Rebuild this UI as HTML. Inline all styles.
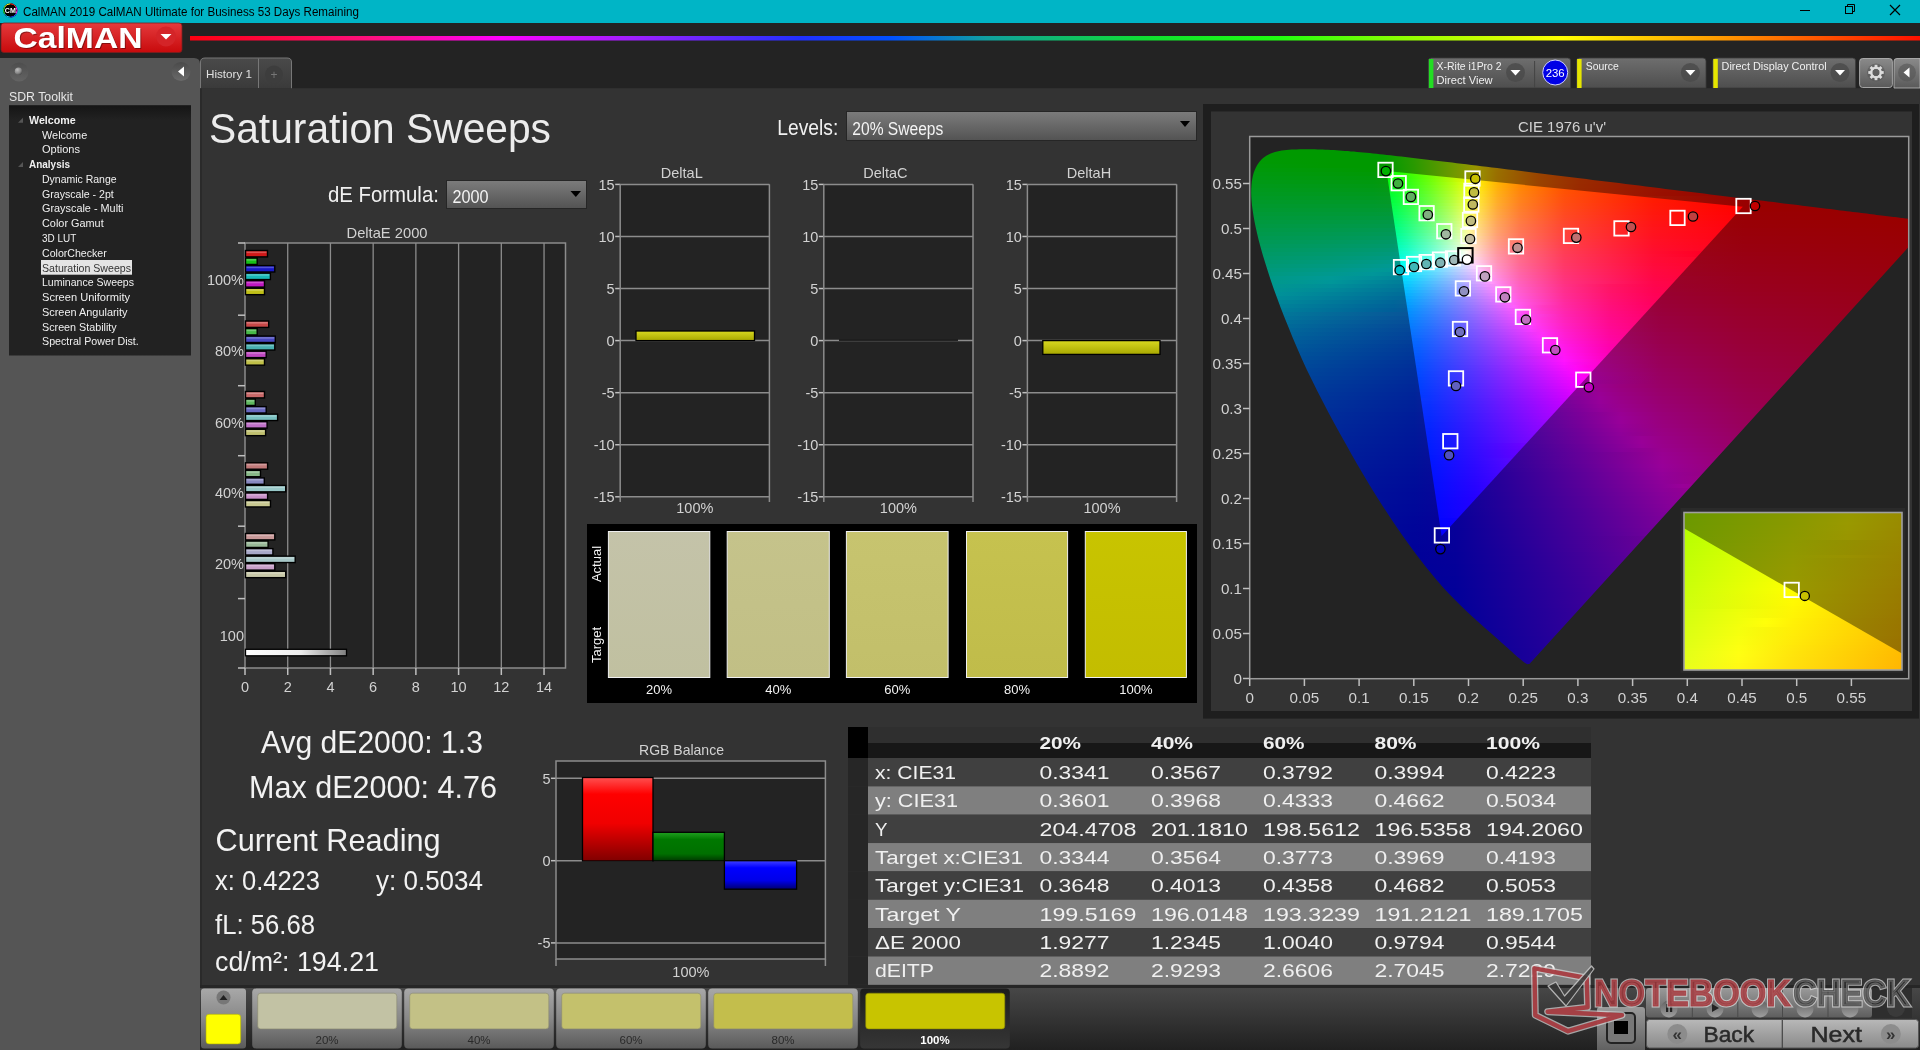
<!DOCTYPE html>
<html><head><meta charset="utf-8"><title>CalMAN</title>
<style>html,body{margin:0;padding:0;background:#333;overflow:hidden}svg{display:block;will-change:transform}text{font-family:"Liberation Sans", sans-serif}</style>
</head><body>
<svg width="1920" height="1050" viewBox="0 0 1920 1050">
<defs><linearGradient id="gRed" x1="0" y1="0" x2="0" y2="1"><stop offset="0" stop-color="#e43a3c"/><stop offset="1" stop-color="#c80a0c"/></linearGradient><linearGradient id="gRain" x1="0" y1="0" x2="1" y2="0"><stop offset="0" stop-color="#ff0010"/><stop offset="0.106" stop-color="#ff1080"/><stop offset="0.18" stop-color="#ff00ff"/><stop offset="0.255" stop-color="#a020ff"/><stop offset="0.353" stop-color="#2030ff"/><stop offset="0.405" stop-color="#0050ff"/><stop offset="0.46" stop-color="#10a0a0"/><stop offset="0.554" stop-color="#10e030"/><stop offset="0.629" stop-color="#20ff10"/><stop offset="0.703" stop-color="#90ff00"/><stop offset="0.793" stop-color="#ffff00"/><stop offset="0.879" stop-color="#ffa000"/><stop offset="1" stop-color="#ff1000"/></linearGradient><linearGradient id="gBtn" x1="0" y1="0" x2="0" y2="1"><stop offset="0" stop-color="#4a4a4a"/><stop offset="1" stop-color="#6a6a6a"/></linearGradient><radialGradient id="gSph" cx="0.35" cy="0.3" r="0.75"><stop offset="0" stop-color="#bdbdbd"/><stop offset="0.6" stop-color="#8a8a8a"/><stop offset="1" stop-color="#4a4a4a"/></radialGradient><linearGradient id="gTree" x1="0" y1="0" x2="0" y2="1"><stop offset="0" stop-color="#151515"/><stop offset="0.06" stop-color="#222222"/><stop offset="1" stop-color="#222222"/></linearGradient><linearGradient id="gTab" x1="0" y1="0" x2="0" y2="1"><stop offset="0" stop-color="#4a4a4a"/><stop offset="1" stop-color="#3a3a3a"/></linearGradient><linearGradient id="gDrop" x1="0" y1="0" x2="0" y2="1"><stop offset="0" stop-color="#7c7c7c"/><stop offset="1" stop-color="#535353"/></linearGradient><linearGradient id="gb0" x1="0" y1="0" x2="0" y2="1"><stop offset="0" stop-color="#ffffff"/><stop offset="0.35" stop-color="#d01818"/><stop offset="1" stop-color="#d01818"/></linearGradient><linearGradient id="gb1" x1="0" y1="0" x2="0" y2="1"><stop offset="0" stop-color="#ffffff"/><stop offset="0.35" stop-color="#18c018"/><stop offset="1" stop-color="#18c018"/></linearGradient><linearGradient id="gb2" x1="0" y1="0" x2="0" y2="1"><stop offset="0" stop-color="#ffffff"/><stop offset="0.35" stop-color="#1818c8"/><stop offset="1" stop-color="#1818c8"/></linearGradient><linearGradient id="gb3" x1="0" y1="0" x2="0" y2="1"><stop offset="0" stop-color="#ffffff"/><stop offset="0.35" stop-color="#18b8b8"/><stop offset="1" stop-color="#18b8b8"/></linearGradient><linearGradient id="gb4" x1="0" y1="0" x2="0" y2="1"><stop offset="0" stop-color="#ffffff"/><stop offset="0.35" stop-color="#c018c0"/><stop offset="1" stop-color="#c018c0"/></linearGradient><linearGradient id="gb5" x1="0" y1="0" x2="0" y2="1"><stop offset="0" stop-color="#ffffff"/><stop offset="0.35" stop-color="#c0c018"/><stop offset="1" stop-color="#c0c018"/></linearGradient><linearGradient id="gb6" x1="0" y1="0" x2="0" y2="1"><stop offset="0" stop-color="#ffffff"/><stop offset="0.35" stop-color="#c84848"/><stop offset="1" stop-color="#c84848"/></linearGradient><linearGradient id="gb7" x1="0" y1="0" x2="0" y2="1"><stop offset="0" stop-color="#ffffff"/><stop offset="0.35" stop-color="#48b848"/><stop offset="1" stop-color="#48b848"/></linearGradient><linearGradient id="gb8" x1="0" y1="0" x2="0" y2="1"><stop offset="0" stop-color="#ffffff"/><stop offset="0.35" stop-color="#4848c0"/><stop offset="1" stop-color="#4848c0"/></linearGradient><linearGradient id="gb9" x1="0" y1="0" x2="0" y2="1"><stop offset="0" stop-color="#ffffff"/><stop offset="0.35" stop-color="#48b0b0"/><stop offset="1" stop-color="#48b0b0"/></linearGradient><linearGradient id="gb10" x1="0" y1="0" x2="0" y2="1"><stop offset="0" stop-color="#ffffff"/><stop offset="0.35" stop-color="#c048c0"/><stop offset="1" stop-color="#c048c0"/></linearGradient><linearGradient id="gb11" x1="0" y1="0" x2="0" y2="1"><stop offset="0" stop-color="#ffffff"/><stop offset="0.35" stop-color="#c0c048"/><stop offset="1" stop-color="#c0c048"/></linearGradient><linearGradient id="gb12" x1="0" y1="0" x2="0" y2="1"><stop offset="0" stop-color="#ffffff"/><stop offset="0.35" stop-color="#c86868"/><stop offset="1" stop-color="#c86868"/></linearGradient><linearGradient id="gb13" x1="0" y1="0" x2="0" y2="1"><stop offset="0" stop-color="#ffffff"/><stop offset="0.35" stop-color="#60b860"/><stop offset="1" stop-color="#60b860"/></linearGradient><linearGradient id="gb14" x1="0" y1="0" x2="0" y2="1"><stop offset="0" stop-color="#ffffff"/><stop offset="0.35" stop-color="#6868c0"/><stop offset="1" stop-color="#6868c0"/></linearGradient><linearGradient id="gb15" x1="0" y1="0" x2="0" y2="1"><stop offset="0" stop-color="#ffffff"/><stop offset="0.35" stop-color="#78c0c0"/><stop offset="1" stop-color="#78c0c0"/></linearGradient><linearGradient id="gb16" x1="0" y1="0" x2="0" y2="1"><stop offset="0" stop-color="#ffffff"/><stop offset="0.35" stop-color="#c070c8"/><stop offset="1" stop-color="#c070c8"/></linearGradient><linearGradient id="gb17" x1="0" y1="0" x2="0" y2="1"><stop offset="0" stop-color="#ffffff"/><stop offset="0.35" stop-color="#c0c070"/><stop offset="1" stop-color="#c0c070"/></linearGradient><linearGradient id="gb18" x1="0" y1="0" x2="0" y2="1"><stop offset="0" stop-color="#ffffff"/><stop offset="0.35" stop-color="#c07878"/><stop offset="1" stop-color="#c07878"/></linearGradient><linearGradient id="gb19" x1="0" y1="0" x2="0" y2="1"><stop offset="0" stop-color="#ffffff"/><stop offset="0.35" stop-color="#88b888"/><stop offset="1" stop-color="#88b888"/></linearGradient><linearGradient id="gb20" x1="0" y1="0" x2="0" y2="1"><stop offset="0" stop-color="#ffffff"/><stop offset="0.35" stop-color="#8888c0"/><stop offset="1" stop-color="#8888c0"/></linearGradient><linearGradient id="gb21" x1="0" y1="0" x2="0" y2="1"><stop offset="0" stop-color="#ffffff"/><stop offset="0.35" stop-color="#98c8c8"/><stop offset="1" stop-color="#98c8c8"/></linearGradient><linearGradient id="gb22" x1="0" y1="0" x2="0" y2="1"><stop offset="0" stop-color="#ffffff"/><stop offset="0.35" stop-color="#c890c8"/><stop offset="1" stop-color="#c890c8"/></linearGradient><linearGradient id="gb23" x1="0" y1="0" x2="0" y2="1"><stop offset="0" stop-color="#ffffff"/><stop offset="0.35" stop-color="#c8c890"/><stop offset="1" stop-color="#c8c890"/></linearGradient><linearGradient id="gb24" x1="0" y1="0" x2="0" y2="1"><stop offset="0" stop-color="#ffffff"/><stop offset="0.35" stop-color="#c89898"/><stop offset="1" stop-color="#c89898"/></linearGradient><linearGradient id="gb25" x1="0" y1="0" x2="0" y2="1"><stop offset="0" stop-color="#ffffff"/><stop offset="0.35" stop-color="#98b898"/><stop offset="1" stop-color="#98b898"/></linearGradient><linearGradient id="gb26" x1="0" y1="0" x2="0" y2="1"><stop offset="0" stop-color="#ffffff"/><stop offset="0.35" stop-color="#a8a8c8"/><stop offset="1" stop-color="#a8a8c8"/></linearGradient><linearGradient id="gb27" x1="0" y1="0" x2="0" y2="1"><stop offset="0" stop-color="#ffffff"/><stop offset="0.35" stop-color="#a8c8c8"/><stop offset="1" stop-color="#a8c8c8"/></linearGradient><linearGradient id="gb28" x1="0" y1="0" x2="0" y2="1"><stop offset="0" stop-color="#ffffff"/><stop offset="0.35" stop-color="#c8a0c8"/><stop offset="1" stop-color="#c8a0c8"/></linearGradient><linearGradient id="gb29" x1="0" y1="0" x2="0" y2="1"><stop offset="0" stop-color="#ffffff"/><stop offset="0.35" stop-color="#c8c8a8"/><stop offset="1" stop-color="#c8c8a8"/></linearGradient><linearGradient id="gWhiteBar" x1="0" y1="0" x2="1" y2="0"><stop offset="0" stop-color="#ffffff"/><stop offset="0.55" stop-color="#ececec"/><stop offset="1" stop-color="#808080"/></linearGradient><linearGradient id="gy0" x1="0" y1="0" x2="0" y2="1"><stop offset="0" stop-color="#d8d820"/><stop offset="1" stop-color="#a8a800"/></linearGradient><linearGradient id="gy2" x1="0" y1="0" x2="0" y2="1"><stop offset="0" stop-color="#d8d820"/><stop offset="1" stop-color="#a8a800"/></linearGradient><linearGradient id="gsw0" x1="0" y1="0" x2="0" y2="1"><stop offset="0" stop-color="#c4c3a9"/><stop offset="1" stop-color="#c0c0a0"/></linearGradient><linearGradient id="gsw1" x1="0" y1="0" x2="0" y2="1"><stop offset="0" stop-color="#c5c38b"/><stop offset="1" stop-color="#c1bf85"/></linearGradient><linearGradient id="gsw2" x1="0" y1="0" x2="0" y2="1"><stop offset="0" stop-color="#c7c46f"/><stop offset="1" stop-color="#c2bf6a"/></linearGradient><linearGradient id="gsw3" x1="0" y1="0" x2="0" y2="1"><stop offset="0" stop-color="#c6c24f"/><stop offset="1" stop-color="#c0bc4a"/></linearGradient><linearGradient id="gsw4" x1="0" y1="0" x2="0" y2="1"><stop offset="0" stop-color="#c8c400"/><stop offset="1" stop-color="#c3bd00"/></linearGradient><linearGradient id="gR" x1="0" y1="0" x2="0" y2="1"><stop offset="0" stop-color="#ff5050"/><stop offset="0.2" stop-color="#ff0000"/><stop offset="0.55" stop-color="#f00000"/><stop offset="1" stop-color="#800000"/></linearGradient><linearGradient id="gG" x1="0" y1="0" x2="0" y2="1"><stop offset="0" stop-color="#20a020"/><stop offset="0.25" stop-color="#007800"/><stop offset="0.75" stop-color="#007000"/><stop offset="1" stop-color="#003800"/></linearGradient><linearGradient id="gB" x1="0" y1="0" x2="0" y2="1"><stop offset="0" stop-color="#4040ff"/><stop offset="0.25" stop-color="#0000ff"/><stop offset="0.7" stop-color="#0000e8"/><stop offset="1" stop-color="#000070"/></linearGradient><linearGradient id="gHdr" x1="0" y1="0" x2="0" y2="1"><stop offset="0" stop-color="#2f2f2f"/><stop offset="0.52" stop-color="#2f2f2f"/><stop offset="0.53" stop-color="#171717"/><stop offset="1" stop-color="#171717"/></linearGradient><linearGradient id="gTool" x1="0" y1="0" x2="0" y2="1"><stop offset="0" stop-color="#6e6e6e"/><stop offset="1" stop-color="#4e4e4e"/></linearGradient><linearGradient id="gGear" x1="0" y1="0" x2="0" y2="1"><stop offset="0" stop-color="#8a8a8a"/><stop offset="1" stop-color="#5a5a5a"/></linearGradient><linearGradient id="gStrip" x1="0" y1="0" x2="0" y2="1"><stop offset="0" stop-color="#474747"/><stop offset="1" stop-color="#202020"/></linearGradient><linearGradient id="gThumb" x1="0" y1="0" x2="0" y2="1"><stop offset="0" stop-color="#a8a8a8"/><stop offset="0.5" stop-color="#888888"/><stop offset="1" stop-color="#5a5a5a"/></linearGradient><linearGradient id="gThumbSel" x1="0" y1="0" x2="0" y2="1"><stop offset="0" stop-color="#1c1c1c"/><stop offset="1" stop-color="#363636"/></linearGradient><linearGradient id="gCtl" x1="0" y1="0" x2="0" y2="1"><stop offset="0" stop-color="#9a9a9a"/><stop offset="1" stop-color="#5e5e5e"/></linearGradient><linearGradient id="gCirc" x1="0" y1="0" x2="0" y2="1"><stop offset="0" stop-color="#5a5a5a"/><stop offset="1" stop-color="#b0b0b0"/></linearGradient><linearGradient id="gNav" x1="0" y1="0" x2="0" y2="1"><stop offset="0" stop-color="#b8b8b8"/><stop offset="1" stop-color="#8a8a8a"/></linearGradient><clipPath id="cpLocus"><path d="M1529.4 664.1 L1529.4 664.1 L1529.3 664.1 L1529.2 664.1 L1529.1 664.1 L1529.0 664.1 L1528.9 664.1 L1528.8 664.1 L1528.7 664.1 L1528.5 664.1 L1528.4 664.1 L1528.3 664.1 L1528.2 664.1 L1528.0 664.1 L1527.9 664.2 L1527.8 664.2 L1527.6 664.2 L1527.4 664.2 L1527.3 664.1 L1527.0 664.1 L1526.8 664.0 L1526.6 663.8 L1526.3 663.7 L1526.0 663.5 L1525.6 663.3 L1525.2 663.0 L1524.8 662.7 L1524.3 662.4 L1523.8 662.0 L1523.3 661.7 L1522.8 661.2 L1522.2 660.8 L1521.6 660.3 L1521.0 659.8 L1520.4 659.3 L1519.7 658.7 L1519.0 658.1 L1518.1 657.4 L1517.3 656.7 L1516.4 655.9 L1515.4 655.1 L1514.4 654.2 L1513.4 653.3 L1512.4 652.3 L1511.3 651.3 L1510.1 650.3 L1509.0 649.2 L1507.7 648.1 L1506.5 646.9 L1505.1 645.7 L1503.7 644.5 L1502.3 643.2 L1500.8 641.9 L1499.3 640.6 L1497.6 639.1 L1495.9 637.6 L1494.1 636.0 L1492.2 634.3 L1490.2 632.6 L1488.2 630.8 L1486.1 628.9 L1483.9 627.0 L1481.7 625.1 L1479.5 623.1 L1477.1 621.0 L1474.7 618.8 L1472.2 616.5 L1469.5 614.0 L1466.8 611.5 L1464.0 608.8 L1461.1 606.0 L1458.1 603.1 L1455.1 599.9 L1451.9 596.7 L1448.7 593.4 L1445.4 589.9 L1442.0 586.2 L1438.4 582.1 L1434.5 577.5 L1430.5 572.5 L1426.1 567.2 L1421.7 561.5 L1417.0 555.5 L1412.2 549.1 L1407.3 542.3 L1402.3 535.2 L1397.1 527.7 L1391.7 519.8 L1386.3 511.6 L1380.7 503.0 L1375.2 494.2 L1369.5 484.9 L1363.7 475.2 L1357.8 465.2 L1351.9 455.0 L1346.1 444.6 L1340.3 434.2 L1334.5 423.7 L1328.7 412.9 L1323.0 401.9 L1317.3 391.0 L1311.9 380.1 L1306.7 369.4 L1301.8 358.8 L1297.1 348.1 L1292.6 337.5 L1288.4 327.1 L1284.3 316.9 L1280.5 307.2 L1277.0 297.7 L1273.6 288.5 L1270.5 279.5 L1267.7 270.8 L1265.1 262.6 L1262.7 254.7 L1260.6 247.3 L1258.7 240.3 L1257.1 233.6 L1255.7 227.3 L1254.5 221.4 L1253.5 215.7 L1252.7 210.4 L1252.0 205.5 L1251.6 200.9 L1251.3 196.5 L1251.2 192.5 L1251.3 188.6 L1251.5 184.9 L1251.8 181.5 L1252.4 178.3 L1253.0 175.3 L1253.8 172.5 L1254.8 169.9 L1255.9 167.5 L1257.1 165.2 L1258.4 163.2 L1259.9 161.3 L1261.5 159.6 L1263.1 158.1 L1264.9 156.7 L1266.7 155.5 L1268.7 154.5 L1270.7 153.5 L1272.8 152.8 L1275.0 152.0 L1277.2 151.4 L1279.5 150.9 L1281.8 150.6 L1284.2 150.3 L1286.6 150.0 L1289.1 149.8 L1291.6 149.6 L1294.1 149.5 L1296.7 149.4 L1299.3 149.3 L1301.9 149.3 L1304.5 149.2 L1307.0 149.2 L1309.6 149.2 L1312.2 149.3 L1314.8 149.3 L1317.4 149.4 L1320.1 149.5 L1322.7 149.6 L1325.4 149.7 L1328.1 149.8 L1330.8 149.9 L1333.6 150.1 L1336.4 150.3 L1339.2 150.5 L1342.1 150.7 L1345.0 150.9 L1347.9 151.1 L1350.9 151.4 L1353.9 151.6 L1357.0 151.9 L1360.1 152.2 L1363.2 152.5 L1366.4 152.8 L1369.7 153.1 L1373.0 153.5 L1376.4 153.8 L1379.8 154.2 L1383.2 154.6 L1386.7 154.9 L1390.3 155.3 L1394.0 155.7 L1397.7 156.2 L1401.4 156.6 L1405.3 157.0 L1409.2 157.5 L1413.2 157.9 L1417.2 158.4 L1421.3 158.9 L1425.5 159.4 L1429.7 159.9 L1434.0 160.4 L1438.4 161.0 L1442.9 161.5 L1447.4 162.0 L1452.1 162.6 L1456.8 163.2 L1461.5 163.7 L1466.4 164.3 L1471.3 164.9 L1476.4 165.5 L1481.4 166.2 L1486.6 166.8 L1491.9 167.5 L1497.2 168.1 L1502.6 168.8 L1508.1 169.4 L1513.7 170.1 L1519.3 170.8 L1525.0 171.5 L1530.8 172.3 L1536.7 173.0 L1542.7 173.7 L1548.7 174.5 L1554.8 175.2 L1561.0 176.0 L1567.2 176.7 L1573.5 177.5 L1579.8 178.3 L1586.3 179.1 L1592.7 179.9 L1599.3 180.7 L1605.8 181.5 L1612.4 182.3 L1619.0 183.1 L1625.7 183.9 L1632.4 184.8 L1639.1 185.6 L1645.8 186.4 L1652.4 187.2 L1658.9 188.1 L1665.4 188.9 L1671.9 189.7 L1678.3 190.4 L1684.7 191.2 L1691.1 192.0 L1697.5 192.8 L1703.9 193.6 L1710.2 194.4 L1716.5 195.2 L1722.7 195.9 L1728.8 196.7 L1734.8 197.4 L1740.6 198.1 L1746.4 198.8 L1752.0 199.5 L1757.5 200.2 L1763.0 200.8 L1768.3 201.5 L1773.5 202.1 L1778.6 202.8 L1783.6 203.4 L1788.4 204.0 L1793.2 204.6 L1797.8 205.1 L1802.2 205.7 L1806.6 206.2 L1810.8 206.8 L1814.9 207.3 L1818.9 207.8 L1822.7 208.2 L1826.5 208.7 L1830.1 209.1 L1833.6 209.6 L1837.0 210.0 L1840.4 210.4 L1843.6 210.8 L1846.8 211.2 L1849.8 211.5 L1852.8 211.9 L1855.7 212.3 L1858.5 212.6 L1861.3 213.0 L1864.0 213.3 L1866.7 213.6 L1869.3 214.0 L1871.8 214.3 L1874.2 214.6 L1876.6 214.9 L1879.0 215.2 L1881.2 215.4 L1883.4 215.7 L1885.5 216.0 L1887.5 216.2 L1889.5 216.5 L1891.4 216.7 L1893.2 216.9 L1895.0 217.1 L1896.7 217.3 L1898.3 217.5 L1899.8 217.7 L1901.3 217.9 L1902.7 218.1 L1904.1 218.2 L1905.4 218.4 L1906.6 218.5 L1907.9 218.7 L1909.0 218.8 L1910.1 219.0 L1911.2 219.1 L1912.2 219.2 L1913.1 219.4 L1914.0 219.5 L1914.8 219.6 L1915.6 219.7 L1916.4 219.8 L1917.2 219.8 L1918.0 220.0 L1918.9 220.1 L1919.9 220.2 L1920.9 220.3 L1921.9 220.4 L1922.9 220.6 L1923.8 220.7 L1924.6 220.8 L1925.3 220.9 L1925.9 220.9 L1926.6 221.0 L1927.2 221.1 L1927.9 221.2 L1928.6 221.3 L1929.3 221.3 L1930.0 221.4 L1930.7 221.5 L1931.3 221.6 L1931.7 221.6 Z"/></clipPath><clipPath id="cpPlot"><rect x="1249.7" y="136.5" width="659" height="542.2"/></clipPath><clipPath id="cpTri"><path d="M1742.8 206.8 L1386.5 171.1 L1441.6 536.1 Z"/></clipPath><linearGradient id="r0" gradientUnits="userSpaceOnUse" x1="1249" y1="0" x2="1910" y2="0"><stop offset="0.0000" stop-color="#009900"/><stop offset="0.1250" stop-color="#009900"/><stop offset="0.1875" stop-color="#009900"/><stop offset="0.2031" stop-color="#009900"/><stop offset="0.2188" stop-color="#0e9900"/><stop offset="0.2500" stop-color="#2b9900"/><stop offset="0.3125" stop-color="#719900"/><stop offset="0.3438" stop-color="#999700"/><stop offset="0.3750" stop-color="#997400"/><stop offset="0.4375" stop-color="#994900"/><stop offset="0.5000" stop-color="#993000"/><stop offset="0.6250" stop-color="#991500"/><stop offset="0.7500" stop-color="#990600"/><stop offset="1.0000" stop-color="#990000"/></linearGradient><linearGradient id="r1" gradientUnits="userSpaceOnUse" x1="1249" y1="0" x2="1910" y2="0"><stop offset="0.0000" stop-color="#009900"/><stop offset="0.1250" stop-color="#009900"/><stop offset="0.1875" stop-color="#009900"/><stop offset="0.2031" stop-color="#009900"/><stop offset="0.2188" stop-color="#0d9900"/><stop offset="0.2500" stop-color="#2b9900"/><stop offset="0.3125" stop-color="#719900"/><stop offset="0.3438" stop-color="#999700"/><stop offset="0.3750" stop-color="#997300"/><stop offset="0.4375" stop-color="#994800"/><stop offset="0.5000" stop-color="#993000"/><stop offset="0.6250" stop-color="#991400"/><stop offset="0.7500" stop-color="#990600"/><stop offset="1.0000" stop-color="#990000"/></linearGradient><linearGradient id="r2" gradientUnits="userSpaceOnUse" x1="1249" y1="0" x2="1910" y2="0"><stop offset="0.0000" stop-color="#009901"/><stop offset="0.1250" stop-color="#009900"/><stop offset="0.1875" stop-color="#009900"/><stop offset="0.2031" stop-color="#009900"/><stop offset="0.2188" stop-color="#0c9900"/><stop offset="0.2500" stop-color="#2a9900"/><stop offset="0.3125" stop-color="#729900"/><stop offset="0.3438" stop-color="#999600"/><stop offset="0.3750" stop-color="#997200"/><stop offset="0.4375" stop-color="#994800"/><stop offset="0.5000" stop-color="#992f00"/><stop offset="0.6250" stop-color="#991400"/><stop offset="0.7500" stop-color="#990500"/><stop offset="1.0000" stop-color="#990000"/></linearGradient><linearGradient id="r3" gradientUnits="userSpaceOnUse" x1="1249" y1="0" x2="1910" y2="0"><stop offset="0.0000" stop-color="#009904"/><stop offset="0.1250" stop-color="#009900"/><stop offset="0.1875" stop-color="#009900"/><stop offset="0.2188" stop-color="#0c9900"/><stop offset="0.2500" stop-color="#2a9900"/><stop offset="0.3125" stop-color="#729900"/><stop offset="0.3438" stop-color="#999500"/><stop offset="0.3750" stop-color="#997100"/><stop offset="0.4375" stop-color="#994700"/><stop offset="0.5000" stop-color="#992e00"/><stop offset="0.6250" stop-color="#991300"/><stop offset="0.7500" stop-color="#990500"/><stop offset="1.0000" stop-color="#990000"/></linearGradient><linearGradient id="r4" gradientUnits="userSpaceOnUse" x1="1249" y1="0" x2="1910" y2="0"><stop offset="0.0000" stop-color="#009908"/><stop offset="0.1250" stop-color="#009900"/><stop offset="0.1875" stop-color="#009900"/><stop offset="0.2188" stop-color="#0b9900"/><stop offset="0.2500" stop-color="#299900"/><stop offset="0.3125" stop-color="#729900"/><stop offset="0.3438" stop-color="#999400"/><stop offset="0.3750" stop-color="#997000"/><stop offset="0.4375" stop-color="#994600"/><stop offset="0.5000" stop-color="#992e00"/><stop offset="0.6250" stop-color="#991300"/><stop offset="0.7500" stop-color="#990400"/><stop offset="1.0000" stop-color="#990000"/></linearGradient><linearGradient id="r5" gradientUnits="userSpaceOnUse" x1="1249" y1="0" x2="1910" y2="0"><stop offset="0.0000" stop-color="#00990b"/><stop offset="0.1250" stop-color="#009905"/><stop offset="0.1875" stop-color="#009900"/><stop offset="0.2188" stop-color="#0a9900"/><stop offset="0.2500" stop-color="#299900"/><stop offset="0.3125" stop-color="#729900"/><stop offset="0.3438" stop-color="#999300"/><stop offset="0.3750" stop-color="#997000"/><stop offset="0.4375" stop-color="#994500"/><stop offset="0.5000" stop-color="#992d00"/><stop offset="0.6250" stop-color="#991200"/><stop offset="0.7500" stop-color="#990400"/><stop offset="1.0000" stop-color="#990000"/></linearGradient><linearGradient id="r6" gradientUnits="userSpaceOnUse" x1="1249" y1="0" x2="1910" y2="0"><stop offset="0.0000" stop-color="#00990f"/><stop offset="0.1250" stop-color="#009909"/><stop offset="0.1875" stop-color="#009905"/><stop offset="0.2188" stop-color="#099903"/><stop offset="0.2500" stop-color="#289900"/><stop offset="0.3125" stop-color="#739900"/><stop offset="0.3438" stop-color="#999300"/><stop offset="0.3750" stop-color="#996f00"/><stop offset="0.4375" stop-color="#994400"/><stop offset="0.5000" stop-color="#992c00"/><stop offset="0.6250" stop-color="#991200"/><stop offset="0.7500" stop-color="#990300"/><stop offset="1.0000" stop-color="#990000"/></linearGradient><linearGradient id="r7" gradientUnits="userSpaceOnUse" x1="1249" y1="0" x2="1910" y2="0"><stop offset="0.0000" stop-color="#009912"/><stop offset="0.1250" stop-color="#00990d"/><stop offset="0.1875" stop-color="#00990a"/><stop offset="0.2188" stop-color="#099908"/><stop offset="0.2500" stop-color="#289905"/><stop offset="0.3125" stop-color="#739900"/><stop offset="0.3438" stop-color="#999200"/><stop offset="0.3750" stop-color="#996e00"/><stop offset="0.4375" stop-color="#994400"/><stop offset="0.5000" stop-color="#992c00"/><stop offset="0.6250" stop-color="#991100"/><stop offset="0.7500" stop-color="#990300"/><stop offset="1.0000" stop-color="#990000"/></linearGradient><linearGradient id="r8" gradientUnits="userSpaceOnUse" x1="1249" y1="0" x2="1910" y2="0"><stop offset="0.0000" stop-color="#009916"/><stop offset="0.1250" stop-color="#009911"/><stop offset="0.1875" stop-color="#00990e"/><stop offset="0.2188" stop-color="#08990d"/><stop offset="0.2500" stop-color="#27990b"/><stop offset="0.3125" stop-color="#739906"/><stop offset="0.3281" stop-color="#8a9904"/><stop offset="0.3438" stop-color="#999103"/><stop offset="0.3750" stop-color="#996d00"/><stop offset="0.4375" stop-color="#994300"/><stop offset="0.5000" stop-color="#992b00"/><stop offset="0.6250" stop-color="#991100"/><stop offset="0.7500" stop-color="#990300"/><stop offset="1.0000" stop-color="#990000"/></linearGradient><linearGradient id="r9" gradientUnits="userSpaceOnUse" x1="1249" y1="0" x2="1910" y2="0"><stop offset="0.0000" stop-color="#00991a"/><stop offset="0.1250" stop-color="#009916"/><stop offset="0.1875" stop-color="#009913"/><stop offset="0.2188" stop-color="#079912"/><stop offset="0.2500" stop-color="#279910"/><stop offset="0.3125" stop-color="#74990c"/><stop offset="0.3281" stop-color="#8a990b"/><stop offset="0.3438" stop-color="#999009"/><stop offset="0.3750" stop-color="#996c05"/><stop offset="0.4375" stop-color="#994200"/><stop offset="0.5000" stop-color="#992a00"/><stop offset="0.6250" stop-color="#991000"/><stop offset="0.7500" stop-color="#990200"/><stop offset="1.0000" stop-color="#990000"/></linearGradient><linearGradient id="r10" gradientUnits="userSpaceOnUse" x1="1249" y1="0" x2="1910" y2="0"><stop offset="0.0000" stop-color="#00991e"/><stop offset="0.1250" stop-color="#00991a"/><stop offset="0.1875" stop-color="#009918"/><stop offset="0.2188" stop-color="#069917"/><stop offset="0.2500" stop-color="#269916"/><stop offset="0.3125" stop-color="#749912"/><stop offset="0.3281" stop-color="#8b9911"/><stop offset="0.3438" stop-color="#998f0f"/><stop offset="0.3750" stop-color="#996b0a"/><stop offset="0.4375" stop-color="#994103"/><stop offset="0.5000" stop-color="#992900"/><stop offset="0.6250" stop-color="#991000"/><stop offset="0.7500" stop-color="#990200"/><stop offset="1.0000" stop-color="#990000"/></linearGradient><linearGradient id="r11" gradientUnits="userSpaceOnUse" x1="1249" y1="0" x2="1910" y2="0"><stop offset="0.0000" stop-color="#009921"/><stop offset="0.1250" stop-color="#00991f"/><stop offset="0.1875" stop-color="#00991d"/><stop offset="0.2188" stop-color="#05991c"/><stop offset="0.2500" stop-color="#26991b"/><stop offset="0.3125" stop-color="#749919"/><stop offset="0.3281" stop-color="#8c9918"/><stop offset="0.3438" stop-color="#998e15"/><stop offset="0.3750" stop-color="#996a0f"/><stop offset="0.4375" stop-color="#994007"/><stop offset="0.5000" stop-color="#992902"/><stop offset="0.6250" stop-color="#990f00"/><stop offset="0.7500" stop-color="#990100"/><stop offset="1.0000" stop-color="#990000"/></linearGradient><linearGradient id="r12" gradientUnits="userSpaceOnUse" x1="1249" y1="0" x2="1910" y2="0"><stop offset="0.0000" stop-color="#009925"/><stop offset="0.1250" stop-color="#009924"/><stop offset="0.1875" stop-color="#009922"/><stop offset="0.2188" stop-color="#059922"/><stop offset="0.2500" stop-color="#259921"/><stop offset="0.3125" stop-color="#75991f"/><stop offset="0.3281" stop-color="#8c991f"/><stop offset="0.3438" stop-color="#998e1c"/><stop offset="0.3750" stop-color="#996914"/><stop offset="0.4375" stop-color="#99400a"/><stop offset="0.5000" stop-color="#992805"/><stop offset="0.7500" stop-color="#990100"/><stop offset="1.0000" stop-color="#990000"/></linearGradient><linearGradient id="r13" gradientUnits="userSpaceOnUse" x1="1249" y1="0" x2="1910" y2="0"><stop offset="0.0000" stop-color="#009929"/><stop offset="0.1250" stop-color="#009928"/><stop offset="0.1875" stop-color="#009928"/><stop offset="0.2188" stop-color="#049927"/><stop offset="0.2500" stop-color="#259927"/><stop offset="0.3125" stop-color="#759926"/><stop offset="0.3281" stop-color="#8d9926"/><stop offset="0.3359" stop-color="#999925"/><stop offset="0.3438" stop-color="#998d22"/><stop offset="0.3750" stop-color="#996919"/><stop offset="0.4375" stop-color="#993f0e"/><stop offset="0.5000" stop-color="#992708"/><stop offset="0.7500" stop-color="#990000"/><stop offset="1.0000" stop-color="#990000"/></linearGradient><linearGradient id="r14" gradientUnits="userSpaceOnUse" x1="1249" y1="0" x2="1910" y2="0"><stop offset="0.0000" stop-color="#00992d"/><stop offset="0.1250" stop-color="#00992d"/><stop offset="0.1875" stop-color="#00992d"/><stop offset="0.2188" stop-color="#03992d"/><stop offset="0.2500" stop-color="#24992d"/><stop offset="0.3125" stop-color="#76992d"/><stop offset="0.3281" stop-color="#8e992d"/><stop offset="0.3438" stop-color="#998c29"/><stop offset="0.3750" stop-color="#99681e"/><stop offset="0.4375" stop-color="#993e12"/><stop offset="0.5000" stop-color="#99270b"/><stop offset="0.7500" stop-color="#990000"/><stop offset="1.0000" stop-color="#990000"/></linearGradient><linearGradient id="r15" gradientUnits="userSpaceOnUse" x1="1249" y1="0" x2="1910" y2="0"><stop offset="0.0000" stop-color="#009931"/><stop offset="0.1250" stop-color="#009932"/><stop offset="0.1875" stop-color="#009932"/><stop offset="0.2188" stop-color="#029933"/><stop offset="0.2500" stop-color="#249933"/><stop offset="0.3125" stop-color="#769934"/><stop offset="0.3281" stop-color="#8e9934"/><stop offset="0.3438" stop-color="#998b2f"/><stop offset="0.3750" stop-color="#996723"/><stop offset="0.4375" stop-color="#993d16"/><stop offset="0.5000" stop-color="#99260e"/><stop offset="0.6250" stop-color="#990d06"/><stop offset="0.7500" stop-color="#990001"/><stop offset="1.0000" stop-color="#990000"/></linearGradient><linearGradient id="r16" gradientUnits="userSpaceOnUse" x1="1249" y1="0" x2="1910" y2="0"><stop offset="0.0000" stop-color="#009936"/><stop offset="0.1250" stop-color="#009937"/><stop offset="0.1875" stop-color="#009938"/><stop offset="0.2188" stop-color="#019939"/><stop offset="0.2500" stop-color="#239939"/><stop offset="0.3125" stop-color="#76993b"/><stop offset="0.3281" stop-color="#8f993b"/><stop offset="0.3438" stop-color="#998a36"/><stop offset="0.3750" stop-color="#996629"/><stop offset="0.4375" stop-color="#993c19"/><stop offset="0.5000" stop-color="#992511"/><stop offset="0.6250" stop-color="#990c08"/><stop offset="0.7500" stop-color="#990003"/><stop offset="1.0000" stop-color="#990000"/></linearGradient><linearGradient id="r17" gradientUnits="userSpaceOnUse" x1="1249" y1="0" x2="1910" y2="0"><stop offset="0.0000" stop-color="#00993a"/><stop offset="0.1250" stop-color="#00993c"/><stop offset="0.1875" stop-color="#00993e"/><stop offset="0.2188" stop-color="#00993f"/><stop offset="0.2500" stop-color="#229940"/><stop offset="0.3125" stop-color="#779942"/><stop offset="0.3281" stop-color="#909943"/><stop offset="0.3438" stop-color="#99893d"/><stop offset="0.3750" stop-color="#99652e"/><stop offset="0.4375" stop-color="#993b1d"/><stop offset="0.5000" stop-color="#992414"/><stop offset="0.6250" stop-color="#990c0a"/><stop offset="0.7500" stop-color="#990004"/><stop offset="1.0000" stop-color="#990000"/></linearGradient><linearGradient id="r18" gradientUnits="userSpaceOnUse" x1="1249" y1="0" x2="1910" y2="0"><stop offset="0.0000" stop-color="#00993e"/><stop offset="0.1250" stop-color="#009941"/><stop offset="0.1875" stop-color="#009944"/><stop offset="0.2188" stop-color="#009945"/><stop offset="0.2500" stop-color="#229946"/><stop offset="0.3125" stop-color="#77994a"/><stop offset="0.3281" stop-color="#91994b"/><stop offset="0.3438" stop-color="#998844"/><stop offset="0.3750" stop-color="#996433"/><stop offset="0.4375" stop-color="#993a21"/><stop offset="0.5000" stop-color="#992417"/><stop offset="0.6250" stop-color="#990b0c"/><stop offset="0.7500" stop-color="#990006"/><stop offset="1.0000" stop-color="#990000"/></linearGradient><linearGradient id="r19" gradientUnits="userSpaceOnUse" x1="1249" y1="0" x2="1910" y2="0"><stop offset="0.0000" stop-color="#009942"/><stop offset="0.1250" stop-color="#009947"/><stop offset="0.1875" stop-color="#009949"/><stop offset="0.2188" stop-color="#00994b"/><stop offset="0.2500" stop-color="#21994d"/><stop offset="0.3125" stop-color="#789952"/><stop offset="0.3281" stop-color="#919953"/><stop offset="0.3438" stop-color="#99874b"/><stop offset="0.3750" stop-color="#996339"/><stop offset="0.4375" stop-color="#993a25"/><stop offset="0.5000" stop-color="#99231a"/><stop offset="0.6250" stop-color="#990a0e"/><stop offset="0.7500" stop-color="#990007"/><stop offset="1.0000" stop-color="#990001"/></linearGradient><linearGradient id="r20" gradientUnits="userSpaceOnUse" x1="1249" y1="0" x2="1910" y2="0"><stop offset="0.0000" stop-color="#009947"/><stop offset="0.1250" stop-color="#00994c"/><stop offset="0.1875" stop-color="#009950"/><stop offset="0.2188" stop-color="#009952"/><stop offset="0.2500" stop-color="#219954"/><stop offset="0.3125" stop-color="#78995a"/><stop offset="0.3281" stop-color="#92995c"/><stop offset="0.3438" stop-color="#998652"/><stop offset="0.3750" stop-color="#99623f"/><stop offset="0.4375" stop-color="#993929"/><stop offset="0.5000" stop-color="#99221d"/><stop offset="0.6250" stop-color="#990a10"/><stop offset="0.7500" stop-color="#990009"/><stop offset="1.0000" stop-color="#990002"/></linearGradient><linearGradient id="r21" gradientUnits="userSpaceOnUse" x1="1249" y1="0" x2="1910" y2="0"><stop offset="0.0000" stop-color="#00994b"/><stop offset="0.1250" stop-color="#009952"/><stop offset="0.1875" stop-color="#009956"/><stop offset="0.2188" stop-color="#009958"/><stop offset="0.2500" stop-color="#20995b"/><stop offset="0.3125" stop-color="#789962"/><stop offset="0.3281" stop-color="#939964"/><stop offset="0.3438" stop-color="#998559"/><stop offset="0.3750" stop-color="#996144"/><stop offset="0.4375" stop-color="#99382d"/><stop offset="0.5000" stop-color="#992120"/><stop offset="0.6250" stop-color="#990912"/><stop offset="0.7500" stop-color="#99000a"/><stop offset="1.0000" stop-color="#990003"/></linearGradient><linearGradient id="r22" gradientUnits="userSpaceOnUse" x1="1249" y1="0" x2="1910" y2="0"><stop offset="0.0000" stop-color="#009950"/><stop offset="0.1250" stop-color="#009957"/><stop offset="0.1875" stop-color="#00995c"/><stop offset="0.2188" stop-color="#00995f"/><stop offset="0.2500" stop-color="#1f9962"/><stop offset="0.3125" stop-color="#79996b"/><stop offset="0.3281" stop-color="#94996d"/><stop offset="0.3438" stop-color="#998461"/><stop offset="0.3750" stop-color="#99604a"/><stop offset="0.4375" stop-color="#993730"/><stop offset="0.5000" stop-color="#992123"/><stop offset="0.6250" stop-color="#990914"/><stop offset="0.7500" stop-color="#99000c"/><stop offset="1.0000" stop-color="#990004"/></linearGradient><linearGradient id="r23" gradientUnits="userSpaceOnUse" x1="1249" y1="0" x2="1910" y2="0"><stop offset="0.0000" stop-color="#009954"/><stop offset="0.1250" stop-color="#00995d"/><stop offset="0.1875" stop-color="#009963"/><stop offset="0.2188" stop-color="#009966"/><stop offset="0.2500" stop-color="#1f996a"/><stop offset="0.3125" stop-color="#799973"/><stop offset="0.3281" stop-color="#959976"/><stop offset="0.3438" stop-color="#998368"/><stop offset="0.3750" stop-color="#995f50"/><stop offset="0.4375" stop-color="#993634"/><stop offset="0.5000" stop-color="#992026"/><stop offset="0.6250" stop-color="#990816"/><stop offset="0.7500" stop-color="#99000d"/><stop offset="1.0000" stop-color="#990005"/></linearGradient><linearGradient id="r24" gradientUnits="userSpaceOnUse" x1="1249" y1="0" x2="1910" y2="0"><stop offset="0.0000" stop-color="#009959"/><stop offset="0.1250" stop-color="#009963"/><stop offset="0.1875" stop-color="#009969"/><stop offset="0.2188" stop-color="#00996d"/><stop offset="0.2500" stop-color="#1e9971"/><stop offset="0.3125" stop-color="#7a997c"/><stop offset="0.3281" stop-color="#969980"/><stop offset="0.3438" stop-color="#998270"/><stop offset="0.3750" stop-color="#995e56"/><stop offset="0.4375" stop-color="#993538"/><stop offset="0.5000" stop-color="#991f29"/><stop offset="0.6250" stop-color="#990818"/><stop offset="0.7500" stop-color="#99000f"/><stop offset="1.0000" stop-color="#990006"/></linearGradient><linearGradient id="r25" gradientUnits="userSpaceOnUse" x1="1249" y1="0" x2="1910" y2="0"><stop offset="0.0000" stop-color="#00995e"/><stop offset="0.1250" stop-color="#009969"/><stop offset="0.1875" stop-color="#009970"/><stop offset="0.2188" stop-color="#009974"/><stop offset="0.2344" stop-color="#0a9977"/><stop offset="0.2500" stop-color="#1d9979"/><stop offset="0.3125" stop-color="#7a9986"/><stop offset="0.3281" stop-color="#97998a"/><stop offset="0.3438" stop-color="#998177"/><stop offset="0.3750" stop-color="#995d5b"/><stop offset="0.4375" stop-color="#99343d"/><stop offset="0.5000" stop-color="#991e2c"/><stop offset="0.6250" stop-color="#99071a"/><stop offset="0.7500" stop-color="#990010"/><stop offset="1.0000" stop-color="#990007"/></linearGradient><linearGradient id="r26" gradientUnits="userSpaceOnUse" x1="1249" y1="0" x2="1910" y2="0"><stop offset="0.0000" stop-color="#009963"/><stop offset="0.1250" stop-color="#00996f"/><stop offset="0.1875" stop-color="#009977"/><stop offset="0.2188" stop-color="#00997c"/><stop offset="0.2344" stop-color="#09997e"/><stop offset="0.2500" stop-color="#1c9981"/><stop offset="0.3125" stop-color="#7b998f"/><stop offset="0.3281" stop-color="#989994"/><stop offset="0.3438" stop-color="#99807f"/><stop offset="0.3750" stop-color="#995b61"/><stop offset="0.4375" stop-color="#993341"/><stop offset="0.5000" stop-color="#991d2f"/><stop offset="0.6250" stop-color="#99061c"/><stop offset="0.7500" stop-color="#990012"/><stop offset="1.0000" stop-color="#990008"/></linearGradient><linearGradient id="r27" gradientUnits="userSpaceOnUse" x1="1249" y1="0" x2="1910" y2="0"><stop offset="0.0000" stop-color="#009968"/><stop offset="0.1250" stop-color="#009975"/><stop offset="0.1875" stop-color="#00997e"/><stop offset="0.2188" stop-color="#009983"/><stop offset="0.2344" stop-color="#089986"/><stop offset="0.2500" stop-color="#1c9989"/><stop offset="0.3125" stop-color="#7b9999"/><stop offset="0.3281" stop-color="#949499"/><stop offset="0.3438" stop-color="#997f87"/><stop offset="0.3750" stop-color="#995a68"/><stop offset="0.4375" stop-color="#993245"/><stop offset="0.5000" stop-color="#991d32"/><stop offset="0.6250" stop-color="#99061e"/><stop offset="0.7500" stop-color="#990014"/><stop offset="1.0000" stop-color="#990009"/></linearGradient><linearGradient id="r28" gradientUnits="userSpaceOnUse" x1="1249" y1="0" x2="1910" y2="0"><stop offset="0.0000" stop-color="#00996d"/><stop offset="0.1250" stop-color="#00997b"/><stop offset="0.1875" stop-color="#009985"/><stop offset="0.2188" stop-color="#00998b"/><stop offset="0.2344" stop-color="#07998e"/><stop offset="0.2500" stop-color="#1b9992"/><stop offset="0.3125" stop-color="#748f99"/><stop offset="0.3281" stop-color="#8c8b99"/><stop offset="0.3438" stop-color="#997e8f"/><stop offset="0.3750" stop-color="#99596e"/><stop offset="0.4375" stop-color="#993149"/><stop offset="0.5000" stop-color="#991c35"/><stop offset="0.6250" stop-color="#990520"/><stop offset="0.7500" stop-color="#990015"/><stop offset="1.0000" stop-color="#99000a"/></linearGradient><linearGradient id="r29" gradientUnits="userSpaceOnUse" x1="1249" y1="0" x2="1910" y2="0"><stop offset="0.0000" stop-color="#009972"/><stop offset="0.1250" stop-color="#009981"/><stop offset="0.1875" stop-color="#00998c"/><stop offset="0.2188" stop-color="#009993"/><stop offset="0.2344" stop-color="#069997"/><stop offset="0.2500" stop-color="#1a9799"/><stop offset="0.3125" stop-color="#6e8799"/><stop offset="0.3438" stop-color="#997c97"/><stop offset="0.3750" stop-color="#995874"/><stop offset="0.4375" stop-color="#99304d"/><stop offset="0.5000" stop-color="#991b38"/><stop offset="0.6250" stop-color="#990522"/><stop offset="0.7500" stop-color="#990017"/><stop offset="1.0000" stop-color="#99000b"/></linearGradient><linearGradient id="r30" gradientUnits="userSpaceOnUse" x1="1249" y1="0" x2="1910" y2="0"><stop offset="0.0000" stop-color="#009977"/><stop offset="0.1250" stop-color="#009988"/><stop offset="0.1875" stop-color="#009994"/><stop offset="0.2188" stop-color="#009799"/><stop offset="0.2344" stop-color="#059399"/><stop offset="0.2500" stop-color="#188f99"/><stop offset="0.3125" stop-color="#687f99"/><stop offset="0.3438" stop-color="#937699"/><stop offset="0.3750" stop-color="#99577a"/><stop offset="0.4375" stop-color="#992f51"/><stop offset="0.5000" stop-color="#991a3b"/><stop offset="0.6250" stop-color="#990424"/><stop offset="0.7500" stop-color="#990018"/><stop offset="1.0000" stop-color="#99000c"/></linearGradient><linearGradient id="r31" gradientUnits="userSpaceOnUse" x1="1249" y1="0" x2="1910" y2="0"><stop offset="0.0000" stop-color="#00997c"/><stop offset="0.1250" stop-color="#00998f"/><stop offset="0.1875" stop-color="#009699"/><stop offset="0.2188" stop-color="#008f99"/><stop offset="0.2344" stop-color="#038b99"/><stop offset="0.2500" stop-color="#168899"/><stop offset="0.3125" stop-color="#627899"/><stop offset="0.3438" stop-color="#8b6f99"/><stop offset="0.3594" stop-color="#996692"/><stop offset="0.3750" stop-color="#995681"/><stop offset="0.4375" stop-color="#992e56"/><stop offset="0.5000" stop-color="#99193f"/><stop offset="0.6250" stop-color="#990326"/><stop offset="0.7500" stop-color="#99001a"/><stop offset="1.0000" stop-color="#99000d"/></linearGradient><linearGradient id="r32" gradientUnits="userSpaceOnUse" x1="1249" y1="0" x2="1910" y2="0"><stop offset="0.0000" stop-color="#009982"/><stop offset="0.1250" stop-color="#009996"/><stop offset="0.1875" stop-color="#008f99"/><stop offset="0.2188" stop-color="#008899"/><stop offset="0.2344" stop-color="#028499"/><stop offset="0.2500" stop-color="#148199"/><stop offset="0.3125" stop-color="#5d7199"/><stop offset="0.3438" stop-color="#846999"/><stop offset="0.3594" stop-color="#996499"/><stop offset="0.3750" stop-color="#995587"/><stop offset="0.4375" stop-color="#992d5a"/><stop offset="0.5000" stop-color="#991942"/><stop offset="0.6250" stop-color="#990329"/><stop offset="0.7500" stop-color="#99001c"/><stop offset="1.0000" stop-color="#99000e"/></linearGradient><linearGradient id="r33" gradientUnits="userSpaceOnUse" x1="1249" y1="0" x2="1910" y2="0"><stop offset="0.0000" stop-color="#009987"/><stop offset="0.1250" stop-color="#009699"/><stop offset="0.1875" stop-color="#008899"/><stop offset="0.2188" stop-color="#008199"/><stop offset="0.2344" stop-color="#017e99"/><stop offset="0.2500" stop-color="#127a99"/><stop offset="0.3125" stop-color="#596b99"/><stop offset="0.3438" stop-color="#7e6399"/><stop offset="0.3594" stop-color="#925f99"/><stop offset="0.3750" stop-color="#99548e"/><stop offset="0.4375" stop-color="#992c5e"/><stop offset="0.5000" stop-color="#991845"/><stop offset="0.6250" stop-color="#99022b"/><stop offset="0.7500" stop-color="#99001d"/><stop offset="1.0000" stop-color="#99000f"/></linearGradient><linearGradient id="r34" gradientUnits="userSpaceOnUse" x1="1249" y1="0" x2="1910" y2="0"><stop offset="0.0000" stop-color="#00998d"/><stop offset="0.1250" stop-color="#008f99"/><stop offset="0.1875" stop-color="#008299"/><stop offset="0.2188" stop-color="#007b99"/><stop offset="0.2344" stop-color="#007899"/><stop offset="0.2500" stop-color="#107499"/><stop offset="0.3750" stop-color="#995294"/><stop offset="0.4375" stop-color="#992b63"/><stop offset="0.5000" stop-color="#991748"/><stop offset="0.6250" stop-color="#99012d"/><stop offset="0.7500" stop-color="#99001f"/><stop offset="1.0000" stop-color="#990010"/></linearGradient><linearGradient id="r35" gradientUnits="userSpaceOnUse" x1="1249" y1="0" x2="1910" y2="0"><stop offset="0.0000" stop-color="#009992"/><stop offset="0.1250" stop-color="#008999"/><stop offset="0.1875" stop-color="#007c99"/><stop offset="0.2188" stop-color="#007699"/><stop offset="0.2344" stop-color="#007299"/><stop offset="0.2500" stop-color="#0f6f99"/><stop offset="0.3750" stop-color="#975099"/><stop offset="0.4375" stop-color="#992a67"/><stop offset="0.5000" stop-color="#99164c"/><stop offset="0.6250" stop-color="#99012f"/><stop offset="0.7500" stop-color="#990020"/><stop offset="1.0000" stop-color="#990011"/></linearGradient><linearGradient id="r36" gradientUnits="userSpaceOnUse" x1="1249" y1="0" x2="1910" y2="0"><stop offset="0.0000" stop-color="#009998"/><stop offset="0.1250" stop-color="#008399"/><stop offset="0.1875" stop-color="#007799"/><stop offset="0.2188" stop-color="#007099"/><stop offset="0.2344" stop-color="#006d99"/><stop offset="0.2500" stop-color="#0e6999"/><stop offset="0.3750" stop-color="#914c99"/><stop offset="0.3906" stop-color="#994390"/><stop offset="0.4062" stop-color="#993982"/><stop offset="0.4375" stop-color="#99296b"/><stop offset="0.5000" stop-color="#99154f"/><stop offset="0.6250" stop-color="#990031"/><stop offset="0.7500" stop-color="#990022"/><stop offset="1.0000" stop-color="#990013"/></linearGradient><linearGradient id="r37" gradientUnits="userSpaceOnUse" x1="1249" y1="0" x2="1910" y2="0"><stop offset="0.0000" stop-color="#009499"/><stop offset="0.1250" stop-color="#007e99"/><stop offset="0.1875" stop-color="#007299"/><stop offset="0.2188" stop-color="#006b99"/><stop offset="0.2344" stop-color="#006899"/><stop offset="0.2500" stop-color="#0c6499"/><stop offset="0.3750" stop-color="#8b4799"/><stop offset="0.3906" stop-color="#994296"/><stop offset="0.4062" stop-color="#993887"/><stop offset="0.4375" stop-color="#992870"/><stop offset="0.5000" stop-color="#991452"/><stop offset="0.6250" stop-color="#990033"/><stop offset="0.7500" stop-color="#990024"/><stop offset="1.0000" stop-color="#990014"/></linearGradient><linearGradient id="r38" gradientUnits="userSpaceOnUse" x1="1249" y1="0" x2="1910" y2="0"><stop offset="0.0000" stop-color="#008f99"/><stop offset="0.1250" stop-color="#007999"/><stop offset="0.1875" stop-color="#006d99"/><stop offset="0.2188" stop-color="#006699"/><stop offset="0.2500" stop-color="#0b6099"/><stop offset="0.3750" stop-color="#854399"/><stop offset="0.3906" stop-color="#964099"/><stop offset="0.4062" stop-color="#99378d"/><stop offset="0.4375" stop-color="#992774"/><stop offset="0.5000" stop-color="#991356"/><stop offset="0.6250" stop-color="#990036"/><stop offset="0.7500" stop-color="#990025"/><stop offset="1.0000" stop-color="#990015"/></linearGradient><linearGradient id="r39" gradientUnits="userSpaceOnUse" x1="1249" y1="0" x2="1910" y2="0"><stop offset="0.0000" stop-color="#008a99"/><stop offset="0.1250" stop-color="#007499"/><stop offset="0.1875" stop-color="#006899"/><stop offset="0.2188" stop-color="#006299"/><stop offset="0.2500" stop-color="#0a5c99"/><stop offset="0.3750" stop-color="#804099"/><stop offset="0.4062" stop-color="#993692"/><stop offset="0.4375" stop-color="#992679"/><stop offset="0.5000" stop-color="#991359"/><stop offset="0.6250" stop-color="#990038"/><stop offset="0.7500" stop-color="#990027"/><stop offset="1.0000" stop-color="#990016"/></linearGradient><linearGradient id="r40" gradientUnits="userSpaceOnUse" x1="1249" y1="0" x2="1910" y2="0"><stop offset="0.0000" stop-color="#008599"/><stop offset="0.1250" stop-color="#007099"/><stop offset="0.1875" stop-color="#006499"/><stop offset="0.2188" stop-color="#005e99"/><stop offset="0.2500" stop-color="#095799"/><stop offset="0.3750" stop-color="#7b3c99"/><stop offset="0.4062" stop-color="#993598"/><stop offset="0.4375" stop-color="#99257e"/><stop offset="0.5000" stop-color="#99125c"/><stop offset="0.6250" stop-color="#99003a"/><stop offset="0.7500" stop-color="#990029"/><stop offset="1.0000" stop-color="#990017"/></linearGradient><linearGradient id="r41" gradientUnits="userSpaceOnUse" x1="1249" y1="0" x2="1910" y2="0"><stop offset="0.0000" stop-color="#008099"/><stop offset="0.2500" stop-color="#085499"/><stop offset="0.3750" stop-color="#773999"/><stop offset="0.4062" stop-color="#953299"/><stop offset="0.4375" stop-color="#992482"/><stop offset="0.5000" stop-color="#991160"/><stop offset="0.6250" stop-color="#99003c"/><stop offset="0.7500" stop-color="#99002a"/><stop offset="1.0000" stop-color="#990018"/></linearGradient><linearGradient id="r42" gradientUnits="userSpaceOnUse" x1="1249" y1="0" x2="1910" y2="0"><stop offset="0.0000" stop-color="#007c99"/><stop offset="0.2500" stop-color="#075099"/><stop offset="0.3750" stop-color="#723699"/><stop offset="0.4062" stop-color="#8f2f99"/><stop offset="0.4375" stop-color="#992387"/><stop offset="0.5000" stop-color="#991063"/><stop offset="0.6250" stop-color="#99003f"/><stop offset="0.7500" stop-color="#99002c"/><stop offset="1.0000" stop-color="#990019"/></linearGradient><linearGradient id="r43" gradientUnits="userSpaceOnUse" x1="1249" y1="0" x2="1910" y2="0"><stop offset="0.0000" stop-color="#007899"/><stop offset="0.2500" stop-color="#064d99"/><stop offset="0.3750" stop-color="#6e3399"/><stop offset="0.4062" stop-color="#8a2c99"/><stop offset="0.4219" stop-color="#992999"/><stop offset="0.4375" stop-color="#99228c"/><stop offset="0.5000" stop-color="#990f67"/><stop offset="0.6250" stop-color="#990041"/><stop offset="0.7500" stop-color="#99002e"/><stop offset="1.0000" stop-color="#99001a"/></linearGradient><linearGradient id="r44" gradientUnits="userSpaceOnUse" x1="1249" y1="0" x2="1910" y2="0"><stop offset="0.0000" stop-color="#007499"/><stop offset="0.2500" stop-color="#054999"/><stop offset="0.3750" stop-color="#6b3099"/><stop offset="0.4062" stop-color="#862a99"/><stop offset="0.4375" stop-color="#992191"/><stop offset="0.5000" stop-color="#990e6a"/><stop offset="0.6250" stop-color="#990043"/><stop offset="0.7500" stop-color="#99002f"/><stop offset="1.0000" stop-color="#99001b"/></linearGradient><linearGradient id="r45" gradientUnits="userSpaceOnUse" x1="1249" y1="0" x2="1910" y2="0"><stop offset="0.0000" stop-color="#007099"/><stop offset="0.2500" stop-color="#044699"/><stop offset="0.3750" stop-color="#672e99"/><stop offset="0.4375" stop-color="#992095"/><stop offset="0.5000" stop-color="#990d6e"/><stop offset="0.6250" stop-color="#990045"/><stop offset="0.7500" stop-color="#990031"/><stop offset="1.0000" stop-color="#99001c"/></linearGradient><linearGradient id="r46" gradientUnits="userSpaceOnUse" x1="1249" y1="0" x2="1910" y2="0"><stop offset="0.0000" stop-color="#006d99"/><stop offset="0.2500" stop-color="#034399"/><stop offset="0.3750" stop-color="#642b99"/><stop offset="0.4375" stop-color="#981e99"/><stop offset="0.5000" stop-color="#990c71"/><stop offset="0.6250" stop-color="#990048"/><stop offset="0.7500" stop-color="#990033"/><stop offset="1.0000" stop-color="#99001d"/></linearGradient><linearGradient id="r47" gradientUnits="userSpaceOnUse" x1="1249" y1="0" x2="1910" y2="0"><stop offset="0.0000" stop-color="#006999"/><stop offset="0.2500" stop-color="#034199"/><stop offset="0.3750" stop-color="#602999"/><stop offset="0.4375" stop-color="#931c99"/><stop offset="0.5000" stop-color="#990b75"/><stop offset="0.6250" stop-color="#99004a"/><stop offset="0.7500" stop-color="#990034"/><stop offset="1.0000" stop-color="#99001f"/></linearGradient><linearGradient id="r48" gradientUnits="userSpaceOnUse" x1="1249" y1="0" x2="1910" y2="0"><stop offset="0.0000" stop-color="#006699"/><stop offset="0.2500" stop-color="#023e99"/><stop offset="0.3750" stop-color="#5d2799"/><stop offset="0.4375" stop-color="#8e1a99"/><stop offset="0.4688" stop-color="#99128b"/><stop offset="0.5000" stop-color="#990a78"/><stop offset="0.6250" stop-color="#99004c"/><stop offset="0.7500" stop-color="#990036"/><stop offset="1.0000" stop-color="#990020"/></linearGradient><linearGradient id="r49" gradientUnits="userSpaceOnUse" x1="1249" y1="0" x2="1910" y2="0"><stop offset="0.0000" stop-color="#006399"/><stop offset="0.2500" stop-color="#013b99"/><stop offset="0.3750" stop-color="#5a2599"/><stop offset="0.4375" stop-color="#8a1999"/><stop offset="0.4688" stop-color="#99118f"/><stop offset="0.5000" stop-color="#990a7c"/><stop offset="0.6250" stop-color="#99004f"/><stop offset="0.7500" stop-color="#990038"/><stop offset="1.0000" stop-color="#990021"/></linearGradient><linearGradient id="r50" gradientUnits="userSpaceOnUse" x1="1249" y1="0" x2="1910" y2="0"><stop offset="0.0000" stop-color="#006099"/><stop offset="0.2500" stop-color="#013999"/><stop offset="0.3750" stop-color="#582399"/><stop offset="0.4375" stop-color="#861799"/><stop offset="0.4688" stop-color="#991094"/><stop offset="0.5000" stop-color="#990980"/><stop offset="0.6250" stop-color="#990051"/><stop offset="0.7500" stop-color="#990039"/><stop offset="1.0000" stop-color="#990022"/></linearGradient><linearGradient id="r51" gradientUnits="userSpaceOnUse" x1="1249" y1="0" x2="1910" y2="0"><stop offset="0.0000" stop-color="#005d99"/><stop offset="0.2500" stop-color="#003799"/><stop offset="0.3750" stop-color="#552199"/><stop offset="0.4375" stop-color="#821599"/><stop offset="0.4688" stop-color="#990f98"/><stop offset="0.5000" stop-color="#990883"/><stop offset="0.6250" stop-color="#990053"/><stop offset="0.7500" stop-color="#99003b"/><stop offset="1.0000" stop-color="#990023"/></linearGradient><linearGradient id="r52" gradientUnits="userSpaceOnUse" x1="1249" y1="0" x2="1910" y2="0"><stop offset="0.0000" stop-color="#005a99"/><stop offset="0.2500" stop-color="#003599"/><stop offset="0.3750" stop-color="#521f99"/><stop offset="0.4375" stop-color="#7f1499"/><stop offset="0.4688" stop-color="#960e99"/><stop offset="0.5000" stop-color="#990787"/><stop offset="0.6250" stop-color="#990056"/><stop offset="0.7500" stop-color="#99003d"/><stop offset="1.0000" stop-color="#990024"/></linearGradient><linearGradient id="r53" gradientUnits="userSpaceOnUse" x1="1249" y1="0" x2="1910" y2="0"><stop offset="0.0000" stop-color="#005799"/><stop offset="0.2500" stop-color="#003299"/><stop offset="0.3750" stop-color="#501d99"/><stop offset="0.4375" stop-color="#7b1299"/><stop offset="0.4688" stop-color="#920c99"/><stop offset="0.5000" stop-color="#99068b"/><stop offset="0.6250" stop-color="#990058"/><stop offset="0.7500" stop-color="#99003f"/><stop offset="1.0000" stop-color="#990025"/></linearGradient><linearGradient id="r54" gradientUnits="userSpaceOnUse" x1="1249" y1="0" x2="1910" y2="0"><stop offset="0.0000" stop-color="#005599"/><stop offset="0.2500" stop-color="#003099"/><stop offset="0.3750" stop-color="#4e1c99"/><stop offset="0.4375" stop-color="#781199"/><stop offset="0.4688" stop-color="#8e0b99"/><stop offset="0.5000" stop-color="#99058f"/><stop offset="0.6250" stop-color="#99005a"/><stop offset="0.7500" stop-color="#990040"/><stop offset="1.0000" stop-color="#990026"/></linearGradient><linearGradient id="r55" gradientUnits="userSpaceOnUse" x1="1249" y1="0" x2="1910" y2="0"><stop offset="0.0000" stop-color="#005299"/><stop offset="0.2500" stop-color="#002e99"/><stop offset="0.5000" stop-color="#990492"/><stop offset="0.6250" stop-color="#99005d"/><stop offset="0.7500" stop-color="#990042"/><stop offset="1.0000" stop-color="#990027"/></linearGradient><linearGradient id="r56" gradientUnits="userSpaceOnUse" x1="1249" y1="0" x2="1910" y2="0"><stop offset="0.0000" stop-color="#005099"/><stop offset="0.2500" stop-color="#002d99"/><stop offset="0.5000" stop-color="#990396"/><stop offset="0.6250" stop-color="#99005f"/><stop offset="0.7500" stop-color="#990044"/><stop offset="1.0000" stop-color="#990029"/></linearGradient><linearGradient id="r57" gradientUnits="userSpaceOnUse" x1="1249" y1="0" x2="1910" y2="0"><stop offset="0.0000" stop-color="#004e99"/><stop offset="0.2500" stop-color="#002b99"/><stop offset="0.5000" stop-color="#980299"/><stop offset="0.6250" stop-color="#990061"/><stop offset="0.7500" stop-color="#990045"/><stop offset="1.0000" stop-color="#99002a"/></linearGradient><linearGradient id="r58" gradientUnits="userSpaceOnUse" x1="1249" y1="0" x2="1910" y2="0"><stop offset="0.0000" stop-color="#004b99"/><stop offset="0.2500" stop-color="#002999"/><stop offset="0.5000" stop-color="#940199"/><stop offset="0.6250" stop-color="#990064"/><stop offset="0.7500" stop-color="#990047"/><stop offset="1.0000" stop-color="#99002b"/></linearGradient><linearGradient id="r59" gradientUnits="userSpaceOnUse" x1="1249" y1="0" x2="1910" y2="0"><stop offset="0.0000" stop-color="#004999"/><stop offset="0.2500" stop-color="#002799"/><stop offset="0.5000" stop-color="#910099"/><stop offset="0.5312" stop-color="#99008e"/><stop offset="0.5625" stop-color="#99007e"/><stop offset="0.6250" stop-color="#990066"/><stop offset="0.7500" stop-color="#990049"/><stop offset="1.0000" stop-color="#99002c"/></linearGradient><linearGradient id="r60" gradientUnits="userSpaceOnUse" x1="1249" y1="0" x2="1910" y2="0"><stop offset="0.0000" stop-color="#004799"/><stop offset="0.2500" stop-color="#002699"/><stop offset="0.5000" stop-color="#8d0099"/><stop offset="0.5312" stop-color="#990091"/><stop offset="0.5625" stop-color="#990081"/><stop offset="0.6250" stop-color="#990069"/><stop offset="0.7500" stop-color="#99004b"/><stop offset="1.0000" stop-color="#99002d"/></linearGradient><linearGradient id="r61" gradientUnits="userSpaceOnUse" x1="1249" y1="0" x2="1910" y2="0"><stop offset="0.0000" stop-color="#004599"/><stop offset="0.2500" stop-color="#002499"/><stop offset="0.5000" stop-color="#8a0099"/><stop offset="0.5312" stop-color="#990095"/><stop offset="0.5625" stop-color="#990084"/><stop offset="0.6250" stop-color="#99006b"/><stop offset="0.7500" stop-color="#99004d"/><stop offset="1.0000" stop-color="#99002e"/></linearGradient><linearGradient id="r62" gradientUnits="userSpaceOnUse" x1="1249" y1="0" x2="1910" y2="0"><stop offset="0.0000" stop-color="#004399"/><stop offset="0.2500" stop-color="#002399"/><stop offset="0.5000" stop-color="#870099"/><stop offset="0.5312" stop-color="#990098"/><stop offset="0.5625" stop-color="#990087"/><stop offset="0.6250" stop-color="#99006e"/><stop offset="0.7500" stop-color="#99004e"/><stop offset="1.0000" stop-color="#99002f"/></linearGradient><linearGradient id="r63" gradientUnits="userSpaceOnUse" x1="1249" y1="0" x2="1910" y2="0"><stop offset="0.0000" stop-color="#004199"/><stop offset="0.2500" stop-color="#002199"/><stop offset="0.3750" stop-color="#3d1099"/><stop offset="0.5000" stop-color="#840099"/><stop offset="0.5312" stop-color="#960099"/><stop offset="0.5625" stop-color="#99008a"/><stop offset="0.6250" stop-color="#990070"/><stop offset="0.7500" stop-color="#990050"/><stop offset="1.0000" stop-color="#990031"/></linearGradient><linearGradient id="r64" gradientUnits="userSpaceOnUse" x1="1249" y1="0" x2="1910" y2="0"><stop offset="0.0000" stop-color="#004099"/><stop offset="0.2500" stop-color="#002099"/><stop offset="0.3750" stop-color="#3b0e99"/><stop offset="0.5000" stop-color="#810099"/><stop offset="0.5312" stop-color="#930099"/><stop offset="0.5625" stop-color="#99008d"/><stop offset="0.6250" stop-color="#990073"/><stop offset="0.7500" stop-color="#990052"/><stop offset="1.0000" stop-color="#990032"/></linearGradient><linearGradient id="r65" gradientUnits="userSpaceOnUse" x1="1249" y1="0" x2="1910" y2="0"><stop offset="0.0000" stop-color="#003e99"/><stop offset="0.2500" stop-color="#001f99"/><stop offset="0.3750" stop-color="#390d99"/><stop offset="0.5000" stop-color="#7e0099"/><stop offset="0.5312" stop-color="#900099"/><stop offset="0.5625" stop-color="#990090"/><stop offset="0.6250" stop-color="#990075"/><stop offset="0.7500" stop-color="#990054"/><stop offset="1.0000" stop-color="#990033"/></linearGradient><linearGradient id="r66" gradientUnits="userSpaceOnUse" x1="1249" y1="0" x2="1910" y2="0"><stop offset="0.0000" stop-color="#003c99"/><stop offset="0.2500" stop-color="#001d99"/><stop offset="0.3750" stop-color="#380c99"/><stop offset="0.5000" stop-color="#7b0099"/><stop offset="0.5625" stop-color="#990094"/><stop offset="0.6250" stop-color="#990078"/><stop offset="0.7500" stop-color="#990056"/><stop offset="1.0000" stop-color="#990034"/></linearGradient><linearGradient id="r67" gradientUnits="userSpaceOnUse" x1="1249" y1="0" x2="1910" y2="0"><stop offset="0.0000" stop-color="#003b99"/><stop offset="0.2500" stop-color="#001c99"/><stop offset="0.3750" stop-color="#370b99"/><stop offset="0.5000" stop-color="#790099"/><stop offset="0.5625" stop-color="#990097"/><stop offset="0.6250" stop-color="#99007a"/><stop offset="0.7500" stop-color="#990057"/><stop offset="1.0000" stop-color="#990035"/></linearGradient><linearGradient id="r68" gradientUnits="userSpaceOnUse" x1="1249" y1="0" x2="1910" y2="0"><stop offset="0.0000" stop-color="#003999"/><stop offset="0.2500" stop-color="#001b99"/><stop offset="0.3750" stop-color="#350a99"/><stop offset="0.5000" stop-color="#760099"/><stop offset="0.5625" stop-color="#980099"/><stop offset="0.6250" stop-color="#99007d"/><stop offset="0.7500" stop-color="#990059"/><stop offset="1.0000" stop-color="#990036"/></linearGradient><linearGradient id="r69" gradientUnits="userSpaceOnUse" x1="1249" y1="0" x2="1910" y2="0"><stop offset="0.0000" stop-color="#003799"/><stop offset="0.2500" stop-color="#001a99"/><stop offset="0.3125" stop-color="#161299"/><stop offset="0.3750" stop-color="#340999"/><stop offset="0.5000" stop-color="#740099"/><stop offset="0.5625" stop-color="#950099"/><stop offset="0.6250" stop-color="#99007f"/><stop offset="0.7500" stop-color="#99005b"/><stop offset="1.0000" stop-color="#990037"/></linearGradient><linearGradient id="r70" gradientUnits="userSpaceOnUse" x1="1249" y1="0" x2="1910" y2="0"><stop offset="0.0000" stop-color="#003699"/><stop offset="0.2500" stop-color="#001999"/><stop offset="0.3125" stop-color="#151199"/><stop offset="0.3750" stop-color="#330999"/><stop offset="0.5000" stop-color="#710099"/><stop offset="0.5625" stop-color="#920099"/><stop offset="0.6250" stop-color="#990082"/><stop offset="0.7500" stop-color="#99005d"/><stop offset="1.0000" stop-color="#990039"/></linearGradient><linearGradient id="r71" gradientUnits="userSpaceOnUse" x1="1249" y1="0" x2="1910" y2="0"><stop offset="0.0000" stop-color="#003599"/><stop offset="0.2500" stop-color="#001899"/><stop offset="0.3125" stop-color="#141099"/><stop offset="0.3750" stop-color="#310899"/><stop offset="0.5000" stop-color="#6f0099"/><stop offset="0.5625" stop-color="#8f0099"/><stop offset="0.6250" stop-color="#990084"/><stop offset="0.7500" stop-color="#99005f"/><stop offset="1.0000" stop-color="#99003a"/></linearGradient><linearGradient id="r72" gradientUnits="userSpaceOnUse" x1="1249" y1="0" x2="1910" y2="0"><stop offset="0.0000" stop-color="#003399"/><stop offset="0.2500" stop-color="#001799"/><stop offset="0.3125" stop-color="#130f99"/><stop offset="0.3750" stop-color="#300799"/><stop offset="0.5000" stop-color="#6d0099"/><stop offset="0.5625" stop-color="#8c0099"/><stop offset="0.5938" stop-color="#990095"/><stop offset="0.6250" stop-color="#990087"/><stop offset="0.7500" stop-color="#990061"/><stop offset="1.0000" stop-color="#99003b"/></linearGradient><linearGradient id="r73" gradientUnits="userSpaceOnUse" x1="1249" y1="0" x2="1910" y2="0"><stop offset="0.0000" stop-color="#003299"/><stop offset="0.2500" stop-color="#001699"/><stop offset="0.3125" stop-color="#130e99"/><stop offset="0.3750" stop-color="#2f0699"/><stop offset="0.5000" stop-color="#6b0099"/><stop offset="0.5625" stop-color="#8a0099"/><stop offset="0.5938" stop-color="#990098"/><stop offset="0.6250" stop-color="#99008a"/><stop offset="0.7500" stop-color="#990062"/><stop offset="1.0000" stop-color="#99003c"/></linearGradient><linearGradient id="r74" gradientUnits="userSpaceOnUse" x1="1249" y1="0" x2="1910" y2="0"><stop offset="0.0000" stop-color="#003099"/><stop offset="0.2500" stop-color="#001599"/><stop offset="0.3125" stop-color="#120d99"/><stop offset="0.3750" stop-color="#2e0599"/><stop offset="0.5000" stop-color="#680099"/><stop offset="0.5625" stop-color="#870099"/><stop offset="0.5938" stop-color="#970099"/><stop offset="0.6250" stop-color="#99008c"/><stop offset="0.7500" stop-color="#990064"/><stop offset="1.0000" stop-color="#99003d"/></linearGradient><linearGradient id="r75" gradientUnits="userSpaceOnUse" x1="1249" y1="0" x2="1910" y2="0"><stop offset="0.0000" stop-color="#002f99"/><stop offset="0.2500" stop-color="#001499"/><stop offset="0.3125" stop-color="#110c99"/><stop offset="0.3750" stop-color="#2d0499"/><stop offset="0.5000" stop-color="#660099"/><stop offset="0.5625" stop-color="#850099"/><stop offset="0.6250" stop-color="#99008f"/><stop offset="0.7500" stop-color="#990066"/><stop offset="1.0000" stop-color="#99003e"/></linearGradient><linearGradient id="r76" gradientUnits="userSpaceOnUse" x1="1249" y1="0" x2="1910" y2="0"><stop offset="0.0000" stop-color="#002e99"/><stop offset="0.2500" stop-color="#001399"/><stop offset="0.3125" stop-color="#110b99"/><stop offset="0.3750" stop-color="#2c0499"/><stop offset="0.5000" stop-color="#640099"/><stop offset="0.6250" stop-color="#990092"/><stop offset="0.7500" stop-color="#990068"/><stop offset="1.0000" stop-color="#990040"/></linearGradient><linearGradient id="r77" gradientUnits="userSpaceOnUse" x1="1249" y1="0" x2="1910" y2="0"><stop offset="0.0000" stop-color="#002d99"/><stop offset="0.2500" stop-color="#001299"/><stop offset="0.3125" stop-color="#100a99"/><stop offset="0.3750" stop-color="#2b0399"/><stop offset="0.5000" stop-color="#630099"/><stop offset="0.6250" stop-color="#990094"/><stop offset="0.7500" stop-color="#99006a"/><stop offset="1.0000" stop-color="#990041"/></linearGradient><linearGradient id="r78" gradientUnits="userSpaceOnUse" x1="1249" y1="0" x2="1910" y2="0"><stop offset="0.0000" stop-color="#002b99"/><stop offset="0.2500" stop-color="#001199"/><stop offset="0.3125" stop-color="#100a99"/><stop offset="0.3750" stop-color="#2a0299"/><stop offset="0.5000" stop-color="#610099"/><stop offset="0.6250" stop-color="#990097"/><stop offset="0.7500" stop-color="#99006c"/><stop offset="1.0000" stop-color="#990042"/></linearGradient><linearGradient id="r79" gradientUnits="userSpaceOnUse" x1="1249" y1="0" x2="1910" y2="0"><stop offset="0.0000" stop-color="#002a99"/><stop offset="0.2500" stop-color="#001099"/><stop offset="0.3125" stop-color="#0f0999"/><stop offset="0.3750" stop-color="#290299"/><stop offset="0.5000" stop-color="#5f0099"/><stop offset="0.6250" stop-color="#980099"/><stop offset="0.7500" stop-color="#99006e"/><stop offset="1.0000" stop-color="#990043"/></linearGradient><linearGradient id="r80" gradientUnits="userSpaceOnUse" x1="1249" y1="0" x2="1910" y2="0"><stop offset="0.0000" stop-color="#002999"/><stop offset="0.2500" stop-color="#000f99"/><stop offset="0.3125" stop-color="#0e0899"/><stop offset="0.3750" stop-color="#280199"/><stop offset="0.5000" stop-color="#5d0099"/><stop offset="0.6250" stop-color="#960099"/><stop offset="0.7500" stop-color="#990070"/><stop offset="1.0000" stop-color="#990044"/></linearGradient><linearGradient id="r81" gradientUnits="userSpaceOnUse" x1="1249" y1="0" x2="1910" y2="0"><stop offset="0.0000" stop-color="#002899"/><stop offset="0.2500" stop-color="#000e99"/><stop offset="0.3125" stop-color="#0e0799"/><stop offset="0.3750" stop-color="#270099"/><stop offset="0.5000" stop-color="#5b0099"/><stop offset="0.6250" stop-color="#930099"/><stop offset="0.7500" stop-color="#990072"/><stop offset="1.0000" stop-color="#990046"/></linearGradient><linearGradient id="r82" gradientUnits="userSpaceOnUse" x1="1249" y1="0" x2="1910" y2="0"><stop offset="0.0000" stop-color="#002799"/><stop offset="0.2500" stop-color="#000d99"/><stop offset="0.3125" stop-color="#0d0799"/><stop offset="0.3750" stop-color="#260099"/><stop offset="0.5000" stop-color="#5a0099"/><stop offset="0.6250" stop-color="#910099"/><stop offset="0.6875" stop-color="#990087"/><stop offset="0.7500" stop-color="#990073"/><stop offset="1.0000" stop-color="#990047"/></linearGradient><linearGradient id="r83" gradientUnits="userSpaceOnUse" x1="1249" y1="0" x2="1910" y2="0"><stop offset="0.0000" stop-color="#002699"/><stop offset="0.2500" stop-color="#000d99"/><stop offset="0.3125" stop-color="#0d0699"/><stop offset="0.3750" stop-color="#250099"/><stop offset="0.5000" stop-color="#580099"/><stop offset="0.6250" stop-color="#8e0099"/><stop offset="0.6875" stop-color="#990089"/><stop offset="0.7500" stop-color="#990075"/><stop offset="1.0000" stop-color="#990048"/></linearGradient><linearGradient id="r84" gradientUnits="userSpaceOnUse" x1="1249" y1="0" x2="1910" y2="0"><stop offset="0.0000" stop-color="#002599"/><stop offset="0.2500" stop-color="#000c99"/><stop offset="0.3125" stop-color="#0c0599"/><stop offset="0.3750" stop-color="#240099"/><stop offset="0.5000" stop-color="#570099"/><stop offset="0.6250" stop-color="#8c0099"/><stop offset="0.6562" stop-color="#990098"/><stop offset="0.6875" stop-color="#99008c"/><stop offset="0.7500" stop-color="#990077"/><stop offset="1.0000" stop-color="#990049"/></linearGradient><linearGradient id="r85" gradientUnits="userSpaceOnUse" x1="1249" y1="0" x2="1910" y2="0"><stop offset="0.0000" stop-color="#002499"/><stop offset="0.2500" stop-color="#000b99"/><stop offset="0.3125" stop-color="#0c0599"/><stop offset="0.3750" stop-color="#240099"/><stop offset="0.5000" stop-color="#550099"/><stop offset="0.6250" stop-color="#8a0099"/><stop offset="0.6875" stop-color="#99008e"/><stop offset="0.7500" stop-color="#990079"/><stop offset="1.0000" stop-color="#99004a"/></linearGradient><linearGradient id="r86" gradientUnits="userSpaceOnUse" x1="1249" y1="0" x2="1910" y2="0"><stop offset="0.0000" stop-color="#002399"/><stop offset="0.2500" stop-color="#000a99"/><stop offset="0.3125" stop-color="#0b0499"/><stop offset="0.3750" stop-color="#230099"/><stop offset="0.5000" stop-color="#540099"/><stop offset="0.6250" stop-color="#870099"/><stop offset="0.6875" stop-color="#990090"/><stop offset="0.7500" stop-color="#99007b"/><stop offset="1.0000" stop-color="#99004c"/></linearGradient><linearGradient id="r87" gradientUnits="userSpaceOnUse" x1="1249" y1="0" x2="1910" y2="0"><stop offset="0.0000" stop-color="#002299"/><stop offset="0.2500" stop-color="#000a99"/><stop offset="0.3125" stop-color="#0b0399"/><stop offset="0.3750" stop-color="#220099"/><stop offset="0.5000" stop-color="#520099"/><stop offset="0.6250" stop-color="#850099"/><stop offset="0.6875" stop-color="#990093"/><stop offset="0.7500" stop-color="#99007d"/><stop offset="1.0000" stop-color="#99004d"/></linearGradient><linearGradient id="r88" gradientUnits="userSpaceOnUse" x1="1249" y1="0" x2="1910" y2="0"><stop offset="0.0000" stop-color="#002199"/><stop offset="0.2500" stop-color="#000999"/><stop offset="0.3125" stop-color="#0a0399"/><stop offset="0.3750" stop-color="#210099"/><stop offset="0.5000" stop-color="#510099"/><stop offset="0.6250" stop-color="#830099"/><stop offset="0.6875" stop-color="#990095"/><stop offset="0.7500" stop-color="#99007f"/><stop offset="1.0000" stop-color="#99004e"/></linearGradient><linearGradient id="r89" gradientUnits="userSpaceOnUse" x1="1249" y1="0" x2="1910" y2="0"><stop offset="0.0000" stop-color="#002099"/><stop offset="0.2500" stop-color="#000899"/><stop offset="0.3125" stop-color="#0a0299"/><stop offset="0.3750" stop-color="#210099"/><stop offset="0.5000" stop-color="#500099"/><stop offset="0.6250" stop-color="#810099"/><stop offset="0.6875" stop-color="#990097"/><stop offset="0.7500" stop-color="#990081"/><stop offset="1.0000" stop-color="#99004f"/></linearGradient><linearGradient id="r90" gradientUnits="userSpaceOnUse" x1="1249" y1="0" x2="1910" y2="0"><stop offset="0.0000" stop-color="#001f99"/><stop offset="0.2500" stop-color="#000899"/><stop offset="0.3125" stop-color="#090299"/><stop offset="0.3750" stop-color="#200099"/><stop offset="0.5000" stop-color="#4e0099"/><stop offset="0.6250" stop-color="#7f0099"/><stop offset="0.6875" stop-color="#980099"/><stop offset="0.7500" stop-color="#990083"/><stop offset="1.0000" stop-color="#990051"/></linearGradient><linearGradient id="r91" gradientUnits="userSpaceOnUse" x1="1249" y1="0" x2="1910" y2="0"><stop offset="0.0000" stop-color="#001e99"/><stop offset="0.2500" stop-color="#000799"/><stop offset="0.3125" stop-color="#090199"/><stop offset="0.3750" stop-color="#1f0099"/><stop offset="0.5000" stop-color="#4d0099"/><stop offset="0.6250" stop-color="#7d0099"/><stop offset="0.6875" stop-color="#960099"/><stop offset="0.7500" stop-color="#990085"/><stop offset="1.0000" stop-color="#990052"/></linearGradient><linearGradient id="r92" gradientUnits="userSpaceOnUse" x1="1249" y1="0" x2="1910" y2="0"><stop offset="0.0000" stop-color="#001d99"/><stop offset="0.2500" stop-color="#000699"/><stop offset="0.3125" stop-color="#090099"/><stop offset="0.3750" stop-color="#1e0099"/><stop offset="0.5000" stop-color="#4c0099"/><stop offset="0.6250" stop-color="#7b0099"/><stop offset="0.6875" stop-color="#940099"/><stop offset="0.7500" stop-color="#990087"/><stop offset="1.0000" stop-color="#990053"/></linearGradient><linearGradient id="r93" gradientUnits="userSpaceOnUse" x1="1249" y1="0" x2="1910" y2="0"><stop offset="0.0000" stop-color="#001d99"/><stop offset="0.2500" stop-color="#000699"/><stop offset="0.3125" stop-color="#080099"/><stop offset="0.3750" stop-color="#1e0099"/><stop offset="0.5000" stop-color="#4a0099"/><stop offset="0.6250" stop-color="#790099"/><stop offset="0.6875" stop-color="#920099"/><stop offset="0.7500" stop-color="#990089"/><stop offset="1.0000" stop-color="#990054"/></linearGradient><linearGradient id="r94" gradientUnits="userSpaceOnUse" x1="1249" y1="0" x2="1910" y2="0"><stop offset="0.0000" stop-color="#001c99"/><stop offset="0.2500" stop-color="#000599"/><stop offset="0.3125" stop-color="#080099"/><stop offset="0.3750" stop-color="#1d0099"/><stop offset="0.5000" stop-color="#490099"/><stop offset="0.6250" stop-color="#780099"/><stop offset="0.6875" stop-color="#900099"/><stop offset="0.7500" stop-color="#99008b"/><stop offset="1.0000" stop-color="#990056"/></linearGradient><linearGradient id="r95" gradientUnits="userSpaceOnUse" x1="1249" y1="0" x2="1910" y2="0"><stop offset="0.0000" stop-color="#001b99"/><stop offset="0.2500" stop-color="#000599"/><stop offset="0.3125" stop-color="#070099"/><stop offset="0.3750" stop-color="#1c0099"/><stop offset="0.5000" stop-color="#480099"/><stop offset="0.6250" stop-color="#760099"/><stop offset="0.6875" stop-color="#8d0099"/><stop offset="0.7500" stop-color="#99008d"/><stop offset="1.0000" stop-color="#990057"/></linearGradient><linearGradient id="r96" gradientUnits="userSpaceOnUse" x1="1249" y1="0" x2="1910" y2="0"><stop offset="0.0000" stop-color="#001a99"/><stop offset="0.2500" stop-color="#000499"/><stop offset="0.3125" stop-color="#070099"/><stop offset="0.3750" stop-color="#1c0099"/><stop offset="0.5000" stop-color="#470099"/><stop offset="0.6250" stop-color="#740099"/><stop offset="0.6875" stop-color="#8b0099"/><stop offset="0.7500" stop-color="#99008f"/><stop offset="1.0000" stop-color="#990058"/></linearGradient><linearGradient id="r97" gradientUnits="userSpaceOnUse" x1="1249" y1="0" x2="1910" y2="0"><stop offset="0.0000" stop-color="#001999"/><stop offset="0.2500" stop-color="#000499"/><stop offset="0.3125" stop-color="#070099"/><stop offset="0.3750" stop-color="#1b0099"/><stop offset="0.5000" stop-color="#460099"/><stop offset="0.7500" stop-color="#990091"/><stop offset="1.0000" stop-color="#990059"/></linearGradient><linearGradient id="r98" gradientUnits="userSpaceOnUse" x1="1249" y1="0" x2="1910" y2="0"><stop offset="0.0000" stop-color="#001999"/><stop offset="0.2500" stop-color="#000399"/><stop offset="0.3125" stop-color="#060099"/><stop offset="0.3750" stop-color="#1b0099"/><stop offset="0.5000" stop-color="#450099"/><stop offset="0.7500" stop-color="#990093"/><stop offset="0.8750" stop-color="#990071"/><stop offset="1.0000" stop-color="#99005b"/></linearGradient><linearGradient id="r99" gradientUnits="userSpaceOnUse" x1="1249" y1="0" x2="1910" y2="0"><stop offset="0.0000" stop-color="#001899"/><stop offset="0.2500" stop-color="#000299"/><stop offset="0.3125" stop-color="#060099"/><stop offset="0.3750" stop-color="#1a0099"/><stop offset="0.5000" stop-color="#440099"/><stop offset="0.7500" stop-color="#990095"/><stop offset="0.8750" stop-color="#990072"/><stop offset="1.0000" stop-color="#99005c"/></linearGradient><linearGradient id="r100" gradientUnits="userSpaceOnUse" x1="1249" y1="0" x2="1910" y2="0"><stop offset="0.0000" stop-color="#001799"/><stop offset="0.2500" stop-color="#000299"/><stop offset="0.3125" stop-color="#060099"/><stop offset="0.3750" stop-color="#190099"/><stop offset="0.5000" stop-color="#430099"/><stop offset="0.7500" stop-color="#990097"/><stop offset="0.8750" stop-color="#990074"/><stop offset="1.0000" stop-color="#99005d"/></linearGradient><linearGradient id="r101" gradientUnits="userSpaceOnUse" x1="1249" y1="0" x2="1910" y2="0"><stop offset="0.0000" stop-color="#001799"/><stop offset="0.2500" stop-color="#000199"/><stop offset="0.3125" stop-color="#050099"/><stop offset="0.3750" stop-color="#190099"/><stop offset="0.5000" stop-color="#410099"/><stop offset="0.7500" stop-color="#990099"/><stop offset="0.8750" stop-color="#990075"/><stop offset="1.0000" stop-color="#99005e"/></linearGradient><linearGradient id="r102" gradientUnits="userSpaceOnUse" x1="1249" y1="0" x2="1910" y2="0"><stop offset="0.0000" stop-color="#001699"/><stop offset="0.2500" stop-color="#000199"/><stop offset="0.3125" stop-color="#050099"/><stop offset="0.3750" stop-color="#180099"/><stop offset="0.5000" stop-color="#400099"/><stop offset="0.7500" stop-color="#960099"/><stop offset="1.0000" stop-color="#990060"/></linearGradient><linearGradient id="r103" gradientUnits="userSpaceOnUse" x1="1249" y1="0" x2="1910" y2="0"><stop offset="0.0000" stop-color="#001599"/><stop offset="0.2500" stop-color="#000099"/><stop offset="0.3125" stop-color="#050099"/><stop offset="0.3750" stop-color="#180099"/><stop offset="0.5000" stop-color="#400099"/><stop offset="0.7500" stop-color="#940099"/><stop offset="1.0000" stop-color="#990061"/></linearGradient><linearGradient id="r104" gradientUnits="userSpaceOnUse" x1="1249" y1="0" x2="1910" y2="0"><stop offset="0.0000" stop-color="#001599"/><stop offset="0.2500" stop-color="#000099"/><stop offset="0.3125" stop-color="#040099"/><stop offset="0.3750" stop-color="#170099"/><stop offset="0.5000" stop-color="#3f0099"/><stop offset="0.7500" stop-color="#930099"/><stop offset="1.0000" stop-color="#990062"/></linearGradient><linearGradient id="r105" gradientUnits="userSpaceOnUse" x1="1249" y1="0" x2="1910" y2="0"><stop offset="0.0000" stop-color="#001499"/><stop offset="0.2500" stop-color="#000099"/><stop offset="0.3125" stop-color="#040099"/><stop offset="0.3750" stop-color="#170099"/><stop offset="0.5000" stop-color="#3e0099"/><stop offset="0.7500" stop-color="#910099"/><stop offset="0.8125" stop-color="#99008d"/><stop offset="0.8750" stop-color="#99007c"/><stop offset="1.0000" stop-color="#990063"/></linearGradient><linearGradient id="r106" gradientUnits="userSpaceOnUse" x1="1249" y1="0" x2="1910" y2="0"><stop offset="0.0000" stop-color="#001399"/><stop offset="0.2500" stop-color="#000099"/><stop offset="0.3125" stop-color="#040099"/><stop offset="0.3750" stop-color="#160099"/><stop offset="0.5000" stop-color="#3d0099"/><stop offset="0.7500" stop-color="#8f0099"/><stop offset="0.8125" stop-color="#99008e"/><stop offset="0.8750" stop-color="#99007d"/><stop offset="1.0000" stop-color="#990065"/></linearGradient><linearGradient id="r107" gradientUnits="userSpaceOnUse" x1="1249" y1="0" x2="1910" y2="0"><stop offset="0.0000" stop-color="#001399"/><stop offset="0.2500" stop-color="#000099"/><stop offset="0.3125" stop-color="#030099"/><stop offset="0.3750" stop-color="#160099"/><stop offset="0.5000" stop-color="#3c0099"/><stop offset="0.7500" stop-color="#8d0099"/><stop offset="0.8125" stop-color="#990090"/><stop offset="0.8750" stop-color="#99007f"/><stop offset="1.0000" stop-color="#990066"/></linearGradient><linearGradient id="r108" gradientUnits="userSpaceOnUse" x1="1249" y1="0" x2="1910" y2="0"><stop offset="0.0000" stop-color="#001299"/><stop offset="0.2500" stop-color="#000099"/><stop offset="0.3125" stop-color="#030099"/><stop offset="0.3750" stop-color="#150099"/><stop offset="0.5000" stop-color="#3b0099"/><stop offset="0.7500" stop-color="#8b0099"/><stop offset="0.8125" stop-color="#990092"/><stop offset="0.8750" stop-color="#990081"/><stop offset="1.0000" stop-color="#990067"/></linearGradient><linearGradient id="r109" gradientUnits="userSpaceOnUse" x1="1249" y1="0" x2="1910" y2="0"><stop offset="0.0000" stop-color="#001199"/><stop offset="0.2500" stop-color="#000099"/><stop offset="0.3125" stop-color="#030099"/><stop offset="0.3750" stop-color="#150099"/><stop offset="0.5000" stop-color="#3a0099"/><stop offset="0.7500" stop-color="#890099"/><stop offset="0.8125" stop-color="#990094"/><stop offset="0.8750" stop-color="#990082"/><stop offset="1.0000" stop-color="#990069"/></linearGradient><linearGradient id="r110" gradientUnits="userSpaceOnUse" x1="1249" y1="0" x2="1910" y2="0"><stop offset="0.0000" stop-color="#001199"/><stop offset="0.2500" stop-color="#000099"/><stop offset="0.3125" stop-color="#020099"/><stop offset="0.3750" stop-color="#140099"/><stop offset="0.5000" stop-color="#390099"/><stop offset="0.7500" stop-color="#880099"/><stop offset="0.8125" stop-color="#990096"/><stop offset="0.8750" stop-color="#990084"/><stop offset="1.0000" stop-color="#99006a"/></linearGradient><linearGradient id="r111" gradientUnits="userSpaceOnUse" x1="1249" y1="0" x2="1910" y2="0"><stop offset="0.0000" stop-color="#001099"/><stop offset="0.2500" stop-color="#000099"/><stop offset="0.3125" stop-color="#020099"/><stop offset="0.3750" stop-color="#140099"/><stop offset="0.5000" stop-color="#380099"/><stop offset="0.7500" stop-color="#860099"/><stop offset="0.8125" stop-color="#990098"/><stop offset="0.8750" stop-color="#990085"/><stop offset="1.0000" stop-color="#99006b"/></linearGradient><linearGradient id="r112" gradientUnits="userSpaceOnUse" x1="1249" y1="0" x2="1910" y2="0"><stop offset="0.0000" stop-color="#001099"/><stop offset="0.2500" stop-color="#000099"/><stop offset="0.3125" stop-color="#020099"/><stop offset="0.3750" stop-color="#130099"/><stop offset="0.5000" stop-color="#380099"/><stop offset="0.7500" stop-color="#840099"/><stop offset="0.8125" stop-color="#990099"/><stop offset="0.8750" stop-color="#990087"/><stop offset="1.0000" stop-color="#99006c"/></linearGradient><linearGradient id="r113" gradientUnits="userSpaceOnUse" x1="1249" y1="0" x2="1910" y2="0"><stop offset="0.0000" stop-color="#000f99"/><stop offset="0.2500" stop-color="#000099"/><stop offset="0.3125" stop-color="#020099"/><stop offset="0.3750" stop-color="#130099"/><stop offset="0.5000" stop-color="#370099"/><stop offset="0.7500" stop-color="#830099"/><stop offset="0.8125" stop-color="#970099"/><stop offset="0.8750" stop-color="#990089"/><stop offset="1.0000" stop-color="#99006e"/></linearGradient><linearGradient id="r114" gradientUnits="userSpaceOnUse" x1="1249" y1="0" x2="1910" y2="0"><stop offset="0.0000" stop-color="#000f99"/><stop offset="0.2500" stop-color="#000099"/><stop offset="0.3125" stop-color="#010099"/><stop offset="0.3750" stop-color="#130099"/><stop offset="0.5000" stop-color="#360099"/><stop offset="0.7500" stop-color="#810099"/><stop offset="0.8125" stop-color="#950099"/><stop offset="0.8750" stop-color="#99008a"/><stop offset="1.0000" stop-color="#99006f"/></linearGradient><linearGradient id="r115" gradientUnits="userSpaceOnUse" x1="1249" y1="0" x2="1910" y2="0"><stop offset="0.0000" stop-color="#000e99"/><stop offset="0.2500" stop-color="#000099"/><stop offset="0.3125" stop-color="#010099"/><stop offset="0.3750" stop-color="#120099"/><stop offset="0.5000" stop-color="#350099"/><stop offset="0.7500" stop-color="#800099"/><stop offset="0.8125" stop-color="#930099"/><stop offset="0.8750" stop-color="#99008c"/><stop offset="1.0000" stop-color="#990070"/></linearGradient><linearGradient id="r116" gradientUnits="userSpaceOnUse" x1="1249" y1="0" x2="1910" y2="0"><stop offset="0.0000" stop-color="#000e99"/><stop offset="0.2500" stop-color="#000099"/><stop offset="0.3125" stop-color="#010099"/><stop offset="0.3750" stop-color="#120099"/><stop offset="0.5000" stop-color="#340099"/><stop offset="0.7500" stop-color="#7e0099"/><stop offset="0.8125" stop-color="#910099"/><stop offset="0.8750" stop-color="#99008e"/><stop offset="1.0000" stop-color="#990072"/></linearGradient><linearGradient id="r117" gradientUnits="userSpaceOnUse" x1="1249" y1="0" x2="1910" y2="0"><stop offset="0.0000" stop-color="#000d99"/><stop offset="0.2500" stop-color="#000099"/><stop offset="0.3125" stop-color="#010099"/><stop offset="0.3750" stop-color="#110099"/><stop offset="0.5000" stop-color="#340099"/><stop offset="0.7500" stop-color="#7d0099"/><stop offset="0.8125" stop-color="#900099"/><stop offset="0.8750" stop-color="#99008f"/><stop offset="1.0000" stop-color="#990073"/></linearGradient><linearGradient id="r118" gradientUnits="userSpaceOnUse" x1="1249" y1="0" x2="1910" y2="0"><stop offset="0.0000" stop-color="#000c99"/><stop offset="0.2500" stop-color="#000099"/><stop offset="0.3125" stop-color="#000099"/><stop offset="0.3750" stop-color="#110099"/><stop offset="0.5000" stop-color="#330099"/><stop offset="0.7500" stop-color="#7b0099"/><stop offset="0.8125" stop-color="#8e0099"/><stop offset="0.8750" stop-color="#990091"/><stop offset="1.0000" stop-color="#990074"/></linearGradient><linearGradient id="r119" gradientUnits="userSpaceOnUse" x1="1249" y1="0" x2="1910" y2="0"><stop offset="0.0000" stop-color="#000c99"/><stop offset="0.2500" stop-color="#000099"/><stop offset="0.3125" stop-color="#000099"/><stop offset="0.3750" stop-color="#110099"/><stop offset="0.5000" stop-color="#320099"/><stop offset="0.7500" stop-color="#7a0099"/><stop offset="0.8750" stop-color="#990093"/><stop offset="1.0000" stop-color="#990076"/></linearGradient><linearGradient id="r120" gradientUnits="userSpaceOnUse" x1="1249" y1="0" x2="1910" y2="0"><stop offset="0.0000" stop-color="#000b99"/><stop offset="0.2500" stop-color="#000099"/><stop offset="0.3125" stop-color="#000099"/><stop offset="0.3750" stop-color="#100099"/><stop offset="0.5000" stop-color="#320099"/><stop offset="0.7500" stop-color="#780099"/><stop offset="0.8750" stop-color="#990094"/><stop offset="1.0000" stop-color="#990077"/></linearGradient><linearGradient id="r121" gradientUnits="userSpaceOnUse" x1="1249" y1="0" x2="1910" y2="0"><stop offset="0.0000" stop-color="#000b99"/><stop offset="0.2500" stop-color="#000099"/><stop offset="0.3125" stop-color="#000099"/><stop offset="0.3750" stop-color="#100099"/><stop offset="0.5000" stop-color="#310099"/><stop offset="0.7500" stop-color="#770099"/><stop offset="0.8750" stop-color="#990096"/><stop offset="1.0000" stop-color="#990078"/></linearGradient><linearGradient id="r122" gradientUnits="userSpaceOnUse" x1="1249" y1="0" x2="1910" y2="0"><stop offset="0.0000" stop-color="#000b99"/><stop offset="0.2500" stop-color="#000099"/><stop offset="0.3125" stop-color="#000099"/><stop offset="0.3750" stop-color="#0f0099"/><stop offset="0.5000" stop-color="#300099"/><stop offset="0.7500" stop-color="#760099"/><stop offset="0.8750" stop-color="#990098"/><stop offset="1.0000" stop-color="#99007a"/></linearGradient><linearGradient id="r123" gradientUnits="userSpaceOnUse" x1="1249" y1="0" x2="1910" y2="0"><stop offset="0.0000" stop-color="#000a99"/><stop offset="0.2500" stop-color="#000099"/><stop offset="0.3125" stop-color="#000099"/><stop offset="0.3750" stop-color="#0f0099"/><stop offset="0.5000" stop-color="#300099"/><stop offset="0.7500" stop-color="#740099"/><stop offset="0.8750" stop-color="#990099"/><stop offset="1.0000" stop-color="#99007b"/></linearGradient><linearGradient id="r124" gradientUnits="userSpaceOnUse" x1="1249" y1="0" x2="1910" y2="0"><stop offset="0.0000" stop-color="#000a99"/><stop offset="0.2500" stop-color="#000099"/><stop offset="0.3125" stop-color="#000099"/><stop offset="0.3750" stop-color="#0f0099"/><stop offset="0.5000" stop-color="#2f0099"/><stop offset="0.7500" stop-color="#730099"/><stop offset="0.8750" stop-color="#970099"/><stop offset="1.0000" stop-color="#99007c"/></linearGradient><linearGradient id="r125" gradientUnits="userSpaceOnUse" x1="1249" y1="0" x2="1910" y2="0"><stop offset="0.0000" stop-color="#000999"/><stop offset="0.2500" stop-color="#000099"/><stop offset="0.3125" stop-color="#000099"/><stop offset="0.3750" stop-color="#0e0099"/><stop offset="0.5000" stop-color="#2e0099"/><stop offset="0.7500" stop-color="#720099"/><stop offset="0.8750" stop-color="#950099"/><stop offset="1.0000" stop-color="#99007e"/></linearGradient><linearGradient id="r126" gradientUnits="userSpaceOnUse" x1="1249" y1="0" x2="1910" y2="0"><stop offset="0.0000" stop-color="#000999"/><stop offset="0.2500" stop-color="#000099"/><stop offset="0.3125" stop-color="#000099"/><stop offset="0.3750" stop-color="#0e0099"/><stop offset="0.5000" stop-color="#2e0099"/><stop offset="0.7500" stop-color="#700099"/><stop offset="0.8750" stop-color="#940099"/><stop offset="1.0000" stop-color="#99007f"/></linearGradient><linearGradient id="r127" gradientUnits="userSpaceOnUse" x1="1249" y1="0" x2="1910" y2="0"><stop offset="0.0000" stop-color="#000899"/><stop offset="0.2500" stop-color="#000099"/><stop offset="0.3125" stop-color="#000099"/><stop offset="0.3750" stop-color="#0e0099"/><stop offset="0.5000" stop-color="#2d0099"/><stop offset="0.7500" stop-color="#6f0099"/><stop offset="0.8750" stop-color="#920099"/><stop offset="1.0000" stop-color="#990080"/></linearGradient><linearGradient id="r128" gradientUnits="userSpaceOnUse" x1="1249" y1="0" x2="1910" y2="0"><stop offset="0.0000" stop-color="#000899"/><stop offset="0.2500" stop-color="#000099"/><stop offset="0.3125" stop-color="#000099"/><stop offset="0.3750" stop-color="#0d0099"/><stop offset="0.5000" stop-color="#2c0099"/><stop offset="0.7500" stop-color="#6e0099"/><stop offset="0.8750" stop-color="#910099"/><stop offset="0.9375" stop-color="#990090"/><stop offset="1.0000" stop-color="#990082"/></linearGradient><linearGradient id="r129" gradientUnits="userSpaceOnUse" x1="1249" y1="0" x2="1910" y2="0"><stop offset="0.0000" stop-color="#000799"/><stop offset="0.2500" stop-color="#000099"/><stop offset="0.3125" stop-color="#000099"/><stop offset="0.3750" stop-color="#0d0099"/><stop offset="0.5000" stop-color="#2c0099"/><stop offset="0.7500" stop-color="#6d0099"/><stop offset="0.8750" stop-color="#8f0099"/><stop offset="0.9375" stop-color="#990092"/><stop offset="1.0000" stop-color="#990083"/></linearGradient><linearGradient id="r130" gradientUnits="userSpaceOnUse" x1="1385" y1="0" x2="1744" y2="0"><stop offset="0.0000" stop-color="#00ff01"/><stop offset="0.1250" stop-color="#6fff00"/><stop offset="0.2500" stop-color="#fffa00"/><stop offset="0.3125" stop-color="#ffb900"/><stop offset="0.3750" stop-color="#ff8d00"/><stop offset="0.5000" stop-color="#ff5700"/><stop offset="0.7500" stop-color="#ff2100"/><stop offset="1.0000" stop-color="#ff0600"/></linearGradient><linearGradient id="r131" gradientUnits="userSpaceOnUse" x1="1385" y1="0" x2="1744" y2="0"><stop offset="0.0000" stop-color="#00ff07"/><stop offset="0.1250" stop-color="#6fff00"/><stop offset="0.2500" stop-color="#fff900"/><stop offset="0.3125" stop-color="#ffb800"/><stop offset="0.3750" stop-color="#ff8c00"/><stop offset="0.5000" stop-color="#ff5600"/><stop offset="0.7500" stop-color="#ff2100"/><stop offset="1.0000" stop-color="#ff0600"/></linearGradient><linearGradient id="r132" gradientUnits="userSpaceOnUse" x1="1385" y1="0" x2="1744" y2="0"><stop offset="0.0000" stop-color="#00ff0d"/><stop offset="0.0625" stop-color="#31ff09"/><stop offset="0.1250" stop-color="#6eff05"/><stop offset="0.2500" stop-color="#fff800"/><stop offset="0.3125" stop-color="#ffb700"/><stop offset="0.3750" stop-color="#ff8b00"/><stop offset="0.5000" stop-color="#ff5500"/><stop offset="0.7500" stop-color="#ff2000"/><stop offset="1.0000" stop-color="#ff0500"/></linearGradient><linearGradient id="r133" gradientUnits="userSpaceOnUse" x1="1385" y1="0" x2="1744" y2="0"><stop offset="0.0000" stop-color="#00ff13"/><stop offset="0.0625" stop-color="#30ff10"/><stop offset="0.1250" stop-color="#6eff0b"/><stop offset="0.2500" stop-color="#fff701"/><stop offset="0.3125" stop-color="#ffb600"/><stop offset="0.3750" stop-color="#ff8a00"/><stop offset="0.5000" stop-color="#ff5400"/><stop offset="0.7500" stop-color="#ff1f00"/><stop offset="1.0000" stop-color="#ff0500"/></linearGradient><linearGradient id="r134" gradientUnits="userSpaceOnUse" x1="1385" y1="0" x2="1744" y2="0"><stop offset="0.0000" stop-color="#00ff19"/><stop offset="0.0312" stop-color="#13ff18"/><stop offset="0.0625" stop-color="#2fff16"/><stop offset="0.1250" stop-color="#6eff12"/><stop offset="0.1875" stop-color="#b5ff0e"/><stop offset="0.2188" stop-color="#ddff0c"/><stop offset="0.2344" stop-color="#f2ff0b"/><stop offset="0.2500" stop-color="#fff609"/><stop offset="0.3125" stop-color="#ffb403"/><stop offset="0.3750" stop-color="#ff8900"/><stop offset="0.5000" stop-color="#ff5300"/><stop offset="0.7500" stop-color="#ff1e00"/><stop offset="1.0000" stop-color="#ff0400"/></linearGradient><linearGradient id="r135" gradientUnits="userSpaceOnUse" x1="1385" y1="0" x2="1744" y2="0"><stop offset="0.0000" stop-color="#00ff20"/><stop offset="0.0312" stop-color="#12ff1e"/><stop offset="0.0625" stop-color="#2fff1d"/><stop offset="0.1250" stop-color="#6eff1a"/><stop offset="0.1875" stop-color="#b6ff16"/><stop offset="0.2188" stop-color="#deff14"/><stop offset="0.2344" stop-color="#f3ff13"/><stop offset="0.2500" stop-color="#fff511"/><stop offset="0.3125" stop-color="#ffb309"/><stop offset="0.3750" stop-color="#ff8803"/><stop offset="0.5000" stop-color="#ff5200"/><stop offset="0.7500" stop-color="#ff1e00"/><stop offset="1.0000" stop-color="#ff0400"/></linearGradient><linearGradient id="r136" gradientUnits="userSpaceOnUse" x1="1385" y1="0" x2="1744" y2="0"><stop offset="0.0000" stop-color="#00ff26"/><stop offset="0.0312" stop-color="#11ff25"/><stop offset="0.0625" stop-color="#2eff24"/><stop offset="0.1250" stop-color="#6dff21"/><stop offset="0.1875" stop-color="#b6ff1d"/><stop offset="0.2188" stop-color="#deff1c"/><stop offset="0.2344" stop-color="#f4ff1b"/><stop offset="0.2500" stop-color="#fff419"/><stop offset="0.3125" stop-color="#ffb20f"/><stop offset="0.3750" stop-color="#ff8709"/><stop offset="0.5000" stop-color="#ff5201"/><stop offset="0.7500" stop-color="#ff1d00"/><stop offset="1.0000" stop-color="#ff0300"/></linearGradient><linearGradient id="r137" gradientUnits="userSpaceOnUse" x1="1385" y1="0" x2="1744" y2="0"><stop offset="0.0000" stop-color="#00ff2d"/><stop offset="0.0312" stop-color="#10ff2c"/><stop offset="0.0625" stop-color="#2dff2a"/><stop offset="0.1250" stop-color="#6dff28"/><stop offset="0.1875" stop-color="#b6ff25"/><stop offset="0.2188" stop-color="#dfff24"/><stop offset="0.2344" stop-color="#f5ff23"/><stop offset="0.2500" stop-color="#fff321"/><stop offset="0.3125" stop-color="#ffb115"/><stop offset="0.3750" stop-color="#ff860e"/><stop offset="0.5000" stop-color="#ff5104"/><stop offset="0.7500" stop-color="#ff1c00"/><stop offset="1.0000" stop-color="#ff0200"/></linearGradient><linearGradient id="r138" gradientUnits="userSpaceOnUse" x1="1385" y1="0" x2="1744" y2="0"><stop offset="0.0000" stop-color="#00ff33"/><stop offset="0.0156" stop-color="#01ff33"/><stop offset="0.0312" stop-color="#0fff32"/><stop offset="0.0625" stop-color="#2cff31"/><stop offset="0.1250" stop-color="#6dff30"/><stop offset="0.1875" stop-color="#b7ff2d"/><stop offset="0.2188" stop-color="#e0ff2c"/><stop offset="0.2344" stop-color="#f6ff2b"/><stop offset="0.2500" stop-color="#fff229"/><stop offset="0.3125" stop-color="#ffb01b"/><stop offset="0.3750" stop-color="#ff8513"/><stop offset="0.5000" stop-color="#ff5008"/><stop offset="0.7500" stop-color="#ff1c00"/><stop offset="1.0000" stop-color="#ff0200"/></linearGradient><linearGradient id="r139" gradientUnits="userSpaceOnUse" x1="1385" y1="0" x2="1744" y2="0"><stop offset="0.0000" stop-color="#00ff3a"/><stop offset="0.0156" stop-color="#00ff3a"/><stop offset="0.0312" stop-color="#0eff39"/><stop offset="0.0625" stop-color="#2bff39"/><stop offset="0.1250" stop-color="#6cff37"/><stop offset="0.1875" stop-color="#b7ff35"/><stop offset="0.2188" stop-color="#e1ff35"/><stop offset="0.2344" stop-color="#f7ff34"/><stop offset="0.2500" stop-color="#fff131"/><stop offset="0.3125" stop-color="#ffaf22"/><stop offset="0.3750" stop-color="#ff8418"/><stop offset="0.5000" stop-color="#ff4f0c"/><stop offset="0.7500" stop-color="#ff1b00"/><stop offset="1.0000" stop-color="#ff0100"/></linearGradient><linearGradient id="r140" gradientUnits="userSpaceOnUse" x1="1385" y1="0" x2="1744" y2="0"><stop offset="0.0000" stop-color="#00ff41"/><stop offset="0.0156" stop-color="#00ff40"/><stop offset="0.0312" stop-color="#0dff40"/><stop offset="0.0625" stop-color="#2bff40"/><stop offset="0.1250" stop-color="#6cff3f"/><stop offset="0.1875" stop-color="#b7ff3e"/><stop offset="0.2188" stop-color="#e1ff3d"/><stop offset="0.2344" stop-color="#f8ff3d"/><stop offset="0.2500" stop-color="#fff039"/><stop offset="0.3125" stop-color="#ffae28"/><stop offset="0.3750" stop-color="#ff831d"/><stop offset="0.5000" stop-color="#ff4e10"/><stop offset="0.7500" stop-color="#ff1a03"/><stop offset="1.0000" stop-color="#ff0100"/></linearGradient><linearGradient id="r141" gradientUnits="userSpaceOnUse" x1="1385" y1="0" x2="1744" y2="0"><stop offset="0.0000" stop-color="#00ff47"/><stop offset="0.0312" stop-color="#0cff47"/><stop offset="0.0625" stop-color="#2aff47"/><stop offset="0.1250" stop-color="#6cff47"/><stop offset="0.1875" stop-color="#b8ff46"/><stop offset="0.2188" stop-color="#e2ff46"/><stop offset="0.2344" stop-color="#f9ff46"/><stop offset="0.2500" stop-color="#ffef41"/><stop offset="0.3125" stop-color="#ffad2f"/><stop offset="0.3750" stop-color="#ff8123"/><stop offset="0.5000" stop-color="#ff4d14"/><stop offset="0.7500" stop-color="#ff1906"/><stop offset="1.0000" stop-color="#ff0000"/></linearGradient><linearGradient id="r142" gradientUnits="userSpaceOnUse" x1="1385" y1="0" x2="1744" y2="0"><stop offset="0.0000" stop-color="#00ff4e"/><stop offset="0.0312" stop-color="#0bff4f"/><stop offset="0.0625" stop-color="#29ff4f"/><stop offset="0.1250" stop-color="#6bff4f"/><stop offset="0.1875" stop-color="#b8ff4f"/><stop offset="0.2188" stop-color="#e3ff4f"/><stop offset="0.2344" stop-color="#faff4f"/><stop offset="0.2500" stop-color="#ffee4a"/><stop offset="0.3125" stop-color="#ffab35"/><stop offset="0.3750" stop-color="#ff8028"/><stop offset="0.5000" stop-color="#ff4c18"/><stop offset="0.7500" stop-color="#ff1908"/><stop offset="1.0000" stop-color="#ff0000"/></linearGradient><linearGradient id="r143" gradientUnits="userSpaceOnUse" x1="1385" y1="0" x2="1744" y2="0"><stop offset="0.0000" stop-color="#00ff56"/><stop offset="0.0312" stop-color="#0aff56"/><stop offset="0.0625" stop-color="#28ff56"/><stop offset="0.1250" stop-color="#6bff57"/><stop offset="0.1875" stop-color="#b8ff58"/><stop offset="0.2188" stop-color="#e4ff58"/><stop offset="0.2344" stop-color="#fbff58"/><stop offset="0.2500" stop-color="#ffed52"/><stop offset="0.3125" stop-color="#ffaa3c"/><stop offset="0.3750" stop-color="#ff7f2d"/><stop offset="0.5000" stop-color="#ff4b1c"/><stop offset="0.7500" stop-color="#ff180b"/><stop offset="1.0000" stop-color="#ff0002"/></linearGradient><linearGradient id="r144" gradientUnits="userSpaceOnUse" x1="1385" y1="0" x2="1744" y2="0"><stop offset="0.0000" stop-color="#00ff5d"/><stop offset="0.0312" stop-color="#09ff5d"/><stop offset="0.0625" stop-color="#27ff5e"/><stop offset="0.1250" stop-color="#6bff5f"/><stop offset="0.1875" stop-color="#b9ff61"/><stop offset="0.2188" stop-color="#e5ff61"/><stop offset="0.2344" stop-color="#fcff62"/><stop offset="0.2500" stop-color="#ffeb5b"/><stop offset="0.3125" stop-color="#ffa942"/><stop offset="0.3750" stop-color="#ff7e33"/><stop offset="0.5000" stop-color="#ff4a20"/><stop offset="0.7500" stop-color="#ff170d"/><stop offset="1.0000" stop-color="#ff0004"/></linearGradient><linearGradient id="r145" gradientUnits="userSpaceOnUse" x1="1385" y1="0" x2="1744" y2="0"><stop offset="0.0000" stop-color="#00ff64"/><stop offset="0.0312" stop-color="#08ff65"/><stop offset="0.0625" stop-color="#26ff66"/><stop offset="0.1250" stop-color="#6aff68"/><stop offset="0.1875" stop-color="#b9ff6a"/><stop offset="0.2188" stop-color="#e5ff6b"/><stop offset="0.2344" stop-color="#fdff6b"/><stop offset="0.2500" stop-color="#ffea63"/><stop offset="0.3125" stop-color="#ffa849"/><stop offset="0.3750" stop-color="#ff7d38"/><stop offset="0.5000" stop-color="#ff4924"/><stop offset="0.7500" stop-color="#ff1710"/><stop offset="1.0000" stop-color="#ff0006"/></linearGradient><linearGradient id="r146" gradientUnits="userSpaceOnUse" x1="1385" y1="0" x2="1744" y2="0"><stop offset="0.0000" stop-color="#00ff6c"/><stop offset="0.0312" stop-color="#06ff6d"/><stop offset="0.0625" stop-color="#25ff6e"/><stop offset="0.1250" stop-color="#6aff70"/><stop offset="0.1875" stop-color="#b9ff73"/><stop offset="0.2188" stop-color="#e6ff75"/><stop offset="0.2344" stop-color="#feff75"/><stop offset="0.2500" stop-color="#ffe96c"/><stop offset="0.3125" stop-color="#ffa750"/><stop offset="0.3750" stop-color="#ff7c3e"/><stop offset="0.5000" stop-color="#ff4828"/><stop offset="0.7500" stop-color="#ff1612"/><stop offset="1.0000" stop-color="#ff0008"/></linearGradient><linearGradient id="r147" gradientUnits="userSpaceOnUse" x1="1385" y1="0" x2="1744" y2="0"><stop offset="0.0000" stop-color="#00ff73"/><stop offset="0.0312" stop-color="#05ff74"/><stop offset="0.0625" stop-color="#24ff76"/><stop offset="0.1250" stop-color="#6aff79"/><stop offset="0.1875" stop-color="#baff7c"/><stop offset="0.2188" stop-color="#e7ff7e"/><stop offset="0.2344" stop-color="#ffff7f"/><stop offset="0.2500" stop-color="#ffe875"/><stop offset="0.3125" stop-color="#ffa557"/><stop offset="0.3750" stop-color="#ff7b43"/><stop offset="0.5000" stop-color="#ff472c"/><stop offset="0.7500" stop-color="#ff1515"/><stop offset="1.0000" stop-color="#ff000a"/></linearGradient><linearGradient id="r148" gradientUnits="userSpaceOnUse" x1="1385" y1="0" x2="1744" y2="0"><stop offset="0.0000" stop-color="#00ff7b"/><stop offset="0.0312" stop-color="#04ff7c"/><stop offset="0.0625" stop-color="#23ff7e"/><stop offset="0.1250" stop-color="#69ff82"/><stop offset="0.1875" stop-color="#baff86"/><stop offset="0.2188" stop-color="#e8ff89"/><stop offset="0.2344" stop-color="#fffe89"/><stop offset="0.2500" stop-color="#ffe77e"/><stop offset="0.3125" stop-color="#ffa45d"/><stop offset="0.3750" stop-color="#ff7949"/><stop offset="0.5000" stop-color="#ff4630"/><stop offset="0.7500" stop-color="#ff1417"/><stop offset="1.0000" stop-color="#ff000c"/></linearGradient><linearGradient id="r149" gradientUnits="userSpaceOnUse" x1="1385" y1="0" x2="1744" y2="0"><stop offset="0.0000" stop-color="#00ff83"/><stop offset="0.0312" stop-color="#03ff84"/><stop offset="0.0625" stop-color="#22ff86"/><stop offset="0.1250" stop-color="#69ff8b"/><stop offset="0.1875" stop-color="#bbff90"/><stop offset="0.2188" stop-color="#e9ff93"/><stop offset="0.2344" stop-color="#fffc93"/><stop offset="0.2500" stop-color="#ffe587"/><stop offset="0.3125" stop-color="#ffa364"/><stop offset="0.3750" stop-color="#ff784e"/><stop offset="0.5000" stop-color="#ff4534"/><stop offset="0.7500" stop-color="#ff141a"/><stop offset="1.0000" stop-color="#ff000e"/></linearGradient><linearGradient id="r150" gradientUnits="userSpaceOnUse" x1="1385" y1="0" x2="1744" y2="0"><stop offset="0.0000" stop-color="#00ff8b"/><stop offset="0.0312" stop-color="#02ff8d"/><stop offset="0.0625" stop-color="#21ff8f"/><stop offset="0.1250" stop-color="#68ff94"/><stop offset="0.1875" stop-color="#bbff9a"/><stop offset="0.2188" stop-color="#eaff9d"/><stop offset="0.2344" stop-color="#fffb9d"/><stop offset="0.2500" stop-color="#ffe490"/><stop offset="0.3125" stop-color="#ffa26b"/><stop offset="0.3750" stop-color="#ff7754"/><stop offset="0.5000" stop-color="#ff4438"/><stop offset="0.7500" stop-color="#ff131d"/><stop offset="1.0000" stop-color="#ff0010"/></linearGradient><linearGradient id="r151" gradientUnits="userSpaceOnUse" x1="1385" y1="0" x2="1744" y2="0"><stop offset="0.0000" stop-color="#00ff93"/><stop offset="0.0312" stop-color="#01ff95"/><stop offset="0.0625" stop-color="#20ff98"/><stop offset="0.1250" stop-color="#68ff9d"/><stop offset="0.1875" stop-color="#bcffa4"/><stop offset="0.2188" stop-color="#ebffa8"/><stop offset="0.2344" stop-color="#fffaa7"/><stop offset="0.2500" stop-color="#ffe399"/><stop offset="0.3125" stop-color="#ffa072"/><stop offset="0.3750" stop-color="#ff765a"/><stop offset="0.5000" stop-color="#ff433c"/><stop offset="0.7500" stop-color="#ff121f"/><stop offset="1.0000" stop-color="#ff0012"/></linearGradient><linearGradient id="r152" gradientUnits="userSpaceOnUse" x1="1385" y1="0" x2="1744" y2="0"><stop offset="0.0000" stop-color="#00ff9b"/><stop offset="0.0312" stop-color="#00ff9e"/><stop offset="0.0625" stop-color="#1fffa1"/><stop offset="0.1250" stop-color="#68ffa7"/><stop offset="0.1875" stop-color="#bcffaf"/><stop offset="0.2188" stop-color="#ecffb3"/><stop offset="0.2344" stop-color="#fff9b1"/><stop offset="0.2500" stop-color="#ffe2a3"/><stop offset="0.3125" stop-color="#ff9f7a"/><stop offset="0.3750" stop-color="#ff755f"/><stop offset="0.5000" stop-color="#ff4240"/><stop offset="0.7500" stop-color="#ff1122"/><stop offset="1.0000" stop-color="#ff0013"/></linearGradient><linearGradient id="r153" gradientUnits="userSpaceOnUse" x1="1385" y1="0" x2="1744" y2="0"><stop offset="0.0000" stop-color="#00ffa3"/><stop offset="0.0312" stop-color="#00ffa6"/><stop offset="0.0625" stop-color="#1effaa"/><stop offset="0.1250" stop-color="#67ffb1"/><stop offset="0.1875" stop-color="#bcffba"/><stop offset="0.2188" stop-color="#edffbe"/><stop offset="0.2344" stop-color="#fff8bb"/><stop offset="0.2500" stop-color="#ffe0ac"/><stop offset="0.3125" stop-color="#ff9e81"/><stop offset="0.3750" stop-color="#ff7365"/><stop offset="0.5000" stop-color="#ff4144"/><stop offset="0.7500" stop-color="#ff1125"/><stop offset="1.0000" stop-color="#ff0015"/></linearGradient><linearGradient id="r154" gradientUnits="userSpaceOnUse" x1="1385" y1="0" x2="1744" y2="0"><stop offset="0.0000" stop-color="#00ffac"/><stop offset="0.0312" stop-color="#00ffaf"/><stop offset="0.0625" stop-color="#1dffb3"/><stop offset="0.1250" stop-color="#67ffbb"/><stop offset="0.1875" stop-color="#bdffc4"/><stop offset="0.2188" stop-color="#eeffca"/><stop offset="0.2344" stop-color="#fff6c6"/><stop offset="0.2500" stop-color="#ffdfb6"/><stop offset="0.3125" stop-color="#ff9c88"/><stop offset="0.3750" stop-color="#ff726b"/><stop offset="0.5000" stop-color="#ff4048"/><stop offset="0.7500" stop-color="#ff1027"/><stop offset="1.0000" stop-color="#ff0017"/></linearGradient><linearGradient id="r155" gradientUnits="userSpaceOnUse" x1="1385" y1="0" x2="1744" y2="0"><stop offset="0.0000" stop-color="#00ffb4"/><stop offset="0.0312" stop-color="#00ffb8"/><stop offset="0.0625" stop-color="#1cffbc"/><stop offset="0.1250" stop-color="#66ffc5"/><stop offset="0.1875" stop-color="#bdffd0"/><stop offset="0.2188" stop-color="#efffd6"/><stop offset="0.2344" stop-color="#fff5d0"/><stop offset="0.2500" stop-color="#ffdec0"/><stop offset="0.3125" stop-color="#ff9b8f"/><stop offset="0.3750" stop-color="#ff7171"/><stop offset="0.5000" stop-color="#ff3f4c"/><stop offset="0.7500" stop-color="#ff0f2a"/><stop offset="1.0000" stop-color="#ff0019"/></linearGradient><linearGradient id="r156" gradientUnits="userSpaceOnUse" x1="1385" y1="0" x2="1744" y2="0"><stop offset="0.0000" stop-color="#00ffbd"/><stop offset="0.0312" stop-color="#00ffc1"/><stop offset="0.0625" stop-color="#1bffc6"/><stop offset="0.1250" stop-color="#66ffcf"/><stop offset="0.1875" stop-color="#beffdb"/><stop offset="0.2188" stop-color="#f0ffe2"/><stop offset="0.2344" stop-color="#fff4db"/><stop offset="0.2500" stop-color="#ffdcc9"/><stop offset="0.3125" stop-color="#ff9a97"/><stop offset="0.3750" stop-color="#ff7077"/><stop offset="0.5000" stop-color="#ff3e51"/><stop offset="0.7500" stop-color="#ff0e2d"/><stop offset="1.0000" stop-color="#ff001b"/></linearGradient><linearGradient id="r157" gradientUnits="userSpaceOnUse" x1="1385" y1="0" x2="1744" y2="0"><stop offset="0.0000" stop-color="#00ffc6"/><stop offset="0.0312" stop-color="#00ffca"/><stop offset="0.0625" stop-color="#1affcf"/><stop offset="0.1250" stop-color="#65ffda"/><stop offset="0.1875" stop-color="#beffe7"/><stop offset="0.2188" stop-color="#f1ffee"/><stop offset="0.2266" stop-color="#fefff0"/><stop offset="0.2344" stop-color="#fff2e6"/><stop offset="0.2500" stop-color="#ffdbd3"/><stop offset="0.3125" stop-color="#ff989e"/><stop offset="0.3750" stop-color="#ff6e7d"/><stop offset="0.5000" stop-color="#ff3d55"/><stop offset="0.7500" stop-color="#ff0d2f"/><stop offset="0.8750" stop-color="#ff0025"/><stop offset="1.0000" stop-color="#ff001d"/></linearGradient><linearGradient id="r158" gradientUnits="userSpaceOnUse" x1="1385" y1="0" x2="1744" y2="0"><stop offset="0.0000" stop-color="#00ffcf"/><stop offset="0.0312" stop-color="#00ffd4"/><stop offset="0.0469" stop-color="#08ffd6"/><stop offset="0.0625" stop-color="#19ffd9"/><stop offset="0.1250" stop-color="#65ffe5"/><stop offset="0.1875" stop-color="#bffff3"/><stop offset="0.2188" stop-color="#f2fffb"/><stop offset="0.2266" stop-color="#fffefc"/><stop offset="0.2344" stop-color="#fff1f1"/><stop offset="0.2500" stop-color="#ffdadd"/><stop offset="0.3125" stop-color="#ff97a6"/><stop offset="0.3750" stop-color="#ff6d83"/><stop offset="0.5000" stop-color="#ff3c59"/><stop offset="0.7500" stop-color="#ff0d32"/><stop offset="0.8750" stop-color="#ff0027"/><stop offset="1.0000" stop-color="#ff001f"/></linearGradient><linearGradient id="r159" gradientUnits="userSpaceOnUse" x1="1385" y1="0" x2="1744" y2="0"><stop offset="0.0000" stop-color="#00ffd8"/><stop offset="0.0312" stop-color="#00ffde"/><stop offset="0.0625" stop-color="#18ffe3"/><stop offset="0.1250" stop-color="#64fff0"/><stop offset="0.1875" stop-color="#bfffff"/><stop offset="0.2188" stop-color="#ebf7ff"/><stop offset="0.2344" stop-color="#fff0fc"/><stop offset="0.2500" stop-color="#ffd8e8"/><stop offset="0.3125" stop-color="#ff96ad"/><stop offset="0.3750" stop-color="#ff6c89"/><stop offset="0.5000" stop-color="#ff3b5d"/><stop offset="0.7500" stop-color="#ff0c35"/><stop offset="1.0000" stop-color="#ff0021"/></linearGradient><linearGradient id="r160" gradientUnits="userSpaceOnUse" x1="1385" y1="0" x2="1744" y2="0"><stop offset="0.0000" stop-color="#00ffe2"/><stop offset="0.0312" stop-color="#00ffe7"/><stop offset="0.0469" stop-color="#05ffea"/><stop offset="0.0625" stop-color="#17ffed"/><stop offset="0.1250" stop-color="#64fffb"/><stop offset="0.1875" stop-color="#b7f3ff"/><stop offset="0.2188" stop-color="#e1ebff"/><stop offset="0.2344" stop-color="#f7e7ff"/><stop offset="0.2500" stop-color="#ffd7f2"/><stop offset="0.3125" stop-color="#ff94b5"/><stop offset="0.3750" stop-color="#ff6b8f"/><stop offset="0.5000" stop-color="#ff3962"/><stop offset="0.7500" stop-color="#ff0b37"/><stop offset="1.0000" stop-color="#ff0023"/></linearGradient><linearGradient id="r161" gradientUnits="userSpaceOnUse" x1="1385" y1="0" x2="1744" y2="0"><stop offset="0.0000" stop-color="#00ffeb"/><stop offset="0.0312" stop-color="#00fff1"/><stop offset="0.0469" stop-color="#04fff5"/><stop offset="0.0625" stop-color="#15fff8"/><stop offset="0.1250" stop-color="#61f8ff"/><stop offset="0.2500" stop-color="#ffd6fc"/><stop offset="0.3125" stop-color="#ff93bd"/><stop offset="0.3750" stop-color="#ff6995"/><stop offset="0.5000" stop-color="#ff3866"/><stop offset="0.7500" stop-color="#ff0a3a"/><stop offset="1.0000" stop-color="#ff0025"/></linearGradient><linearGradient id="r162" gradientUnits="userSpaceOnUse" x1="1385" y1="0" x2="1744" y2="0"><stop offset="0.0000" stop-color="#00fff5"/><stop offset="0.0312" stop-color="#00fffc"/><stop offset="0.0469" stop-color="#02ffff"/><stop offset="0.0625" stop-color="#14fcff"/><stop offset="0.1250" stop-color="#5cedff"/><stop offset="0.2500" stop-color="#f7ceff"/><stop offset="0.3125" stop-color="#ff92c4"/><stop offset="0.3750" stop-color="#ff689b"/><stop offset="0.5000" stop-color="#ff376a"/><stop offset="0.7500" stop-color="#ff0a3d"/><stop offset="1.0000" stop-color="#ff0027"/></linearGradient><linearGradient id="r163" gradientUnits="userSpaceOnUse" x1="1385" y1="0" x2="1744" y2="0"><stop offset="0.0000" stop-color="#00ffff"/><stop offset="0.0312" stop-color="#00f8ff"/><stop offset="0.0469" stop-color="#01f5ff"/><stop offset="0.0625" stop-color="#12f1ff"/><stop offset="0.1250" stop-color="#58e3ff"/><stop offset="0.2500" stop-color="#eec4ff"/><stop offset="0.2656" stop-color="#ffbffd"/><stop offset="0.2812" stop-color="#ffadea"/><stop offset="0.3125" stop-color="#ff90cc"/><stop offset="0.3750" stop-color="#ff67a1"/><stop offset="0.5000" stop-color="#ff366f"/><stop offset="0.7500" stop-color="#ff0940"/><stop offset="1.0000" stop-color="#ff0029"/></linearGradient><linearGradient id="r164" gradientUnits="userSpaceOnUse" x1="1385" y1="0" x2="1744" y2="0"><stop offset="0.0000" stop-color="#00f5ff"/><stop offset="0.0312" stop-color="#00efff"/><stop offset="0.0469" stop-color="#00ebff"/><stop offset="0.0625" stop-color="#10e8ff"/><stop offset="0.1250" stop-color="#54daff"/><stop offset="0.2500" stop-color="#e5bcff"/><stop offset="0.2656" stop-color="#f8b8ff"/><stop offset="0.2812" stop-color="#ffacf4"/><stop offset="0.3125" stop-color="#ff8fd4"/><stop offset="0.3750" stop-color="#ff65a8"/><stop offset="0.5000" stop-color="#ff3573"/><stop offset="0.7500" stop-color="#ff0842"/><stop offset="1.0000" stop-color="#ff002b"/></linearGradient><linearGradient id="r165" gradientUnits="userSpaceOnUse" x1="1385" y1="0" x2="1744" y2="0"><stop offset="0.0000" stop-color="#00ecff"/><stop offset="0.0312" stop-color="#00e6ff"/><stop offset="0.0469" stop-color="#00e2ff"/><stop offset="0.0625" stop-color="#0edfff"/><stop offset="0.1250" stop-color="#50d1ff"/><stop offset="0.2500" stop-color="#dcb3ff"/><stop offset="0.2812" stop-color="#ffaafd"/><stop offset="0.3125" stop-color="#ff8ddc"/><stop offset="0.3750" stop-color="#ff64ae"/><stop offset="0.5000" stop-color="#ff3478"/><stop offset="0.7500" stop-color="#ff0745"/><stop offset="1.0000" stop-color="#ff002d"/></linearGradient><linearGradient id="r166" gradientUnits="userSpaceOnUse" x1="1385" y1="0" x2="1744" y2="0"><stop offset="0.0000" stop-color="#00e3ff"/><stop offset="0.0312" stop-color="#00ddff"/><stop offset="0.0469" stop-color="#00daff"/><stop offset="0.0625" stop-color="#0dd6ff"/><stop offset="0.1250" stop-color="#4cc9ff"/><stop offset="0.2500" stop-color="#d4acff"/><stop offset="0.2812" stop-color="#f8a4ff"/><stop offset="0.3125" stop-color="#ff8ce4"/><stop offset="0.3750" stop-color="#ff63b4"/><stop offset="0.5000" stop-color="#ff337c"/><stop offset="0.7500" stop-color="#ff0648"/><stop offset="1.0000" stop-color="#ff002f"/></linearGradient><linearGradient id="r167" gradientUnits="userSpaceOnUse" x1="1385" y1="0" x2="1744" y2="0"><stop offset="0.0000" stop-color="#00dbff"/><stop offset="0.0312" stop-color="#00d5ff"/><stop offset="0.0625" stop-color="#0bceff"/><stop offset="0.1250" stop-color="#49c1ff"/><stop offset="0.2500" stop-color="#cda4ff"/><stop offset="0.2812" stop-color="#ef9dff"/><stop offset="0.2969" stop-color="#ff98fd"/><stop offset="0.3125" stop-color="#ff8aed"/><stop offset="0.3750" stop-color="#ff61bb"/><stop offset="0.5000" stop-color="#ff3280"/><stop offset="0.7500" stop-color="#ff064b"/><stop offset="1.0000" stop-color="#ff0031"/></linearGradient><linearGradient id="r168" gradientUnits="userSpaceOnUse" x1="1385" y1="0" x2="1744" y2="0"><stop offset="0.0000" stop-color="#00d3ff"/><stop offset="0.0312" stop-color="#00cdff"/><stop offset="0.0625" stop-color="#0ac7ff"/><stop offset="0.1250" stop-color="#46baff"/><stop offset="0.2500" stop-color="#c69dff"/><stop offset="0.2812" stop-color="#e796ff"/><stop offset="0.3125" stop-color="#ff89f5"/><stop offset="0.3750" stop-color="#ff60c1"/><stop offset="0.5000" stop-color="#ff3185"/><stop offset="0.6250" stop-color="#ff1663"/><stop offset="0.7500" stop-color="#ff054d"/><stop offset="1.0000" stop-color="#ff0033"/></linearGradient><linearGradient id="r169" gradientUnits="userSpaceOnUse" x1="1385" y1="0" x2="1744" y2="0"><stop offset="0.0000" stop-color="#00ccff"/><stop offset="0.0312" stop-color="#00c6ff"/><stop offset="0.0625" stop-color="#08c0ff"/><stop offset="0.1250" stop-color="#43b3ff"/><stop offset="0.2500" stop-color="#bf97ff"/><stop offset="0.3125" stop-color="#ff87fd"/><stop offset="0.3750" stop-color="#ff5fc8"/><stop offset="0.5000" stop-color="#ff308a"/><stop offset="0.6250" stop-color="#ff1567"/><stop offset="0.7500" stop-color="#ff0450"/><stop offset="1.0000" stop-color="#ff0035"/></linearGradient><linearGradient id="r170" gradientUnits="userSpaceOnUse" x1="1385" y1="0" x2="1744" y2="0"><stop offset="0.0000" stop-color="#00c5ff"/><stop offset="0.0625" stop-color="#07b9ff"/><stop offset="0.1250" stop-color="#40acff"/><stop offset="0.2500" stop-color="#b991ff"/><stop offset="0.3125" stop-color="#f982ff"/><stop offset="0.3750" stop-color="#ff5dce"/><stop offset="0.5000" stop-color="#ff2e8e"/><stop offset="0.6250" stop-color="#ff146a"/><stop offset="0.7500" stop-color="#ff0353"/><stop offset="1.0000" stop-color="#ff0037"/></linearGradient><linearGradient id="r171" gradientUnits="userSpaceOnUse" x1="1385" y1="0" x2="1744" y2="0"><stop offset="0.0000" stop-color="#00beff"/><stop offset="0.0625" stop-color="#06b2ff"/><stop offset="0.1250" stop-color="#3da6ff"/><stop offset="0.2500" stop-color="#b38bff"/><stop offset="0.3125" stop-color="#f17dff"/><stop offset="0.3281" stop-color="#ff78fd"/><stop offset="0.3438" stop-color="#ff6eee"/><stop offset="0.3750" stop-color="#ff5cd5"/><stop offset="0.5000" stop-color="#ff2d93"/><stop offset="0.6250" stop-color="#ff136e"/><stop offset="0.7500" stop-color="#ff0256"/><stop offset="1.0000" stop-color="#ff0039"/></linearGradient><linearGradient id="r172" gradientUnits="userSpaceOnUse" x1="1385" y1="0" x2="1744" y2="0"><stop offset="0.0000" stop-color="#00b8ff"/><stop offset="0.0625" stop-color="#04acff"/><stop offset="0.1250" stop-color="#3ba0ff"/><stop offset="0.2500" stop-color="#ad85ff"/><stop offset="0.3125" stop-color="#e978ff"/><stop offset="0.3438" stop-color="#ff6cf6"/><stop offset="0.3750" stop-color="#ff5adb"/><stop offset="0.5000" stop-color="#ff2c97"/><stop offset="0.6250" stop-color="#ff1271"/><stop offset="0.7500" stop-color="#ff0259"/><stop offset="1.0000" stop-color="#ff003b"/></linearGradient><linearGradient id="r173" gradientUnits="userSpaceOnUse" x1="1385" y1="0" x2="1744" y2="0"><stop offset="0.0000" stop-color="#00b2ff"/><stop offset="0.0625" stop-color="#03a6ff"/><stop offset="0.1250" stop-color="#389aff"/><stop offset="0.2500" stop-color="#a780ff"/><stop offset="0.3125" stop-color="#e273ff"/><stop offset="0.3438" stop-color="#ff6bfd"/><stop offset="0.3750" stop-color="#ff59e2"/><stop offset="0.5000" stop-color="#ff2b9c"/><stop offset="0.6250" stop-color="#ff1175"/><stop offset="0.7500" stop-color="#ff015b"/><stop offset="1.0000" stop-color="#ff003d"/></linearGradient><linearGradient id="r174" gradientUnits="userSpaceOnUse" x1="1385" y1="0" x2="1744" y2="0"><stop offset="0.0000" stop-color="#00acff"/><stop offset="0.0625" stop-color="#02a1ff"/><stop offset="0.1250" stop-color="#3695ff"/><stop offset="0.2500" stop-color="#a27bff"/><stop offset="0.3125" stop-color="#dc6eff"/><stop offset="0.3438" stop-color="#f967ff"/><stop offset="0.3750" stop-color="#ff58e9"/><stop offset="0.5000" stop-color="#ff2aa1"/><stop offset="0.6250" stop-color="#ff1078"/><stop offset="0.7500" stop-color="#ff005e"/><stop offset="1.0000" stop-color="#ff003f"/></linearGradient><linearGradient id="r175" gradientUnits="userSpaceOnUse" x1="1385" y1="0" x2="1744" y2="0"><stop offset="0.0000" stop-color="#00a7ff"/><stop offset="0.0625" stop-color="#019bff"/><stop offset="0.1250" stop-color="#338fff"/><stop offset="0.2500" stop-color="#9d76ff"/><stop offset="0.3125" stop-color="#d569ff"/><stop offset="0.3438" stop-color="#f263ff"/><stop offset="0.3594" stop-color="#ff5ffe"/><stop offset="0.3750" stop-color="#ff56f0"/><stop offset="0.4375" stop-color="#ff3cc4"/><stop offset="0.5000" stop-color="#ff29a5"/><stop offset="0.6250" stop-color="#ff0f7c"/><stop offset="0.7500" stop-color="#ff0061"/><stop offset="1.0000" stop-color="#ff0041"/></linearGradient><linearGradient id="r176" gradientUnits="userSpaceOnUse" x1="1385" y1="0" x2="1744" y2="0"><stop offset="0.0000" stop-color="#00a1ff"/><stop offset="0.0625" stop-color="#0096ff"/><stop offset="0.1250" stop-color="#318aff"/><stop offset="0.2500" stop-color="#9972ff"/><stop offset="0.3125" stop-color="#cf65ff"/><stop offset="0.3438" stop-color="#eb5eff"/><stop offset="0.3750" stop-color="#ff55f7"/><stop offset="0.4375" stop-color="#ff3aca"/><stop offset="0.5000" stop-color="#ff28aa"/><stop offset="0.6250" stop-color="#ff0e7f"/><stop offset="0.7500" stop-color="#ff0064"/><stop offset="1.0000" stop-color="#ff0043"/></linearGradient><linearGradient id="r177" gradientUnits="userSpaceOnUse" x1="1385" y1="0" x2="1744" y2="0"><stop offset="0.0000" stop-color="#009cff"/><stop offset="0.0625" stop-color="#0091ff"/><stop offset="0.1250" stop-color="#2f86ff"/><stop offset="0.2500" stop-color="#946eff"/><stop offset="0.3750" stop-color="#ff53fe"/><stop offset="0.4375" stop-color="#ff39d0"/><stop offset="0.5000" stop-color="#ff26af"/><stop offset="0.6250" stop-color="#ff0d83"/><stop offset="0.7500" stop-color="#ff0067"/><stop offset="1.0000" stop-color="#ff0046"/></linearGradient><linearGradient id="r178" gradientUnits="userSpaceOnUse" x1="1385" y1="0" x2="1744" y2="0"><stop offset="0.0000" stop-color="#0097ff"/><stop offset="0.0625" stop-color="#008dff"/><stop offset="0.1250" stop-color="#2d81ff"/><stop offset="0.2500" stop-color="#9069ff"/><stop offset="0.3750" stop-color="#f950ff"/><stop offset="0.5000" stop-color="#ff25b3"/><stop offset="0.6250" stop-color="#ff0c86"/><stop offset="0.7500" stop-color="#ff006a"/><stop offset="1.0000" stop-color="#ff0048"/></linearGradient><linearGradient id="r179" gradientUnits="userSpaceOnUse" x1="1385" y1="0" x2="1744" y2="0"><stop offset="0.0000" stop-color="#0093ff"/><stop offset="0.0625" stop-color="#0088ff"/><stop offset="0.1250" stop-color="#2b7dff"/><stop offset="0.2500" stop-color="#8c65ff"/><stop offset="0.3750" stop-color="#f34dff"/><stop offset="0.3906" stop-color="#ff49fe"/><stop offset="0.4062" stop-color="#ff42f1"/><stop offset="0.4375" stop-color="#ff36db"/><stop offset="0.5000" stop-color="#ff24b8"/><stop offset="0.6250" stop-color="#ff0b8a"/><stop offset="0.7500" stop-color="#ff006d"/><stop offset="1.0000" stop-color="#ff004a"/></linearGradient><linearGradient id="r180" gradientUnits="userSpaceOnUse" x1="1385" y1="0" x2="1744" y2="0"><stop offset="0.0000" stop-color="#008eff"/><stop offset="0.0625" stop-color="#0084ff"/><stop offset="0.1250" stop-color="#2a79ff"/><stop offset="0.2500" stop-color="#8862ff"/><stop offset="0.3750" stop-color="#ed49ff"/><stop offset="0.4062" stop-color="#ff41f7"/><stop offset="0.4375" stop-color="#ff35e1"/><stop offset="0.5000" stop-color="#ff23bd"/><stop offset="0.6250" stop-color="#ff0b8e"/><stop offset="0.7500" stop-color="#ff0070"/><stop offset="1.0000" stop-color="#ff004c"/></linearGradient><linearGradient id="r181" gradientUnits="userSpaceOnUse" x1="1385" y1="0" x2="1744" y2="0"><stop offset="0.0000" stop-color="#008aff"/><stop offset="0.0625" stop-color="#0080ff"/><stop offset="0.1250" stop-color="#2875ff"/><stop offset="0.2500" stop-color="#845eff"/><stop offset="0.3750" stop-color="#e746ff"/><stop offset="0.4062" stop-color="#ff3ffe"/><stop offset="0.4375" stop-color="#ff34e6"/><stop offset="0.5000" stop-color="#ff22c2"/><stop offset="0.6250" stop-color="#ff0a91"/><stop offset="0.7500" stop-color="#ff0073"/><stop offset="1.0000" stop-color="#ff004e"/></linearGradient><linearGradient id="r182" gradientUnits="userSpaceOnUse" x1="1385" y1="0" x2="1744" y2="0"><stop offset="0.0000" stop-color="#0086ff"/><stop offset="0.0625" stop-color="#007cff"/><stop offset="0.1250" stop-color="#2671ff"/><stop offset="0.2500" stop-color="#815bff"/><stop offset="0.3750" stop-color="#e143ff"/><stop offset="0.4062" stop-color="#fa3dff"/><stop offset="0.4375" stop-color="#ff32ec"/><stop offset="0.5000" stop-color="#ff20c7"/><stop offset="0.6250" stop-color="#ff0995"/><stop offset="0.7500" stop-color="#ff0075"/><stop offset="1.0000" stop-color="#ff0050"/></linearGradient><linearGradient id="r183" gradientUnits="userSpaceOnUse" x1="1385" y1="0" x2="1744" y2="0"><stop offset="0.0000" stop-color="#0082ff"/><stop offset="0.0625" stop-color="#0078ff"/><stop offset="0.1250" stop-color="#256dff"/><stop offset="0.2500" stop-color="#7d57ff"/><stop offset="0.3750" stop-color="#db40ff"/><stop offset="0.4062" stop-color="#f43aff"/><stop offset="0.4375" stop-color="#ff31f2"/><stop offset="0.5000" stop-color="#ff1fcc"/><stop offset="0.6250" stop-color="#ff0899"/><stop offset="0.7500" stop-color="#ff0078"/><stop offset="1.0000" stop-color="#ff0052"/></linearGradient><linearGradient id="r184" gradientUnits="userSpaceOnUse" x1="1385" y1="0" x2="1744" y2="0"><stop offset="0.0000" stop-color="#007eff"/><stop offset="0.0625" stop-color="#0074ff"/><stop offset="0.1250" stop-color="#236aff"/><stop offset="0.2500" stop-color="#7a54ff"/><stop offset="0.3750" stop-color="#d63dff"/><stop offset="0.4375" stop-color="#ff30f8"/><stop offset="0.5000" stop-color="#ff1ed1"/><stop offset="0.6250" stop-color="#ff079c"/><stop offset="0.7500" stop-color="#ff007b"/><stop offset="1.0000" stop-color="#ff0054"/></linearGradient><linearGradient id="r185" gradientUnits="userSpaceOnUse" x1="1385" y1="0" x2="1744" y2="0"><stop offset="0.0000" stop-color="#007aff"/><stop offset="0.0625" stop-color="#0070ff"/><stop offset="0.1250" stop-color="#2266ff"/><stop offset="0.2500" stop-color="#7751ff"/><stop offset="0.3750" stop-color="#d13aff"/><stop offset="0.4375" stop-color="#ff2efe"/><stop offset="0.5000" stop-color="#ff1dd5"/><stop offset="0.6250" stop-color="#ff06a0"/><stop offset="0.7500" stop-color="#ff007e"/><stop offset="1.0000" stop-color="#ff0056"/></linearGradient><linearGradient id="r186" gradientUnits="userSpaceOnUse" x1="1385" y1="0" x2="1744" y2="0"><stop offset="0.0000" stop-color="#0077ff"/><stop offset="0.0625" stop-color="#006dff"/><stop offset="0.0938" stop-color="#0c68ff"/><stop offset="0.1250" stop-color="#2063ff"/><stop offset="0.2500" stop-color="#744eff"/><stop offset="0.3750" stop-color="#cc38ff"/><stop offset="0.4375" stop-color="#fa2cff"/><stop offset="0.5000" stop-color="#ff1bda"/><stop offset="0.6250" stop-color="#ff05a4"/><stop offset="0.7500" stop-color="#ff0081"/><stop offset="1.0000" stop-color="#ff0058"/></linearGradient><linearGradient id="r187" gradientUnits="userSpaceOnUse" x1="1385" y1="0" x2="1744" y2="0"><stop offset="0.0000" stop-color="#0073ff"/><stop offset="0.0625" stop-color="#006aff"/><stop offset="0.0938" stop-color="#0b65ff"/><stop offset="0.1250" stop-color="#1f60ff"/><stop offset="0.2500" stop-color="#714bff"/><stop offset="0.3750" stop-color="#c735ff"/><stop offset="0.4375" stop-color="#f42aff"/><stop offset="0.4688" stop-color="#ff22f3"/><stop offset="0.5000" stop-color="#ff1adf"/><stop offset="0.6250" stop-color="#ff04a8"/><stop offset="0.7500" stop-color="#ff0084"/><stop offset="1.0000" stop-color="#ff005b"/></linearGradient><linearGradient id="r188" gradientUnits="userSpaceOnUse" x1="1385" y1="0" x2="1744" y2="0"><stop offset="0.0000" stop-color="#0070ff"/><stop offset="0.0625" stop-color="#0067ff"/><stop offset="0.0938" stop-color="#0a62ff"/><stop offset="0.1250" stop-color="#1d5dff"/><stop offset="0.2500" stop-color="#6e48ff"/><stop offset="0.3750" stop-color="#c333ff"/><stop offset="0.4375" stop-color="#ef27ff"/><stop offset="0.4688" stop-color="#ff21f9"/><stop offset="0.5000" stop-color="#ff19e5"/><stop offset="0.6250" stop-color="#ff02ab"/><stop offset="0.7500" stop-color="#ff0087"/><stop offset="1.0000" stop-color="#ff005d"/></linearGradient><linearGradient id="r189" gradientUnits="userSpaceOnUse" x1="1385" y1="0" x2="1744" y2="0"><stop offset="0.0000" stop-color="#006dff"/><stop offset="0.0625" stop-color="#0063ff"/><stop offset="0.0938" stop-color="#095fff"/><stop offset="0.1250" stop-color="#1c5aff"/><stop offset="0.2500" stop-color="#6b46ff"/><stop offset="0.3750" stop-color="#be30ff"/><stop offset="0.4375" stop-color="#ea25ff"/><stop offset="0.4688" stop-color="#ff20fe"/><stop offset="0.5000" stop-color="#ff18ea"/><stop offset="0.6250" stop-color="#ff01af"/><stop offset="0.7500" stop-color="#ff008a"/><stop offset="1.0000" stop-color="#ff005f"/></linearGradient><linearGradient id="r190" gradientUnits="userSpaceOnUse" x1="1385" y1="0" x2="1744" y2="0"><stop offset="0.0000" stop-color="#006aff"/><stop offset="0.0625" stop-color="#0060ff"/><stop offset="0.0938" stop-color="#085cff"/><stop offset="0.1250" stop-color="#1b57ff"/><stop offset="0.2500" stop-color="#6843ff"/><stop offset="0.3750" stop-color="#ba2eff"/><stop offset="0.4375" stop-color="#e523ff"/><stop offset="0.4688" stop-color="#fa1eff"/><stop offset="0.5000" stop-color="#ff16ef"/><stop offset="0.6250" stop-color="#ff00b3"/><stop offset="0.7500" stop-color="#ff008d"/><stop offset="1.0000" stop-color="#ff0061"/></linearGradient><linearGradient id="r191" gradientUnits="userSpaceOnUse" x1="1385" y1="0" x2="1744" y2="0"><stop offset="0.0000" stop-color="#0067ff"/><stop offset="0.0625" stop-color="#005eff"/><stop offset="0.0938" stop-color="#0759ff"/><stop offset="0.1250" stop-color="#1a54ff"/><stop offset="0.2500" stop-color="#6641ff"/><stop offset="0.3750" stop-color="#b62cff"/><stop offset="0.4375" stop-color="#e021ff"/><stop offset="0.4688" stop-color="#f51cff"/><stop offset="0.5000" stop-color="#ff15f4"/><stop offset="0.6250" stop-color="#ff00b7"/><stop offset="0.7500" stop-color="#ff0090"/><stop offset="1.0000" stop-color="#ff0063"/></linearGradient><linearGradient id="r192" gradientUnits="userSpaceOnUse" x1="1385" y1="0" x2="1744" y2="0"><stop offset="0.0000" stop-color="#0064ff"/><stop offset="0.0625" stop-color="#005bff"/><stop offset="0.0938" stop-color="#0656ff"/><stop offset="0.1250" stop-color="#1952ff"/><stop offset="0.2500" stop-color="#633eff"/><stop offset="0.5000" stop-color="#ff14f9"/><stop offset="0.6250" stop-color="#ff00bb"/><stop offset="0.7500" stop-color="#ff0093"/><stop offset="1.0000" stop-color="#ff0065"/></linearGradient><linearGradient id="r193" gradientUnits="userSpaceOnUse" x1="1385" y1="0" x2="1744" y2="0"><stop offset="0.0000" stop-color="#0061ff"/><stop offset="0.0625" stop-color="#0058ff"/><stop offset="0.0938" stop-color="#0654ff"/><stop offset="0.1250" stop-color="#174fff"/><stop offset="0.2500" stop-color="#613cff"/><stop offset="0.5000" stop-color="#ff13fe"/><stop offset="0.6250" stop-color="#ff00be"/><stop offset="0.7500" stop-color="#ff0097"/><stop offset="1.0000" stop-color="#ff0067"/></linearGradient><linearGradient id="r194" gradientUnits="userSpaceOnUse" x1="1385" y1="0" x2="1744" y2="0"><stop offset="0.0000" stop-color="#005eff"/><stop offset="0.0625" stop-color="#0056ff"/><stop offset="0.0938" stop-color="#0551ff"/><stop offset="0.1250" stop-color="#164cff"/><stop offset="0.2500" stop-color="#5f3aff"/><stop offset="0.5000" stop-color="#fb11ff"/><stop offset="0.6250" stop-color="#ff00c2"/><stop offset="0.7500" stop-color="#ff009a"/><stop offset="1.0000" stop-color="#ff006a"/></linearGradient><linearGradient id="r195" gradientUnits="userSpaceOnUse" x1="1385" y1="0" x2="1744" y2="0"><stop offset="0.0000" stop-color="#005cff"/><stop offset="0.0625" stop-color="#0053ff"/><stop offset="0.0938" stop-color="#044fff"/><stop offset="0.1250" stop-color="#154aff"/><stop offset="0.2500" stop-color="#5c37ff"/><stop offset="0.5000" stop-color="#f60fff"/><stop offset="0.5312" stop-color="#ff0af5"/><stop offset="0.5625" stop-color="#ff04e3"/><stop offset="0.6250" stop-color="#ff00c6"/><stop offset="0.7500" stop-color="#ff009d"/><stop offset="1.0000" stop-color="#ff006c"/></linearGradient><linearGradient id="r196" gradientUnits="userSpaceOnUse" x1="1385" y1="0" x2="1744" y2="0"><stop offset="0.0000" stop-color="#0059ff"/><stop offset="0.0625" stop-color="#0051ff"/><stop offset="0.0938" stop-color="#034cff"/><stop offset="0.1250" stop-color="#1448ff"/><stop offset="0.2500" stop-color="#5a35ff"/><stop offset="0.5000" stop-color="#f10eff"/><stop offset="0.5312" stop-color="#ff08f9"/><stop offset="0.5625" stop-color="#ff03e8"/><stop offset="0.6250" stop-color="#ff00ca"/><stop offset="0.7500" stop-color="#ff00a0"/><stop offset="1.0000" stop-color="#ff006e"/></linearGradient><linearGradient id="r197" gradientUnits="userSpaceOnUse" x1="1385" y1="0" x2="1744" y2="0"><stop offset="0.0000" stop-color="#0057ff"/><stop offset="0.0625" stop-color="#004eff"/><stop offset="0.0938" stop-color="#034aff"/><stop offset="0.1250" stop-color="#1345ff"/><stop offset="0.2500" stop-color="#5833ff"/><stop offset="0.5000" stop-color="#ec0cff"/><stop offset="0.5312" stop-color="#ff07fe"/><stop offset="0.5625" stop-color="#ff02ec"/><stop offset="0.6250" stop-color="#ff00ce"/><stop offset="0.7500" stop-color="#ff00a3"/><stop offset="1.0000" stop-color="#ff0070"/></linearGradient><linearGradient id="r198" gradientUnits="userSpaceOnUse" x1="1385" y1="0" x2="1744" y2="0"><stop offset="0.0000" stop-color="#0054ff"/><stop offset="0.0625" stop-color="#004cff"/><stop offset="0.0938" stop-color="#0248ff"/><stop offset="0.1250" stop-color="#1243ff"/><stop offset="0.2500" stop-color="#5631ff"/><stop offset="0.5000" stop-color="#e80bff"/><stop offset="0.5312" stop-color="#fb06ff"/><stop offset="0.5625" stop-color="#ff01f1"/><stop offset="0.6250" stop-color="#ff00d2"/><stop offset="0.7500" stop-color="#ff00a6"/><stop offset="1.0000" stop-color="#ff0072"/></linearGradient><linearGradient id="r199" gradientUnits="userSpaceOnUse" x1="1385" y1="0" x2="1744" y2="0"><stop offset="0.0000" stop-color="#0052ff"/><stop offset="0.0625" stop-color="#004aff"/><stop offset="0.0938" stop-color="#0145ff"/><stop offset="0.1250" stop-color="#1141ff"/><stop offset="0.2500" stop-color="#542fff"/><stop offset="0.5000" stop-color="#e30aff"/><stop offset="0.5312" stop-color="#f605ff"/><stop offset="0.5625" stop-color="#ff00f5"/><stop offset="0.6250" stop-color="#ff00d6"/><stop offset="0.7500" stop-color="#ff00a9"/><stop offset="1.0000" stop-color="#ff0074"/></linearGradient><linearGradient id="r200" gradientUnits="userSpaceOnUse" x1="1385" y1="0" x2="1744" y2="0"><stop offset="0.0000" stop-color="#0050ff"/><stop offset="0.0625" stop-color="#0047ff"/><stop offset="0.0938" stop-color="#0143ff"/><stop offset="0.1250" stop-color="#113fff"/><stop offset="0.2500" stop-color="#522eff"/><stop offset="0.5000" stop-color="#df08ff"/><stop offset="0.5625" stop-color="#ff00fa"/><stop offset="0.6250" stop-color="#ff00da"/><stop offset="0.7500" stop-color="#ff00ac"/><stop offset="1.0000" stop-color="#ff0077"/></linearGradient><linearGradient id="r201" gradientUnits="userSpaceOnUse" x1="1385" y1="0" x2="1744" y2="0"><stop offset="0.0000" stop-color="#004dff"/><stop offset="0.0625" stop-color="#0045ff"/><stop offset="0.0938" stop-color="#0041ff"/><stop offset="0.1250" stop-color="#103dff"/><stop offset="0.2500" stop-color="#502cff"/><stop offset="0.5000" stop-color="#db07ff"/><stop offset="0.5625" stop-color="#ff00fe"/><stop offset="0.6250" stop-color="#ff00de"/><stop offset="0.7500" stop-color="#ff00af"/><stop offset="1.0000" stop-color="#ff0079"/></linearGradient><linearGradient id="r202" gradientUnits="userSpaceOnUse" x1="1385" y1="0" x2="1744" y2="0"><stop offset="0.0000" stop-color="#004bff"/><stop offset="0.0625" stop-color="#0043ff"/><stop offset="0.0938" stop-color="#003fff"/><stop offset="0.1250" stop-color="#0f3bff"/><stop offset="0.2500" stop-color="#4f2aff"/><stop offset="0.5000" stop-color="#d706ff"/><stop offset="0.5625" stop-color="#fb00ff"/><stop offset="0.6250" stop-color="#ff00e2"/><stop offset="0.7500" stop-color="#ff00b3"/><stop offset="1.0000" stop-color="#ff007b"/></linearGradient><linearGradient id="r203" gradientUnits="userSpaceOnUse" x1="1385" y1="0" x2="1744" y2="0"><stop offset="0.0000" stop-color="#0049ff"/><stop offset="0.0625" stop-color="#0041ff"/><stop offset="0.0938" stop-color="#003dff"/><stop offset="0.1250" stop-color="#0e39ff"/><stop offset="0.2500" stop-color="#4d28ff"/><stop offset="0.5000" stop-color="#d304ff"/><stop offset="0.5625" stop-color="#f700ff"/><stop offset="0.5938" stop-color="#ff00f6"/><stop offset="0.6250" stop-color="#ff00e6"/><stop offset="0.7500" stop-color="#ff00b6"/><stop offset="1.0000" stop-color="#ff007d"/></linearGradient><linearGradient id="r204" gradientUnits="userSpaceOnUse" x1="1385" y1="0" x2="1744" y2="0"><stop offset="0.0000" stop-color="#0047ff"/><stop offset="0.0625" stop-color="#003fff"/><stop offset="0.0938" stop-color="#003bff"/><stop offset="0.1250" stop-color="#0d37ff"/><stop offset="0.2500" stop-color="#4b27ff"/><stop offset="0.5000" stop-color="#cf03ff"/><stop offset="0.5625" stop-color="#f200ff"/><stop offset="0.5938" stop-color="#ff00fa"/><stop offset="0.6250" stop-color="#ff00ea"/><stop offset="0.7500" stop-color="#ff00b9"/><stop offset="1.0000" stop-color="#ff0080"/></linearGradient><linearGradient id="r205" gradientUnits="userSpaceOnUse" x1="1385" y1="0" x2="1744" y2="0"><stop offset="0.0000" stop-color="#0045ff"/><stop offset="0.0625" stop-color="#003dff"/><stop offset="0.0938" stop-color="#0039ff"/><stop offset="0.1250" stop-color="#0c35ff"/><stop offset="0.2500" stop-color="#4a25ff"/><stop offset="0.5000" stop-color="#cc02ff"/><stop offset="0.5625" stop-color="#ee00ff"/><stop offset="0.5938" stop-color="#ff00ff"/><stop offset="0.6250" stop-color="#ff00ee"/><stop offset="0.7500" stop-color="#ff00bc"/><stop offset="1.0000" stop-color="#ff0082"/></linearGradient><linearGradient id="r206" gradientUnits="userSpaceOnUse" x1="1385" y1="0" x2="1744" y2="0"><stop offset="0.0000" stop-color="#0043ff"/><stop offset="0.0625" stop-color="#003cff"/><stop offset="0.1250" stop-color="#0c34ff"/><stop offset="0.2500" stop-color="#4823ff"/><stop offset="0.5000" stop-color="#c801ff"/><stop offset="0.5625" stop-color="#ea00ff"/><stop offset="0.5938" stop-color="#fb00ff"/><stop offset="0.6250" stop-color="#ff00f2"/><stop offset="0.7500" stop-color="#ff00bf"/><stop offset="1.0000" stop-color="#ff0084"/></linearGradient><linearGradient id="r207" gradientUnits="userSpaceOnUse" x1="1385" y1="0" x2="1744" y2="0"><stop offset="0.0000" stop-color="#0041ff"/><stop offset="0.0625" stop-color="#003aff"/><stop offset="0.1250" stop-color="#0b32ff"/><stop offset="0.2500" stop-color="#4622ff"/><stop offset="0.5000" stop-color="#c500ff"/><stop offset="0.5625" stop-color="#e600ff"/><stop offset="0.5938" stop-color="#f700ff"/><stop offset="0.6250" stop-color="#ff00f6"/><stop offset="0.7500" stop-color="#ff00c3"/><stop offset="1.0000" stop-color="#ff0086"/></linearGradient><linearGradient id="r208" gradientUnits="userSpaceOnUse" x1="1385" y1="0" x2="1744" y2="0"><stop offset="0.0000" stop-color="#0040ff"/><stop offset="0.0625" stop-color="#0038ff"/><stop offset="0.1250" stop-color="#0a30ff"/><stop offset="0.2500" stop-color="#4520ff"/><stop offset="0.5000" stop-color="#c100ff"/><stop offset="0.6250" stop-color="#ff00fa"/><stop offset="0.7500" stop-color="#ff00c6"/><stop offset="1.0000" stop-color="#ff0089"/></linearGradient><linearGradient id="r209" gradientUnits="userSpaceOnUse" x1="1385" y1="0" x2="1744" y2="0"><stop offset="0.0000" stop-color="#003eff"/><stop offset="0.0625" stop-color="#0036ff"/><stop offset="0.1250" stop-color="#092fff"/><stop offset="0.2500" stop-color="#431fff"/><stop offset="0.5000" stop-color="#be00ff"/><stop offset="0.6250" stop-color="#ff00ff"/><stop offset="0.7500" stop-color="#ff00c9"/><stop offset="1.0000" stop-color="#ff008b"/></linearGradient><linearGradient id="r210" gradientUnits="userSpaceOnUse" x1="1385" y1="0" x2="1744" y2="0"><stop offset="0.0000" stop-color="#003cff"/><stop offset="0.0625" stop-color="#0035ff"/><stop offset="0.1250" stop-color="#092dff"/><stop offset="0.2500" stop-color="#421eff"/><stop offset="0.5000" stop-color="#bb00ff"/><stop offset="0.6250" stop-color="#fb00ff"/><stop offset="0.7500" stop-color="#ff00cc"/><stop offset="1.0000" stop-color="#ff008d"/></linearGradient><linearGradient id="r211" gradientUnits="userSpaceOnUse" x1="1385" y1="0" x2="1744" y2="0"><stop offset="0.0000" stop-color="#003aff"/><stop offset="0.0625" stop-color="#0033ff"/><stop offset="0.1250" stop-color="#082cff"/><stop offset="0.2500" stop-color="#401cff"/><stop offset="0.5000" stop-color="#b800ff"/><stop offset="0.6250" stop-color="#f700ff"/><stop offset="0.7500" stop-color="#ff00d0"/><stop offset="1.0000" stop-color="#ff008f"/></linearGradient><linearGradient id="r212" gradientUnits="userSpaceOnUse" x1="1385" y1="0" x2="1744" y2="0"><stop offset="0.0000" stop-color="#0039ff"/><stop offset="0.1250" stop-color="#072aff"/><stop offset="0.2500" stop-color="#3f1bff"/><stop offset="0.5000" stop-color="#b500ff"/><stop offset="0.6250" stop-color="#f300ff"/><stop offset="0.6875" stop-color="#ff00ec"/><stop offset="0.7500" stop-color="#ff00d3"/><stop offset="1.0000" stop-color="#ff0092"/></linearGradient><linearGradient id="r213" gradientUnits="userSpaceOnUse" x1="1385" y1="0" x2="1744" y2="0"><stop offset="0.0000" stop-color="#0037ff"/><stop offset="0.1250" stop-color="#0729ff"/><stop offset="0.2500" stop-color="#3e1aff"/><stop offset="0.5000" stop-color="#b200ff"/><stop offset="0.6250" stop-color="#f000ff"/><stop offset="0.6562" stop-color="#ff00ff"/><stop offset="0.6875" stop-color="#ff00f0"/><stop offset="0.7500" stop-color="#ff00d6"/><stop offset="1.0000" stop-color="#ff0094"/></linearGradient><linearGradient id="r214" gradientUnits="userSpaceOnUse" x1="1385" y1="0" x2="1744" y2="0"><stop offset="0.0000" stop-color="#0036ff"/><stop offset="0.1250" stop-color="#0627ff"/><stop offset="0.2500" stop-color="#3c18ff"/><stop offset="0.5000" stop-color="#af00ff"/><stop offset="0.6250" stop-color="#ec00ff"/><stop offset="0.6875" stop-color="#ff00f3"/><stop offset="0.7500" stop-color="#ff00da"/><stop offset="1.0000" stop-color="#ff0096"/></linearGradient><linearGradient id="r215" gradientUnits="userSpaceOnUse" x1="1385" y1="0" x2="1744" y2="0"><stop offset="0.0000" stop-color="#0034ff"/><stop offset="0.1250" stop-color="#0626ff"/><stop offset="0.2500" stop-color="#3b17ff"/><stop offset="0.5000" stop-color="#ac00ff"/><stop offset="0.6250" stop-color="#e800ff"/><stop offset="0.6875" stop-color="#ff00f7"/><stop offset="0.7500" stop-color="#ff00dd"/><stop offset="1.0000" stop-color="#ff0098"/></linearGradient><linearGradient id="r216" gradientUnits="userSpaceOnUse" x1="1385" y1="0" x2="1744" y2="0"><stop offset="0.0000" stop-color="#0033ff"/><stop offset="0.1250" stop-color="#0524ff"/><stop offset="0.2500" stop-color="#3a16ff"/><stop offset="0.5000" stop-color="#aa00ff"/><stop offset="0.6250" stop-color="#e500ff"/><stop offset="0.6875" stop-color="#ff00fb"/><stop offset="0.7500" stop-color="#ff00e0"/><stop offset="1.0000" stop-color="#ff009b"/></linearGradient><linearGradient id="r217" gradientUnits="userSpaceOnUse" x1="1385" y1="0" x2="1744" y2="0"><stop offset="0.0000" stop-color="#0031ff"/><stop offset="0.1250" stop-color="#0423ff"/><stop offset="0.2500" stop-color="#3915ff"/><stop offset="0.5000" stop-color="#a700ff"/><stop offset="0.6250" stop-color="#e100ff"/><stop offset="0.6875" stop-color="#ff00ff"/><stop offset="0.7500" stop-color="#ff00e4"/><stop offset="1.0000" stop-color="#ff009d"/></linearGradient><linearGradient id="r218" gradientUnits="userSpaceOnUse" x1="1385" y1="0" x2="1744" y2="0"><stop offset="0.0000" stop-color="#0030ff"/><stop offset="0.1250" stop-color="#0422ff"/><stop offset="0.2500" stop-color="#3814ff"/><stop offset="0.5000" stop-color="#a400ff"/><stop offset="0.6250" stop-color="#de00ff"/><stop offset="0.6875" stop-color="#fb00ff"/><stop offset="0.7500" stop-color="#ff00e7"/><stop offset="1.0000" stop-color="#ff009f"/></linearGradient><linearGradient id="r219" gradientUnits="userSpaceOnUse" x1="1385" y1="0" x2="1744" y2="0"><stop offset="0.0000" stop-color="#002eff"/><stop offset="0.1250" stop-color="#0321ff"/><stop offset="0.2500" stop-color="#3612ff"/><stop offset="0.5000" stop-color="#a200ff"/><stop offset="0.6250" stop-color="#db00ff"/><stop offset="0.6875" stop-color="#f800ff"/><stop offset="0.7500" stop-color="#ff00ea"/><stop offset="1.0000" stop-color="#ff00a2"/></linearGradient><linearGradient id="r220" gradientUnits="userSpaceOnUse" x1="1385" y1="0" x2="1744" y2="0"><stop offset="0.0000" stop-color="#002dff"/><stop offset="0.1250" stop-color="#031fff"/><stop offset="0.2500" stop-color="#3511ff"/><stop offset="0.5000" stop-color="#9f00ff"/><stop offset="0.6250" stop-color="#d700ff"/><stop offset="0.6875" stop-color="#f400ff"/><stop offset="0.7500" stop-color="#ff00ee"/><stop offset="0.8750" stop-color="#ff00c3"/><stop offset="1.0000" stop-color="#ff00a4"/></linearGradient><linearGradient id="r221" gradientUnits="userSpaceOnUse" x1="1385" y1="0" x2="1744" y2="0"><stop offset="0.0000" stop-color="#002bff"/><stop offset="0.1250" stop-color="#021eff"/><stop offset="0.2500" stop-color="#3410ff"/><stop offset="0.3750" stop-color="#6802ff"/><stop offset="0.5000" stop-color="#9d00ff"/><stop offset="0.6250" stop-color="#d400ff"/><stop offset="0.6875" stop-color="#f100ff"/><stop offset="0.7188" stop-color="#ff00ff"/><stop offset="0.7500" stop-color="#ff00f1"/><stop offset="0.8750" stop-color="#ff00c6"/><stop offset="1.0000" stop-color="#ff00a6"/></linearGradient><linearGradient id="r222" gradientUnits="userSpaceOnUse" x1="1385" y1="0" x2="1744" y2="0"><stop offset="0.0000" stop-color="#002aff"/><stop offset="0.1250" stop-color="#021dff"/><stop offset="0.2500" stop-color="#330fff"/><stop offset="0.3750" stop-color="#6601ff"/><stop offset="0.5000" stop-color="#9b00ff"/><stop offset="0.6250" stop-color="#d100ff"/><stop offset="0.6875" stop-color="#ed00ff"/><stop offset="0.7500" stop-color="#ff00f5"/><stop offset="0.8750" stop-color="#ff00c8"/><stop offset="1.0000" stop-color="#ff00a9"/></linearGradient><linearGradient id="r223" gradientUnits="userSpaceOnUse" x1="1385" y1="0" x2="1744" y2="0"><stop offset="0.0000" stop-color="#0029ff"/><stop offset="0.1250" stop-color="#011cff"/><stop offset="0.2500" stop-color="#320eff"/><stop offset="0.3750" stop-color="#6400ff"/><stop offset="0.5000" stop-color="#9800ff"/><stop offset="0.7500" stop-color="#ff00f8"/><stop offset="0.8750" stop-color="#ff00cb"/><stop offset="1.0000" stop-color="#ff00ab"/></linearGradient><linearGradient id="r224" gradientUnits="userSpaceOnUse" x1="1385" y1="0" x2="1744" y2="0"><stop offset="0.0000" stop-color="#0028ff"/><stop offset="0.1250" stop-color="#011bff"/><stop offset="0.2500" stop-color="#310dff"/><stop offset="0.3750" stop-color="#6300ff"/><stop offset="0.5000" stop-color="#9600ff"/><stop offset="0.7500" stop-color="#ff00fb"/><stop offset="0.8750" stop-color="#ff00ce"/><stop offset="1.0000" stop-color="#ff00ad"/></linearGradient><linearGradient id="r225" gradientUnits="userSpaceOnUse" x1="1385" y1="0" x2="1744" y2="0"><stop offset="0.0000" stop-color="#0026ff"/><stop offset="0.1250" stop-color="#0019ff"/><stop offset="0.2500" stop-color="#300cff"/><stop offset="0.3750" stop-color="#6100ff"/><stop offset="0.5000" stop-color="#9400ff"/><stop offset="0.7500" stop-color="#ff00ff"/><stop offset="0.8750" stop-color="#ff00d1"/><stop offset="1.0000" stop-color="#ff00b0"/></linearGradient><linearGradient id="r226" gradientUnits="userSpaceOnUse" x1="1385" y1="0" x2="1744" y2="0"><stop offset="0.0000" stop-color="#0025ff"/><stop offset="0.1250" stop-color="#0018ff"/><stop offset="0.2500" stop-color="#2f0bff"/><stop offset="0.5000" stop-color="#9200ff"/><stop offset="0.7500" stop-color="#fc00ff"/><stop offset="1.0000" stop-color="#ff00b2"/></linearGradient><linearGradient id="r227" gradientUnits="userSpaceOnUse" x1="1385" y1="0" x2="1744" y2="0"><stop offset="0.0000" stop-color="#0024ff"/><stop offset="0.1250" stop-color="#0017ff"/><stop offset="0.2500" stop-color="#2e0aff"/><stop offset="0.5000" stop-color="#9000ff"/><stop offset="0.7500" stop-color="#f800ff"/><stop offset="1.0000" stop-color="#ff00b5"/></linearGradient><linearGradient id="r228" gradientUnits="userSpaceOnUse" x1="1385" y1="0" x2="1744" y2="0"><stop offset="0.0000" stop-color="#0023ff"/><stop offset="0.1250" stop-color="#0016ff"/><stop offset="0.2500" stop-color="#2d09ff"/><stop offset="0.5000" stop-color="#8e00ff"/><stop offset="0.7500" stop-color="#f500ff"/><stop offset="0.8125" stop-color="#ff00ef"/><stop offset="0.8750" stop-color="#ff00d9"/><stop offset="1.0000" stop-color="#ff00b7"/></linearGradient><linearGradient id="r229" gradientUnits="userSpaceOnUse" x1="1385" y1="0" x2="1744" y2="0"><stop offset="0.0000" stop-color="#0022ff"/><stop offset="0.1250" stop-color="#0015ff"/><stop offset="0.2500" stop-color="#2c08ff"/><stop offset="0.5000" stop-color="#8c00ff"/><stop offset="0.7500" stop-color="#f200ff"/><stop offset="0.7812" stop-color="#ff00ff"/><stop offset="0.8125" stop-color="#ff00f2"/><stop offset="0.8750" stop-color="#ff00dc"/><stop offset="1.0000" stop-color="#ff00b9"/></linearGradient><linearGradient id="r230" gradientUnits="userSpaceOnUse" x1="1385" y1="0" x2="1744" y2="0"><stop offset="0.0000" stop-color="#0021ff"/><stop offset="0.1250" stop-color="#0014ff"/><stop offset="0.2500" stop-color="#2b08ff"/><stop offset="0.5000" stop-color="#8a00ff"/><stop offset="0.7500" stop-color="#ef00ff"/><stop offset="0.8125" stop-color="#ff00f5"/><stop offset="0.8750" stop-color="#ff00df"/><stop offset="1.0000" stop-color="#ff00bc"/></linearGradient><linearGradient id="r231" gradientUnits="userSpaceOnUse" x1="1385" y1="0" x2="1744" y2="0"><stop offset="0.0000" stop-color="#0020ff"/><stop offset="0.1250" stop-color="#0013ff"/><stop offset="0.2500" stop-color="#2a07ff"/><stop offset="0.5000" stop-color="#8800ff"/><stop offset="0.7500" stop-color="#ec00ff"/><stop offset="0.8125" stop-color="#ff00f9"/><stop offset="0.8750" stop-color="#ff00e2"/><stop offset="1.0000" stop-color="#ff00be"/></linearGradient><linearGradient id="r232" gradientUnits="userSpaceOnUse" x1="1385" y1="0" x2="1744" y2="0"><stop offset="0.0000" stop-color="#001eff"/><stop offset="0.1250" stop-color="#0012ff"/><stop offset="0.2500" stop-color="#2906ff"/><stop offset="0.5000" stop-color="#8600ff"/><stop offset="0.7500" stop-color="#e900ff"/><stop offset="0.8125" stop-color="#ff00fc"/><stop offset="0.8750" stop-color="#ff00e5"/><stop offset="1.0000" stop-color="#ff00c1"/></linearGradient><linearGradient id="r233" gradientUnits="userSpaceOnUse" x1="1385" y1="0" x2="1744" y2="0"><stop offset="0.0000" stop-color="#001dff"/><stop offset="0.1250" stop-color="#0011ff"/><stop offset="0.2500" stop-color="#2905ff"/><stop offset="0.5000" stop-color="#8400ff"/><stop offset="0.7500" stop-color="#e600ff"/><stop offset="0.8125" stop-color="#ff00ff"/><stop offset="0.8750" stop-color="#ff00e8"/><stop offset="1.0000" stop-color="#ff00c3"/></linearGradient><linearGradient id="r234" gradientUnits="userSpaceOnUse" x1="1385" y1="0" x2="1744" y2="0"><stop offset="0.0000" stop-color="#001cff"/><stop offset="0.1250" stop-color="#0010ff"/><stop offset="0.2500" stop-color="#2804ff"/><stop offset="0.5000" stop-color="#8200ff"/><stop offset="0.7500" stop-color="#e300ff"/><stop offset="0.8125" stop-color="#fc00ff"/><stop offset="0.8750" stop-color="#ff00ea"/><stop offset="1.0000" stop-color="#ff00c5"/></linearGradient><linearGradient id="r235" gradientUnits="userSpaceOnUse" x1="1385" y1="0" x2="1744" y2="0"><stop offset="0.0000" stop-color="#001bff"/><stop offset="0.1250" stop-color="#0010ff"/><stop offset="0.2500" stop-color="#2703ff"/><stop offset="0.5000" stop-color="#8100ff"/><stop offset="0.7500" stop-color="#e000ff"/><stop offset="0.8125" stop-color="#f900ff"/><stop offset="0.8750" stop-color="#ff00ed"/><stop offset="1.0000" stop-color="#ff00c8"/></linearGradient><linearGradient id="r236" gradientUnits="userSpaceOnUse" x1="1385" y1="0" x2="1744" y2="0"><stop offset="0.0000" stop-color="#001aff"/><stop offset="0.1250" stop-color="#000fff"/><stop offset="0.2500" stop-color="#2603ff"/><stop offset="0.5000" stop-color="#7f00ff"/><stop offset="0.7500" stop-color="#dd00ff"/><stop offset="0.8125" stop-color="#f600ff"/><stop offset="0.8750" stop-color="#ff00f0"/><stop offset="1.0000" stop-color="#ff00ca"/></linearGradient><linearGradient id="r237" gradientUnits="userSpaceOnUse" x1="1385" y1="0" x2="1744" y2="0"><stop offset="0.0000" stop-color="#0019ff"/><stop offset="0.1250" stop-color="#000eff"/><stop offset="0.2500" stop-color="#2502ff"/><stop offset="0.5000" stop-color="#7d00ff"/><stop offset="0.7500" stop-color="#db00ff"/><stop offset="0.8125" stop-color="#f300ff"/><stop offset="0.8438" stop-color="#ff00ff"/><stop offset="0.8750" stop-color="#ff00f3"/><stop offset="1.0000" stop-color="#ff00cd"/></linearGradient><linearGradient id="r238" gradientUnits="userSpaceOnUse" x1="1385" y1="0" x2="1744" y2="0"><stop offset="0.0000" stop-color="#0018ff"/><stop offset="0.1250" stop-color="#000dff"/><stop offset="0.2500" stop-color="#2501ff"/><stop offset="0.5000" stop-color="#7c00ff"/><stop offset="0.7500" stop-color="#d800ff"/><stop offset="0.8125" stop-color="#f000ff"/><stop offset="0.8750" stop-color="#ff00f6"/><stop offset="1.0000" stop-color="#ff00cf"/></linearGradient><linearGradient id="r239" gradientUnits="userSpaceOnUse" x1="1385" y1="0" x2="1744" y2="0"><stop offset="0.0000" stop-color="#0018ff"/><stop offset="0.1250" stop-color="#000cff"/><stop offset="0.2500" stop-color="#2400ff"/><stop offset="0.5000" stop-color="#7a00ff"/><stop offset="0.7500" stop-color="#d500ff"/><stop offset="0.8750" stop-color="#ff00f9"/><stop offset="1.0000" stop-color="#ff00d2"/></linearGradient><linearGradient id="r240" gradientUnits="userSpaceOnUse" x1="1385" y1="0" x2="1744" y2="0"><stop offset="0.0000" stop-color="#0017ff"/><stop offset="0.1250" stop-color="#000bff"/><stop offset="0.2500" stop-color="#2300ff"/><stop offset="0.5000" stop-color="#7800ff"/><stop offset="0.7500" stop-color="#d300ff"/><stop offset="0.8750" stop-color="#ff00fc"/><stop offset="1.0000" stop-color="#ff00d4"/></linearGradient><linearGradient id="r241" gradientUnits="userSpaceOnUse" x1="1385" y1="0" x2="1744" y2="0"><stop offset="0.0000" stop-color="#0016ff"/><stop offset="0.1250" stop-color="#000aff"/><stop offset="0.2500" stop-color="#2200ff"/><stop offset="0.5000" stop-color="#7700ff"/><stop offset="0.7500" stop-color="#d000ff"/><stop offset="0.8750" stop-color="#ff00ff"/><stop offset="1.0000" stop-color="#ff00d7"/></linearGradient><linearGradient id="r242" gradientUnits="userSpaceOnUse" x1="1385" y1="0" x2="1744" y2="0"><stop offset="0.0000" stop-color="#0015ff"/><stop offset="0.1250" stop-color="#000aff"/><stop offset="0.2500" stop-color="#2200ff"/><stop offset="0.5000" stop-color="#7500ff"/><stop offset="0.7500" stop-color="#ce00ff"/><stop offset="0.8750" stop-color="#fc00ff"/><stop offset="1.0000" stop-color="#ff00d9"/></linearGradient><linearGradient id="r243" gradientUnits="userSpaceOnUse" x1="1385" y1="0" x2="1744" y2="0"><stop offset="0.0000" stop-color="#0014ff"/><stop offset="0.1250" stop-color="#0009ff"/><stop offset="0.2500" stop-color="#2100ff"/><stop offset="0.5000" stop-color="#7400ff"/><stop offset="0.7500" stop-color="#cb00ff"/><stop offset="0.8750" stop-color="#f900ff"/><stop offset="1.0000" stop-color="#ff00dc"/></linearGradient><linearGradient id="r244" gradientUnits="userSpaceOnUse" x1="1385" y1="0" x2="1744" y2="0"><stop offset="0.0000" stop-color="#0013ff"/><stop offset="0.1250" stop-color="#0008ff"/><stop offset="0.2500" stop-color="#2000ff"/><stop offset="0.5000" stop-color="#7200ff"/><stop offset="0.7500" stop-color="#c900ff"/><stop offset="0.8750" stop-color="#f600ff"/><stop offset="0.9375" stop-color="#ff00f1"/><stop offset="1.0000" stop-color="#ff00de"/></linearGradient><linearGradient id="r245" gradientUnits="userSpaceOnUse" x1="1385" y1="0" x2="1744" y2="0"><stop offset="0.0000" stop-color="#0012ff"/><stop offset="0.1250" stop-color="#0007ff"/><stop offset="0.2500" stop-color="#1f00ff"/><stop offset="0.5000" stop-color="#7100ff"/><stop offset="0.7500" stop-color="#c700ff"/><stop offset="0.8750" stop-color="#f400ff"/><stop offset="0.9375" stop-color="#ff00f4"/><stop offset="1.0000" stop-color="#ff00e1"/></linearGradient><linearGradient id="r246" gradientUnits="userSpaceOnUse" x1="1385" y1="0" x2="1744" y2="0"><stop offset="0.0000" stop-color="#0011ff"/><stop offset="0.1250" stop-color="#0007ff"/><stop offset="0.1875" stop-color="#0b01ff"/><stop offset="0.2500" stop-color="#1f00ff"/><stop offset="0.5000" stop-color="#6f00ff"/><stop offset="0.7500" stop-color="#c400ff"/><stop offset="0.8750" stop-color="#f100ff"/><stop offset="0.9375" stop-color="#ff00f7"/><stop offset="1.0000" stop-color="#ff00e3"/></linearGradient><linearGradient id="r247" gradientUnits="userSpaceOnUse" x1="1385" y1="0" x2="1744" y2="0"><stop offset="0.0000" stop-color="#0011ff"/><stop offset="0.1250" stop-color="#0006ff"/><stop offset="0.1875" stop-color="#0b00ff"/><stop offset="0.2500" stop-color="#1e00ff"/><stop offset="0.5000" stop-color="#6e00ff"/><stop offset="0.7500" stop-color="#c200ff"/><stop offset="0.8750" stop-color="#ee00ff"/><stop offset="0.9375" stop-color="#ff00fa"/><stop offset="1.0000" stop-color="#ff00e6"/></linearGradient><linearGradient id="r248" gradientUnits="userSpaceOnUse" x1="1385" y1="0" x2="1744" y2="0"><stop offset="0.0000" stop-color="#0010ff"/><stop offset="0.1250" stop-color="#0005ff"/><stop offset="0.1875" stop-color="#0a00ff"/><stop offset="0.2500" stop-color="#1d00ff"/><stop offset="0.5000" stop-color="#6d00ff"/><stop offset="0.7500" stop-color="#c000ff"/><stop offset="0.8750" stop-color="#eb00ff"/><stop offset="0.9375" stop-color="#ff00fc"/><stop offset="1.0000" stop-color="#ff00e8"/></linearGradient><linearGradient id="r249" gradientUnits="userSpaceOnUse" x1="1385" y1="0" x2="1744" y2="0"><stop offset="0.0000" stop-color="#000fff"/><stop offset="0.1250" stop-color="#0004ff"/><stop offset="0.1875" stop-color="#0a00ff"/><stop offset="0.2500" stop-color="#1d00ff"/><stop offset="0.5000" stop-color="#6b00ff"/><stop offset="0.7500" stop-color="#be00ff"/><stop offset="0.8750" stop-color="#e900ff"/><stop offset="0.9375" stop-color="#ff00ff"/><stop offset="1.0000" stop-color="#ff00eb"/></linearGradient><linearGradient id="r250" gradientUnits="userSpaceOnUse" x1="1385" y1="0" x2="1744" y2="0"><stop offset="0.0000" stop-color="#000eff"/><stop offset="0.1250" stop-color="#0004ff"/><stop offset="0.1875" stop-color="#0900ff"/><stop offset="0.2500" stop-color="#1c00ff"/><stop offset="0.5000" stop-color="#6a00ff"/><stop offset="0.7500" stop-color="#bc00ff"/><stop offset="0.8750" stop-color="#e600ff"/><stop offset="0.9375" stop-color="#fc00ff"/><stop offset="1.0000" stop-color="#ff00ed"/></linearGradient><linearGradient id="r251" gradientUnits="userSpaceOnUse" x1="1385" y1="0" x2="1744" y2="0"><stop offset="0.0000" stop-color="#000eff"/><stop offset="0.1250" stop-color="#0003ff"/><stop offset="0.1875" stop-color="#0900ff"/><stop offset="0.2500" stop-color="#1c00ff"/><stop offset="0.5000" stop-color="#6900ff"/><stop offset="0.7500" stop-color="#ba00ff"/><stop offset="0.8750" stop-color="#e400ff"/><stop offset="0.9375" stop-color="#f900ff"/><stop offset="1.0000" stop-color="#ff00f0"/></linearGradient><linearGradient id="r252" gradientUnits="userSpaceOnUse" x1="1385" y1="0" x2="1744" y2="0"><stop offset="0.0000" stop-color="#000dff"/><stop offset="0.1250" stop-color="#0002ff"/><stop offset="0.1875" stop-color="#0900ff"/><stop offset="0.2500" stop-color="#1b00ff"/><stop offset="0.5000" stop-color="#6700ff"/><stop offset="0.7500" stop-color="#b800ff"/><stop offset="0.8750" stop-color="#e100ff"/><stop offset="0.9375" stop-color="#f700ff"/><stop offset="1.0000" stop-color="#ff00f2"/></linearGradient><linearGradient id="r253" gradientUnits="userSpaceOnUse" x1="1684" y1="0" x2="1902" y2="0"><stop offset="0.0000" stop-color="#6a9900"/><stop offset="0.5000" stop-color="#879900"/><stop offset="0.7500" stop-color="#979900"/><stop offset="1.0000" stop-color="#998c00"/></linearGradient><linearGradient id="r254" gradientUnits="userSpaceOnUse" x1="1684" y1="0" x2="1902" y2="0"><stop offset="0.0000" stop-color="#6b9900"/><stop offset="0.5000" stop-color="#889900"/><stop offset="0.7500" stop-color="#979900"/><stop offset="1.0000" stop-color="#998c00"/></linearGradient><linearGradient id="r255" gradientUnits="userSpaceOnUse" x1="1684" y1="0" x2="1902" y2="0"><stop offset="0.0000" stop-color="#6c9900"/><stop offset="0.5000" stop-color="#899900"/><stop offset="0.7500" stop-color="#989900"/><stop offset="1.0000" stop-color="#998b00"/></linearGradient><linearGradient id="r256" gradientUnits="userSpaceOnUse" x1="1684" y1="0" x2="1902" y2="0"><stop offset="0.0000" stop-color="#6c9900"/><stop offset="0.5000" stop-color="#899900"/><stop offset="0.7500" stop-color="#999900"/><stop offset="1.0000" stop-color="#998a00"/></linearGradient><linearGradient id="r257" gradientUnits="userSpaceOnUse" x1="1684" y1="0" x2="1902" y2="0"><stop offset="0.0000" stop-color="#6d9900"/><stop offset="0.5000" stop-color="#8a9900"/><stop offset="0.7500" stop-color="#999800"/><stop offset="1.0000" stop-color="#998a00"/></linearGradient><linearGradient id="r258" gradientUnits="userSpaceOnUse" x1="1684" y1="0" x2="1902" y2="0"><stop offset="0.0000" stop-color="#6d9900"/><stop offset="0.5000" stop-color="#8b9900"/><stop offset="0.7500" stop-color="#999800"/><stop offset="1.0000" stop-color="#998900"/></linearGradient><linearGradient id="r259" gradientUnits="userSpaceOnUse" x1="1684" y1="0" x2="1902" y2="0"><stop offset="0.0000" stop-color="#6e9900"/><stop offset="0.5000" stop-color="#8b9900"/><stop offset="0.7500" stop-color="#999700"/><stop offset="1.0000" stop-color="#998800"/></linearGradient><linearGradient id="r260" gradientUnits="userSpaceOnUse" x1="1684" y1="0" x2="1902" y2="0"><stop offset="0.0000" stop-color="#6e9901"/><stop offset="0.5000" stop-color="#8c9900"/><stop offset="0.7500" stop-color="#999600"/><stop offset="1.0000" stop-color="#998800"/></linearGradient><linearGradient id="r261" gradientUnits="userSpaceOnUse" x1="1684" y1="0" x2="1902" y2="0"><stop offset="0.0000" stop-color="#6f9901"/><stop offset="0.5000" stop-color="#8d9900"/><stop offset="0.7500" stop-color="#999600"/><stop offset="1.0000" stop-color="#998700"/></linearGradient><linearGradient id="r262" gradientUnits="userSpaceOnUse" x1="1684" y1="0" x2="1902" y2="0"><stop offset="0.0000" stop-color="#6f9901"/><stop offset="0.5000" stop-color="#8d9900"/><stop offset="1.0000" stop-color="#998700"/></linearGradient><linearGradient id="r263" gradientUnits="userSpaceOnUse" x1="1684" y1="0" x2="1902" y2="0"><stop offset="0.0000" stop-color="#709902"/><stop offset="0.5000" stop-color="#8e9900"/><stop offset="1.0000" stop-color="#998600"/></linearGradient><linearGradient id="r264" gradientUnits="userSpaceOnUse" x1="1684" y1="0" x2="1902" y2="0"><stop offset="0.0000" stop-color="#719902"/><stop offset="0.5000" stop-color="#8f9900"/><stop offset="1.0000" stop-color="#998500"/></linearGradient><linearGradient id="r265" gradientUnits="userSpaceOnUse" x1="1684" y1="0" x2="1902" y2="0"><stop offset="0.0000" stop-color="#719902"/><stop offset="0.5000" stop-color="#8f9900"/><stop offset="1.0000" stop-color="#998500"/></linearGradient><linearGradient id="r266" gradientUnits="userSpaceOnUse" x1="1684" y1="0" x2="1902" y2="0"><stop offset="0.0000" stop-color="#729903"/><stop offset="0.5000" stop-color="#909900"/><stop offset="1.0000" stop-color="#998400"/></linearGradient><linearGradient id="r267" gradientUnits="userSpaceOnUse" x1="1684" y1="0" x2="1902" y2="0"><stop offset="0.0000" stop-color="#729903"/><stop offset="0.5000" stop-color="#919900"/><stop offset="0.7500" stop-color="#999100"/><stop offset="1.0000" stop-color="#998300"/></linearGradient><linearGradient id="r268" gradientUnits="userSpaceOnUse" x1="1684" y1="0" x2="1902" y2="0"><stop offset="0.0000" stop-color="#739903"/><stop offset="0.5000" stop-color="#929900"/><stop offset="1.0000" stop-color="#998300"/></linearGradient><linearGradient id="r269" gradientUnits="userSpaceOnUse" x1="1684" y1="0" x2="1902" y2="0"><stop offset="0.0000" stop-color="#749904"/><stop offset="0.5000" stop-color="#929900"/><stop offset="1.0000" stop-color="#998200"/></linearGradient><linearGradient id="r270" gradientUnits="userSpaceOnUse" x1="1684" y1="0" x2="1902" y2="0"><stop offset="0.0000" stop-color="#749904"/><stop offset="0.5000" stop-color="#939900"/><stop offset="1.0000" stop-color="#998100"/></linearGradient><linearGradient id="r271" gradientUnits="userSpaceOnUse" x1="1684" y1="0" x2="1902" y2="0"><stop offset="0.0000" stop-color="#759904"/><stop offset="0.5000" stop-color="#949900"/><stop offset="1.0000" stop-color="#998100"/></linearGradient><linearGradient id="r272" gradientUnits="userSpaceOnUse" x1="1684" y1="0" x2="1902" y2="0"><stop offset="0.0000" stop-color="#759905"/><stop offset="0.5000" stop-color="#959900"/><stop offset="1.0000" stop-color="#998000"/></linearGradient><linearGradient id="r273" gradientUnits="userSpaceOnUse" x1="1684" y1="0" x2="1902" y2="0"><stop offset="0.0000" stop-color="#769905"/><stop offset="0.5000" stop-color="#959900"/><stop offset="1.0000" stop-color="#998000"/></linearGradient><linearGradient id="r274" gradientUnits="userSpaceOnUse" x1="1684" y1="0" x2="1902" y2="0"><stop offset="0.0000" stop-color="#779905"/><stop offset="0.5000" stop-color="#969900"/><stop offset="1.0000" stop-color="#997f00"/></linearGradient><linearGradient id="r275" gradientUnits="userSpaceOnUse" x1="1684" y1="0" x2="1902" y2="0"><stop offset="0.0000" stop-color="#779906"/><stop offset="0.5000" stop-color="#979900"/><stop offset="1.0000" stop-color="#997e00"/></linearGradient><linearGradient id="r276" gradientUnits="userSpaceOnUse" x1="1684" y1="0" x2="1902" y2="0"><stop offset="0.0000" stop-color="#789906"/><stop offset="0.5000" stop-color="#989900"/><stop offset="1.0000" stop-color="#997e00"/></linearGradient><linearGradient id="r277" gradientUnits="userSpaceOnUse" x1="1684" y1="0" x2="1902" y2="0"><stop offset="0.0000" stop-color="#799906"/><stop offset="0.5000" stop-color="#989900"/><stop offset="1.0000" stop-color="#997d00"/></linearGradient><linearGradient id="r278" gradientUnits="userSpaceOnUse" x1="1684" y1="0" x2="1902" y2="0"><stop offset="0.0000" stop-color="#799907"/><stop offset="0.5000" stop-color="#999900"/><stop offset="1.0000" stop-color="#997c00"/></linearGradient><linearGradient id="r279" gradientUnits="userSpaceOnUse" x1="1684" y1="0" x2="1902" y2="0"><stop offset="0.0000" stop-color="#7a9907"/><stop offset="0.5000" stop-color="#999800"/><stop offset="1.0000" stop-color="#997c00"/></linearGradient><linearGradient id="r280" gradientUnits="userSpaceOnUse" x1="1684" y1="0" x2="1902" y2="0"><stop offset="0.0000" stop-color="#7a9907"/><stop offset="0.5000" stop-color="#999700"/><stop offset="1.0000" stop-color="#997b00"/></linearGradient><linearGradient id="r281" gradientUnits="userSpaceOnUse" x1="1684" y1="0" x2="1902" y2="0"><stop offset="0.0000" stop-color="#7b9908"/><stop offset="0.5000" stop-color="#999701"/><stop offset="1.0000" stop-color="#997b00"/></linearGradient><linearGradient id="r282" gradientUnits="userSpaceOnUse" x1="1684" y1="0" x2="1902" y2="0"><stop offset="0.0000" stop-color="#7c9908"/><stop offset="0.5000" stop-color="#999601"/><stop offset="1.0000" stop-color="#997a00"/></linearGradient><linearGradient id="r283" gradientUnits="userSpaceOnUse" x1="1684" y1="0" x2="1902" y2="0"><stop offset="0.0000" stop-color="#7c9908"/><stop offset="0.5000" stop-color="#999501"/><stop offset="1.0000" stop-color="#997900"/></linearGradient><linearGradient id="r284" gradientUnits="userSpaceOnUse" x1="1684" y1="0" x2="1902" y2="0"><stop offset="0.0000" stop-color="#7d9909"/><stop offset="0.5000" stop-color="#999402"/><stop offset="1.0000" stop-color="#997900"/></linearGradient><linearGradient id="r285" gradientUnits="userSpaceOnUse" x1="1684" y1="0" x2="1902" y2="0"><stop offset="0.0000" stop-color="#7e9909"/><stop offset="0.5000" stop-color="#999402"/><stop offset="1.0000" stop-color="#997800"/></linearGradient><linearGradient id="r286" gradientUnits="userSpaceOnUse" x1="1684" y1="0" x2="1902" y2="0"><stop offset="0.0000" stop-color="#7e9909"/><stop offset="0.5000" stop-color="#999302"/><stop offset="1.0000" stop-color="#997800"/></linearGradient><linearGradient id="r287" gradientUnits="userSpaceOnUse" x1="1684" y1="0" x2="1902" y2="0"><stop offset="0.0000" stop-color="#7f990a"/><stop offset="0.5000" stop-color="#999203"/><stop offset="1.0000" stop-color="#997700"/></linearGradient><linearGradient id="r288" gradientUnits="userSpaceOnUse" x1="1684" y1="0" x2="1902" y2="0"><stop offset="0.0000" stop-color="#80990a"/><stop offset="0.5000" stop-color="#999103"/><stop offset="1.0000" stop-color="#997600"/></linearGradient><linearGradient id="r289" gradientUnits="userSpaceOnUse" x1="1684" y1="0" x2="1902" y2="0"><stop offset="0.0000" stop-color="#80990a"/><stop offset="0.2500" stop-color="#919907"/><stop offset="0.5000" stop-color="#999103"/><stop offset="1.0000" stop-color="#997600"/></linearGradient><linearGradient id="r290" gradientUnits="userSpaceOnUse" x1="1684" y1="0" x2="1902" y2="0"><stop offset="0.0000" stop-color="#81990b"/><stop offset="0.5000" stop-color="#999004"/><stop offset="1.0000" stop-color="#997500"/></linearGradient><linearGradient id="r291" gradientUnits="userSpaceOnUse" x1="1684" y1="0" x2="1902" y2="0"><stop offset="0.0000" stop-color="#82990b"/><stop offset="0.5000" stop-color="#998f04"/><stop offset="1.0000" stop-color="#997500"/></linearGradient><linearGradient id="r292" gradientUnits="userSpaceOnUse" x1="1684" y1="0" x2="1902" y2="0"><stop offset="0.0000" stop-color="#83990c"/><stop offset="0.5000" stop-color="#998e04"/><stop offset="1.0000" stop-color="#997400"/></linearGradient><linearGradient id="r293" gradientUnits="userSpaceOnUse" x1="1684" y1="0" x2="1902" y2="0"><stop offset="0.0000" stop-color="#83990c"/><stop offset="0.5000" stop-color="#998e05"/><stop offset="1.0000" stop-color="#997400"/></linearGradient><linearGradient id="r294" gradientUnits="userSpaceOnUse" x1="1684" y1="0" x2="1902" y2="0"><stop offset="0.0000" stop-color="#84990c"/><stop offset="0.2500" stop-color="#959909"/><stop offset="0.5000" stop-color="#998d05"/><stop offset="1.0000" stop-color="#997300"/></linearGradient><linearGradient id="r295" gradientUnits="userSpaceOnUse" x1="1684" y1="0" x2="1902" y2="0"><stop offset="0.0000" stop-color="#85990d"/><stop offset="0.2500" stop-color="#959909"/><stop offset="0.5000" stop-color="#998c05"/><stop offset="1.0000" stop-color="#997200"/></linearGradient><linearGradient id="r296" gradientUnits="userSpaceOnUse" x1="1684" y1="0" x2="1902" y2="0"><stop offset="0.0000" stop-color="#85990d"/><stop offset="0.2500" stop-color="#96990a"/><stop offset="0.5000" stop-color="#998c06"/><stop offset="1.0000" stop-color="#997200"/></linearGradient><linearGradient id="r297" gradientUnits="userSpaceOnUse" x1="1684" y1="0" x2="1902" y2="0"><stop offset="0.0000" stop-color="#86990d"/><stop offset="0.2500" stop-color="#97990a"/><stop offset="0.5000" stop-color="#998b06"/><stop offset="1.0000" stop-color="#997100"/></linearGradient><linearGradient id="r298" gradientUnits="userSpaceOnUse" x1="1684" y1="0" x2="1902" y2="0"><stop offset="0.0000" stop-color="#87990e"/><stop offset="0.2500" stop-color="#98990a"/><stop offset="0.5000" stop-color="#998a06"/><stop offset="1.0000" stop-color="#997100"/></linearGradient><linearGradient id="r299" gradientUnits="userSpaceOnUse" x1="1684" y1="0" x2="1902" y2="0"><stop offset="0.0000" stop-color="#87990e"/><stop offset="0.2500" stop-color="#99990b"/><stop offset="0.5000" stop-color="#998907"/><stop offset="1.0000" stop-color="#997000"/></linearGradient><linearGradient id="r300" gradientUnits="userSpaceOnUse" x1="1684" y1="0" x2="1902" y2="0"><stop offset="0.0000" stop-color="#88990f"/><stop offset="0.2500" stop-color="#99990b"/><stop offset="0.5000" stop-color="#998907"/><stop offset="1.0000" stop-color="#996f00"/></linearGradient><linearGradient id="r301" gradientUnits="userSpaceOnUse" x1="1684" y1="0" x2="1902" y2="0"><stop offset="0.0000" stop-color="#89990f"/><stop offset="0.2500" stop-color="#99980c"/><stop offset="0.5000" stop-color="#998807"/><stop offset="1.0000" stop-color="#996f00"/></linearGradient><linearGradient id="r302" gradientUnits="userSpaceOnUse" x1="1684" y1="0" x2="1902" y2="0"><stop offset="0.0000" stop-color="#8a990f"/><stop offset="0.2500" stop-color="#99970c"/><stop offset="0.5000" stop-color="#998708"/><stop offset="1.0000" stop-color="#996e01"/></linearGradient><linearGradient id="r303" gradientUnits="userSpaceOnUse" x1="1684" y1="0" x2="1902" y2="0"><stop offset="0.0000" stop-color="#8a9910"/><stop offset="0.2500" stop-color="#99960c"/><stop offset="0.5000" stop-color="#998708"/><stop offset="1.0000" stop-color="#996e01"/></linearGradient><linearGradient id="r304" gradientUnits="userSpaceOnUse" x1="1684" y1="0" x2="1902" y2="0"><stop offset="0.0000" stop-color="#8b9910"/><stop offset="0.2500" stop-color="#99950d"/><stop offset="0.5000" stop-color="#998608"/><stop offset="1.0000" stop-color="#996d01"/></linearGradient><linearGradient id="r305" gradientUnits="userSpaceOnUse" x1="1684" y1="0" x2="1902" y2="0"><stop offset="0.0000" stop-color="#8c9911"/><stop offset="0.2500" stop-color="#99950d"/><stop offset="0.5000" stop-color="#998508"/><stop offset="1.0000" stop-color="#996d02"/></linearGradient><linearGradient id="r306" gradientUnits="userSpaceOnUse" x1="1684" y1="0" x2="1902" y2="0"><stop offset="0.0000" stop-color="#b1ff00"/><stop offset="0.5000" stop-color="#e1ff00"/><stop offset="0.7500" stop-color="#fbff00"/><stop offset="1.0000" stop-color="#ffea00"/></linearGradient><linearGradient id="r307" gradientUnits="userSpaceOnUse" x1="1684" y1="0" x2="1902" y2="0"><stop offset="0.0000" stop-color="#b2ff00"/><stop offset="0.5000" stop-color="#e3ff00"/><stop offset="0.7500" stop-color="#fcff00"/><stop offset="1.0000" stop-color="#ffe900"/></linearGradient><linearGradient id="r308" gradientUnits="userSpaceOnUse" x1="1684" y1="0" x2="1902" y2="0"><stop offset="0.0000" stop-color="#b3ff00"/><stop offset="0.5000" stop-color="#e4ff00"/><stop offset="0.7500" stop-color="#feff00"/><stop offset="1.0000" stop-color="#ffe800"/></linearGradient><linearGradient id="r309" gradientUnits="userSpaceOnUse" x1="1684" y1="0" x2="1902" y2="0"><stop offset="0.0000" stop-color="#b4ff00"/><stop offset="0.5000" stop-color="#e5ff00"/><stop offset="0.7500" stop-color="#ffff00"/><stop offset="1.0000" stop-color="#ffe700"/></linearGradient><linearGradient id="r310" gradientUnits="userSpaceOnUse" x1="1684" y1="0" x2="1902" y2="0"><stop offset="0.0000" stop-color="#b5ff00"/><stop offset="0.5000" stop-color="#e6ff00"/><stop offset="0.7500" stop-color="#fffe00"/><stop offset="1.0000" stop-color="#ffe600"/></linearGradient><linearGradient id="r311" gradientUnits="userSpaceOnUse" x1="1684" y1="0" x2="1902" y2="0"><stop offset="0.0000" stop-color="#b6ff00"/><stop offset="0.5000" stop-color="#e7ff00"/><stop offset="0.7500" stop-color="#fffd00"/><stop offset="1.0000" stop-color="#ffe500"/></linearGradient><linearGradient id="r312" gradientUnits="userSpaceOnUse" x1="1684" y1="0" x2="1902" y2="0"><stop offset="0.0000" stop-color="#b7ff01"/><stop offset="0.5000" stop-color="#e8ff00"/><stop offset="0.7500" stop-color="#fffc00"/><stop offset="1.0000" stop-color="#ffe300"/></linearGradient><linearGradient id="r313" gradientUnits="userSpaceOnUse" x1="1684" y1="0" x2="1902" y2="0"><stop offset="0.0000" stop-color="#b8ff01"/><stop offset="0.5000" stop-color="#e9ff00"/><stop offset="0.7500" stop-color="#fffa00"/><stop offset="1.0000" stop-color="#ffe200"/></linearGradient><linearGradient id="r314" gradientUnits="userSpaceOnUse" x1="1684" y1="0" x2="1902" y2="0"><stop offset="0.0000" stop-color="#b9ff02"/><stop offset="0.5000" stop-color="#eaff00"/><stop offset="0.7500" stop-color="#fff900"/><stop offset="1.0000" stop-color="#ffe100"/></linearGradient><linearGradient id="r315" gradientUnits="userSpaceOnUse" x1="1684" y1="0" x2="1902" y2="0"><stop offset="0.0000" stop-color="#baff02"/><stop offset="0.5000" stop-color="#ecff00"/><stop offset="0.7500" stop-color="#fff800"/><stop offset="1.0000" stop-color="#ffe000"/></linearGradient><linearGradient id="r316" gradientUnits="userSpaceOnUse" x1="1684" y1="0" x2="1902" y2="0"><stop offset="0.0000" stop-color="#bbff03"/><stop offset="0.5000" stop-color="#edff00"/><stop offset="0.7500" stop-color="#fff700"/><stop offset="1.0000" stop-color="#ffdf00"/></linearGradient><linearGradient id="r317" gradientUnits="userSpaceOnUse" x1="1684" y1="0" x2="1902" y2="0"><stop offset="0.0000" stop-color="#bcff03"/><stop offset="0.5000" stop-color="#eeff00"/><stop offset="0.7500" stop-color="#fff600"/><stop offset="1.0000" stop-color="#ffde00"/></linearGradient><linearGradient id="r318" gradientUnits="userSpaceOnUse" x1="1684" y1="0" x2="1902" y2="0"><stop offset="0.0000" stop-color="#bdff04"/><stop offset="0.5000" stop-color="#efff00"/><stop offset="0.7500" stop-color="#fff400"/><stop offset="1.0000" stop-color="#ffdd00"/></linearGradient><linearGradient id="r319" gradientUnits="userSpaceOnUse" x1="1684" y1="0" x2="1902" y2="0"><stop offset="0.0000" stop-color="#beff04"/><stop offset="0.5000" stop-color="#f0ff00"/><stop offset="0.6250" stop-color="#feff00"/><stop offset="0.7500" stop-color="#fff300"/><stop offset="1.0000" stop-color="#ffdc00"/></linearGradient><linearGradient id="r320" gradientUnits="userSpaceOnUse" x1="1684" y1="0" x2="1902" y2="0"><stop offset="0.0000" stop-color="#bfff05"/><stop offset="0.5000" stop-color="#f2ff00"/><stop offset="0.6250" stop-color="#ffff00"/><stop offset="0.7500" stop-color="#fff200"/><stop offset="1.0000" stop-color="#ffdb00"/></linearGradient><linearGradient id="r321" gradientUnits="userSpaceOnUse" x1="1684" y1="0" x2="1902" y2="0"><stop offset="0.0000" stop-color="#c0ff05"/><stop offset="0.5000" stop-color="#f3ff00"/><stop offset="0.6250" stop-color="#fffe00"/><stop offset="0.7500" stop-color="#fff100"/><stop offset="1.0000" stop-color="#ffda00"/></linearGradient><linearGradient id="r322" gradientUnits="userSpaceOnUse" x1="1684" y1="0" x2="1902" y2="0"><stop offset="0.0000" stop-color="#c1ff06"/><stop offset="0.5000" stop-color="#f4ff00"/><stop offset="0.7500" stop-color="#fff000"/><stop offset="1.0000" stop-color="#ffd900"/></linearGradient><linearGradient id="r323" gradientUnits="userSpaceOnUse" x1="1684" y1="0" x2="1902" y2="0"><stop offset="0.0000" stop-color="#c2ff06"/><stop offset="0.5000" stop-color="#f5ff00"/><stop offset="0.7500" stop-color="#ffef00"/><stop offset="1.0000" stop-color="#ffd800"/></linearGradient><linearGradient id="r324" gradientUnits="userSpaceOnUse" x1="1684" y1="0" x2="1902" y2="0"><stop offset="0.0000" stop-color="#c3ff07"/><stop offset="0.5000" stop-color="#f6ff00"/><stop offset="0.7500" stop-color="#ffed00"/><stop offset="1.0000" stop-color="#ffd700"/></linearGradient><linearGradient id="r325" gradientUnits="userSpaceOnUse" x1="1684" y1="0" x2="1902" y2="0"><stop offset="0.0000" stop-color="#c4ff08"/><stop offset="0.5000" stop-color="#f8ff00"/><stop offset="1.0000" stop-color="#ffd600"/></linearGradient><linearGradient id="r326" gradientUnits="userSpaceOnUse" x1="1684" y1="0" x2="1902" y2="0"><stop offset="0.0000" stop-color="#c5ff08"/><stop offset="0.5000" stop-color="#f9ff00"/><stop offset="1.0000" stop-color="#ffd500"/></linearGradient><linearGradient id="r327" gradientUnits="userSpaceOnUse" x1="1684" y1="0" x2="1902" y2="0"><stop offset="0.0000" stop-color="#c6ff09"/><stop offset="0.5000" stop-color="#faff00"/><stop offset="1.0000" stop-color="#ffd400"/></linearGradient><linearGradient id="r328" gradientUnits="userSpaceOnUse" x1="1684" y1="0" x2="1902" y2="0"><stop offset="0.0000" stop-color="#c7ff09"/><stop offset="0.5000" stop-color="#fbff00"/><stop offset="1.0000" stop-color="#ffd300"/></linearGradient><linearGradient id="r329" gradientUnits="userSpaceOnUse" x1="1684" y1="0" x2="1902" y2="0"><stop offset="0.0000" stop-color="#c8ff0a"/><stop offset="0.5000" stop-color="#fdff00"/><stop offset="1.0000" stop-color="#ffd200"/></linearGradient><linearGradient id="r330" gradientUnits="userSpaceOnUse" x1="1684" y1="0" x2="1902" y2="0"><stop offset="0.0000" stop-color="#c9ff0a"/><stop offset="0.5000" stop-color="#feff00"/><stop offset="1.0000" stop-color="#ffd100"/></linearGradient><linearGradient id="r331" gradientUnits="userSpaceOnUse" x1="1684" y1="0" x2="1902" y2="0"><stop offset="0.0000" stop-color="#caff0b"/><stop offset="0.5000" stop-color="#ffff00"/><stop offset="1.0000" stop-color="#ffcf00"/></linearGradient><linearGradient id="r332" gradientUnits="userSpaceOnUse" x1="1684" y1="0" x2="1902" y2="0"><stop offset="0.0000" stop-color="#cbff0b"/><stop offset="0.5000" stop-color="#fffe00"/><stop offset="1.0000" stop-color="#ffce00"/></linearGradient><linearGradient id="r333" gradientUnits="userSpaceOnUse" x1="1684" y1="0" x2="1902" y2="0"><stop offset="0.0000" stop-color="#ccff0c"/><stop offset="0.5000" stop-color="#fffc01"/><stop offset="1.0000" stop-color="#ffcd00"/></linearGradient><linearGradient id="r334" gradientUnits="userSpaceOnUse" x1="1684" y1="0" x2="1902" y2="0"><stop offset="0.0000" stop-color="#cdff0d"/><stop offset="0.5000" stop-color="#fffb01"/><stop offset="1.0000" stop-color="#ffcc00"/></linearGradient><linearGradient id="r335" gradientUnits="userSpaceOnUse" x1="1684" y1="0" x2="1902" y2="0"><stop offset="0.0000" stop-color="#ceff0d"/><stop offset="0.5000" stop-color="#fffa02"/><stop offset="1.0000" stop-color="#ffcb00"/></linearGradient><linearGradient id="r336" gradientUnits="userSpaceOnUse" x1="1684" y1="0" x2="1902" y2="0"><stop offset="0.0000" stop-color="#cfff0e"/><stop offset="0.5000" stop-color="#fff902"/><stop offset="1.0000" stop-color="#ffca00"/></linearGradient><linearGradient id="r337" gradientUnits="userSpaceOnUse" x1="1684" y1="0" x2="1902" y2="0"><stop offset="0.0000" stop-color="#d0ff0e"/><stop offset="0.5000" stop-color="#fff703"/><stop offset="1.0000" stop-color="#ffc900"/></linearGradient><linearGradient id="r338" gradientUnits="userSpaceOnUse" x1="1684" y1="0" x2="1902" y2="0"><stop offset="0.0000" stop-color="#d2ff0f"/><stop offset="0.2500" stop-color="#ecff09"/><stop offset="0.5000" stop-color="#fff604"/><stop offset="1.0000" stop-color="#ffc800"/></linearGradient><linearGradient id="r339" gradientUnits="userSpaceOnUse" x1="1684" y1="0" x2="1902" y2="0"><stop offset="0.0000" stop-color="#d3ff10"/><stop offset="0.2500" stop-color="#eeff0a"/><stop offset="0.5000" stop-color="#fff504"/><stop offset="1.0000" stop-color="#ffc700"/></linearGradient><linearGradient id="r340" gradientUnits="userSpaceOnUse" x1="1684" y1="0" x2="1902" y2="0"><stop offset="0.0000" stop-color="#d4ff10"/><stop offset="0.2500" stop-color="#efff0b"/><stop offset="0.5000" stop-color="#fff405"/><stop offset="1.0000" stop-color="#ffc600"/></linearGradient><linearGradient id="r341" gradientUnits="userSpaceOnUse" x1="1684" y1="0" x2="1902" y2="0"><stop offset="0.0000" stop-color="#d5ff11"/><stop offset="0.2500" stop-color="#f0ff0b"/><stop offset="0.3750" stop-color="#feff08"/><stop offset="0.5000" stop-color="#fff205"/><stop offset="1.0000" stop-color="#ffc500"/></linearGradient><linearGradient id="r342" gradientUnits="userSpaceOnUse" x1="1684" y1="0" x2="1902" y2="0"><stop offset="0.0000" stop-color="#d6ff11"/><stop offset="0.2500" stop-color="#f1ff0c"/><stop offset="0.3750" stop-color="#ffff09"/><stop offset="0.5000" stop-color="#fff106"/><stop offset="1.0000" stop-color="#ffc400"/></linearGradient><linearGradient id="r343" gradientUnits="userSpaceOnUse" x1="1684" y1="0" x2="1902" y2="0"><stop offset="0.0000" stop-color="#d7ff12"/><stop offset="0.2500" stop-color="#f3ff0c"/><stop offset="0.3750" stop-color="#fffd0a"/><stop offset="0.5000" stop-color="#fff006"/><stop offset="1.0000" stop-color="#ffc300"/></linearGradient><linearGradient id="r344" gradientUnits="userSpaceOnUse" x1="1684" y1="0" x2="1902" y2="0"><stop offset="0.0000" stop-color="#d8ff13"/><stop offset="0.2500" stop-color="#f4ff0d"/><stop offset="0.5000" stop-color="#ffef07"/><stop offset="1.0000" stop-color="#ffc300"/></linearGradient><linearGradient id="r345" gradientUnits="userSpaceOnUse" x1="1684" y1="0" x2="1902" y2="0"><stop offset="0.0000" stop-color="#daff13"/><stop offset="0.2500" stop-color="#f5ff0e"/><stop offset="0.5000" stop-color="#ffed07"/><stop offset="1.0000" stop-color="#ffc200"/></linearGradient><linearGradient id="r346" gradientUnits="userSpaceOnUse" x1="1684" y1="0" x2="1902" y2="0"><stop offset="0.0000" stop-color="#dbff14"/><stop offset="0.2500" stop-color="#f6ff0e"/><stop offset="0.5000" stop-color="#ffec08"/><stop offset="1.0000" stop-color="#ffc100"/></linearGradient><linearGradient id="r347" gradientUnits="userSpaceOnUse" x1="1684" y1="0" x2="1902" y2="0"><stop offset="0.0000" stop-color="#dcff14"/><stop offset="0.2500" stop-color="#f8ff0f"/><stop offset="0.5000" stop-color="#ffeb08"/><stop offset="1.0000" stop-color="#ffc000"/></linearGradient><linearGradient id="r348" gradientUnits="userSpaceOnUse" x1="1684" y1="0" x2="1902" y2="0"><stop offset="0.0000" stop-color="#ddff15"/><stop offset="0.2500" stop-color="#f9ff10"/><stop offset="0.5000" stop-color="#ffea09"/><stop offset="1.0000" stop-color="#ffbf00"/></linearGradient><linearGradient id="r349" gradientUnits="userSpaceOnUse" x1="1684" y1="0" x2="1902" y2="0"><stop offset="0.0000" stop-color="#deff16"/><stop offset="0.2500" stop-color="#faff10"/><stop offset="0.5000" stop-color="#ffe909"/><stop offset="1.0000" stop-color="#ffbe00"/></linearGradient><linearGradient id="r350" gradientUnits="userSpaceOnUse" x1="1684" y1="0" x2="1902" y2="0"><stop offset="0.0000" stop-color="#dfff16"/><stop offset="0.2500" stop-color="#fcff11"/><stop offset="0.5000" stop-color="#ffe70a"/><stop offset="1.0000" stop-color="#ffbd00"/></linearGradient><linearGradient id="r351" gradientUnits="userSpaceOnUse" x1="1684" y1="0" x2="1902" y2="0"><stop offset="0.0000" stop-color="#e1ff17"/><stop offset="0.2500" stop-color="#fdff11"/><stop offset="0.5000" stop-color="#ffe60b"/><stop offset="1.0000" stop-color="#ffbc00"/></linearGradient><linearGradient id="r352" gradientUnits="userSpaceOnUse" x1="1684" y1="0" x2="1902" y2="0"><stop offset="0.0000" stop-color="#e2ff18"/><stop offset="0.2500" stop-color="#feff12"/><stop offset="0.5000" stop-color="#ffe50b"/><stop offset="1.0000" stop-color="#ffbb00"/></linearGradient><linearGradient id="r353" gradientUnits="userSpaceOnUse" x1="1684" y1="0" x2="1902" y2="0"><stop offset="0.0000" stop-color="#e3ff18"/><stop offset="0.2500" stop-color="#fffe13"/><stop offset="0.5000" stop-color="#ffe40c"/><stop offset="1.0000" stop-color="#ffba00"/></linearGradient><linearGradient id="r354" gradientUnits="userSpaceOnUse" x1="1684" y1="0" x2="1902" y2="0"><stop offset="0.0000" stop-color="#e4ff19"/><stop offset="0.2500" stop-color="#fffd13"/><stop offset="0.5000" stop-color="#ffe30c"/><stop offset="1.0000" stop-color="#ffb901"/></linearGradient><linearGradient id="r355" gradientUnits="userSpaceOnUse" x1="1684" y1="0" x2="1902" y2="0"><stop offset="0.0000" stop-color="#e5ff1a"/><stop offset="0.2500" stop-color="#fffc14"/><stop offset="0.5000" stop-color="#ffe10d"/><stop offset="1.0000" stop-color="#ffb801"/></linearGradient><linearGradient id="r356" gradientUnits="userSpaceOnUse" x1="1684" y1="0" x2="1902" y2="0"><stop offset="0.0000" stop-color="#e7ff1a"/><stop offset="0.2500" stop-color="#fffa14"/><stop offset="0.5000" stop-color="#ffe00d"/><stop offset="1.0000" stop-color="#ffb702"/></linearGradient><linearGradient id="r357" gradientUnits="userSpaceOnUse" x1="1684" y1="0" x2="1902" y2="0"><stop offset="0.0000" stop-color="#e8ff1b"/><stop offset="0.2500" stop-color="#fff915"/><stop offset="0.5000" stop-color="#ffdf0e"/><stop offset="1.0000" stop-color="#ffb602"/></linearGradient><linearGradient id="r358" gradientUnits="userSpaceOnUse" x1="1684" y1="0" x2="1902" y2="0"><stop offset="0.0000" stop-color="#e9ff1c"/><stop offset="0.2500" stop-color="#fff815"/><stop offset="0.5000" stop-color="#ffde0e"/><stop offset="1.0000" stop-color="#ffb503"/></linearGradient><clipPath id="cpInset"><rect x="1684" y="512.5" width="218" height="157.5"/></clipPath><clipPath id="cpInsetIn"><path d="M1680 526.03 L1906 655.70 L1906 675 L1680 675 Z"/></clipPath></defs>
<rect x="0" y="0" width="1920" height="1050" fill="#333333" />
<rect x="0" y="0" width="1920" height="23" fill="#00b5c6" />
<circle cx="10.3" cy="10.5" r="7.2" fill="#000"/>
<path d="M10.30 3.80 A6.7 6.7 0 0 1 16.10 7.15" fill="none" stroke="#ff2020" stroke-width="1"/>
<path d="M16.10 7.15 A6.7 6.7 0 0 1 16.10 13.85" fill="none" stroke="#ff20ff" stroke-width="1"/>
<path d="M16.10 13.85 A6.7 6.7 0 0 1 10.30 17.20" fill="none" stroke="#2040ff" stroke-width="1"/>
<path d="M10.30 17.20 A6.7 6.7 0 0 1 4.50 13.85" fill="none" stroke="#20c0ff" stroke-width="1"/>
<path d="M4.50 13.85 A6.7 6.7 0 0 1 4.50 7.15" fill="none" stroke="#20ff40" stroke-width="1"/>
<path d="M4.50 7.15 A6.7 6.7 0 0 1 10.30 3.80" fill="none" stroke="#ffff20" stroke-width="1"/>
<text x="10.3" y="13.3" font-size="7.5" fill="#fff" text-anchor="middle" font-weight="bold" textLength="11" lengthAdjust="spacingAndGlyphs">CM</text>
<text x="23" y="16" font-size="12" fill="#000" textLength="336" lengthAdjust="spacingAndGlyphs">CalMAN 2019 CalMAN Ultimate for Business 53 Days Remaining</text>
<line x1="1800" y1="10.5" x2="1810" y2="10.5" stroke="#000" stroke-width="1" />
<rect x="1845.5" y="6.5" width="7" height="7" fill="none" stroke="#000" stroke-width="1"/>
<path d="M1847.5 6.5 V4.5 H1854.5 V11.5 H1852.5" fill="none" stroke="#000" stroke-width="1"/>
<path d="M1890 5 L1900 15 M1900 5 L1890 15" stroke="#000" stroke-width="1.2"/>
<rect x="0" y="23" width="1920" height="65.4" fill="#232323" />
<rect x="1" y="23" width="181" height="29.5" rx="3" fill="url(#gRed)" stroke="#7a2020" stroke-width="0.8"/>
<text x="14.5" y="49" font-size="30" fill="#000" font-weight="bold" textLength="129" lengthAdjust="spacingAndGlyphs" opacity="0.35">CalMAN</text>
<text x="13.5" y="48" font-size="30" fill="#fff" font-weight="bold" textLength="129" lengthAdjust="spacingAndGlyphs">CalMAN</text>
<circle cx="166" cy="36.5" r="10" fill="#d42428"/>
<path d="M160.5 34 H171.5 L166 39.5 Z" fill="#fff"/>
<rect x="190" y="36" width="1730" height="4.5" fill="url(#gRain)" />
<path d="M0 58 H194 Q200 58 200 64 V1050 H0 Z" fill="#555555"/>
<circle cx="19" cy="72" r="9.5" fill="url(#gBtn)" opacity="0.7"/>
<circle cx="18.5" cy="71.3" r="3.7" fill="url(#gSph)"/>
<circle cx="181" cy="71.5" r="9.5" fill="url(#gBtn)"/>
<path d="M178 71.5 L184 66.5 V76.5 Z" fill="#fff"/>
<text x="9" y="100.5" font-size="13" fill="#e6e6e6" textLength="64" lengthAdjust="spacingAndGlyphs">SDR Toolkit</text>
<rect x="9" y="105.2" width="182" height="250.3" fill="url(#gTree)" />
<path d="M18 122.8 L23 117.8 V122.8 Z" fill="#555"/>
<text x="29" y="123.8" font-size="10.5" fill="#f0f0f0" font-weight="bold" textLength="46.7" lengthAdjust="spacingAndGlyphs">Welcome</text>
<text x="42" y="138.57" font-size="10.5" fill="#f0f0f0" textLength="45.2" lengthAdjust="spacingAndGlyphs">Welcome</text>
<text x="42" y="153.34" font-size="10.5" fill="#f0f0f0" textLength="38" lengthAdjust="spacingAndGlyphs">Options</text>
<path d="M18 167.11 L23 162.11 V167.11 Z" fill="#555"/>
<text x="29" y="168.11" font-size="10.5" fill="#f0f0f0" font-weight="bold" textLength="41" lengthAdjust="spacingAndGlyphs">Analysis</text>
<text x="42" y="182.88" font-size="10.5" fill="#f0f0f0" textLength="74.6" lengthAdjust="spacingAndGlyphs">Dynamic Range</text>
<text x="42" y="197.64999999999998" font-size="10.5" fill="#f0f0f0" textLength="71.8" lengthAdjust="spacingAndGlyphs">Grayscale - 2pt</text>
<text x="42" y="212.42000000000002" font-size="10.5" fill="#f0f0f0" textLength="81.5" lengthAdjust="spacingAndGlyphs">Grayscale - Multi</text>
<text x="42" y="227.19" font-size="10.5" fill="#f0f0f0" textLength="61.7" lengthAdjust="spacingAndGlyphs">Color Gamut</text>
<text x="42" y="241.95999999999998" font-size="10.5" fill="#f0f0f0" textLength="34.2" lengthAdjust="spacingAndGlyphs">3D LUT</text>
<text x="42" y="256.73" font-size="10.5" fill="#f0f0f0" textLength="64.8" lengthAdjust="spacingAndGlyphs">ColorChecker</text>
<rect x="41" y="260.0" width="91" height="14.7" fill="#e4e4e4" />
<text x="42" y="271.5" font-size="10.5" fill="#333" textLength="89" lengthAdjust="spacingAndGlyphs">Saturation Sweeps</text>
<text x="42" y="286.27" font-size="10.5" fill="#f0f0f0" textLength="92" lengthAdjust="spacingAndGlyphs">Luminance Sweeps</text>
<text x="42" y="301.04" font-size="10.5" fill="#f0f0f0" textLength="88" lengthAdjust="spacingAndGlyphs">Screen Uniformity</text>
<text x="42" y="315.81" font-size="10.5" fill="#f0f0f0" textLength="85.5" lengthAdjust="spacingAndGlyphs">Screen Angularity</text>
<text x="42" y="330.58" font-size="10.5" fill="#f0f0f0" textLength="74.7" lengthAdjust="spacingAndGlyphs">Screen Stability</text>
<text x="42" y="345.34999999999997" font-size="10.5" fill="#f0f0f0" textLength="96.8" lengthAdjust="spacingAndGlyphs">Spectral Power Dist.</text>
<path d="M200.5 88.5 V62 Q200.5 58 205 58 H287 Q291.5 58 291.5 62 V88.5" fill="url(#gTab)" stroke="#777" stroke-width="1"/>
<line x1="258.5" y1="58.5" x2="258.5" y2="88" stroke="#777" stroke-width="1" />
<text x="206" y="78" font-size="11.5" fill="#e0e0e0" textLength="46" lengthAdjust="spacingAndGlyphs">History 1</text>
<circle cx="274" cy="74.5" r="9" fill="#3d3d3d"/>
<text x="274" y="79" font-size="12" fill="#777" text-anchor="middle">+</text>
<rect x="200" y="88.4" width="1720" height="961.6" fill="#333333" />
<line x1="201" y1="88.4" x2="201" y2="1050" stroke="#2a2a2a" stroke-width="2" />
<text x="209" y="142.7" font-size="42" fill="#ececec" textLength="342" lengthAdjust="spacingAndGlyphs">Saturation Sweeps</text>
<text x="777.3" y="135" font-size="22.5" fill="#f0f0f0" textLength="61" lengthAdjust="spacingAndGlyphs">Levels:</text>
<rect x="846.5" y="111.5" width="350" height="29" fill="url(#gDrop)" stroke="#262626" stroke-width="1"/>
<text x="852.3" y="135.2" font-size="18" fill="#f4f4f4" textLength="91" lengthAdjust="spacingAndGlyphs">20% Sweeps</text>
<path d="M1180 121 H1190 L1185 127 Z" fill="#000"/>
<text x="327.9" y="201.8" font-size="22" fill="#f0f0f0" textLength="111" lengthAdjust="spacingAndGlyphs">dE Formula:</text>
<rect x="446.5" y="180.5" width="140" height="28" fill="url(#gDrop)" stroke="#262626" stroke-width="1"/>
<text x="452.4" y="202.9" font-size="18" fill="#f4f4f4" textLength="36" lengthAdjust="spacingAndGlyphs">2000</text>
<path d="M570.5 191 H581 L575.8 197 Z" fill="#000"/>
<text x="387" y="237.7" font-size="14.5" fill="#d2d2d2" text-anchor="middle" textLength="81" lengthAdjust="spacingAndGlyphs">DeltaE 2000</text>
<rect x="245" y="243" width="320.5" height="425" fill="#232323" />
<line x1="287.72" y1="243" x2="287.72" y2="668" stroke="#8c8c8c" stroke-width="1.3" />
<line x1="330.44" y1="243" x2="330.44" y2="668" stroke="#8c8c8c" stroke-width="1.3" />
<line x1="373.15999999999997" y1="243" x2="373.15999999999997" y2="668" stroke="#8c8c8c" stroke-width="1.3" />
<line x1="415.88" y1="243" x2="415.88" y2="668" stroke="#8c8c8c" stroke-width="1.3" />
<line x1="458.6" y1="243" x2="458.6" y2="668" stroke="#8c8c8c" stroke-width="1.3" />
<line x1="501.32" y1="243" x2="501.32" y2="668" stroke="#8c8c8c" stroke-width="1.3" />
<line x1="544.04" y1="243" x2="544.04" y2="668" stroke="#8c8c8c" stroke-width="1.3" />
<rect x="245" y="243" width="320.5" height="425" fill="none" stroke="#8c8c8c" stroke-width="1.5"/>
<line x1="245.0" y1="668" x2="245.0" y2="675" stroke="#bfbfbf" stroke-width="1.5" />
<text x="245.0" y="692" font-size="14.5" fill="#d2d2d2" text-anchor="middle">0</text>
<line x1="287.72" y1="668" x2="287.72" y2="675" stroke="#bfbfbf" stroke-width="1.5" />
<text x="287.72" y="692" font-size="14.5" fill="#d2d2d2" text-anchor="middle">2</text>
<line x1="330.44" y1="668" x2="330.44" y2="675" stroke="#bfbfbf" stroke-width="1.5" />
<text x="330.44" y="692" font-size="14.5" fill="#d2d2d2" text-anchor="middle">4</text>
<line x1="373.15999999999997" y1="668" x2="373.15999999999997" y2="675" stroke="#bfbfbf" stroke-width="1.5" />
<text x="373.15999999999997" y="692" font-size="14.5" fill="#d2d2d2" text-anchor="middle">6</text>
<line x1="415.88" y1="668" x2="415.88" y2="675" stroke="#bfbfbf" stroke-width="1.5" />
<text x="415.88" y="692" font-size="14.5" fill="#d2d2d2" text-anchor="middle">8</text>
<line x1="458.6" y1="668" x2="458.6" y2="675" stroke="#bfbfbf" stroke-width="1.5" />
<text x="458.6" y="692" font-size="14.5" fill="#d2d2d2" text-anchor="middle">10</text>
<line x1="501.32" y1="668" x2="501.32" y2="675" stroke="#bfbfbf" stroke-width="1.5" />
<text x="501.32" y="692" font-size="14.5" fill="#d2d2d2" text-anchor="middle">12</text>
<line x1="544.04" y1="668" x2="544.04" y2="675" stroke="#bfbfbf" stroke-width="1.5" />
<text x="544.04" y="692" font-size="14.5" fill="#d2d2d2" text-anchor="middle">14</text>
<line x1="238" y1="243" x2="245" y2="243" stroke="#bfbfbf" stroke-width="1.5" />
<line x1="238" y1="315.2" x2="245" y2="315.2" stroke="#bfbfbf" stroke-width="1.5" />
<line x1="238" y1="385.7" x2="245" y2="385.7" stroke="#bfbfbf" stroke-width="1.5" />
<line x1="238" y1="455.7" x2="245" y2="455.7" stroke="#bfbfbf" stroke-width="1.5" />
<line x1="238" y1="526.2" x2="245" y2="526.2" stroke="#bfbfbf" stroke-width="1.5" />
<line x1="238" y1="598.6" x2="245" y2="598.6" stroke="#bfbfbf" stroke-width="1.5" />
<line x1="238" y1="668" x2="245" y2="668" stroke="#bfbfbf" stroke-width="1.5" />
<text x="244" y="284.8" font-size="14.5" fill="#d2d2d2" text-anchor="end">100%</text>
<text x="244" y="355.8" font-size="14.5" fill="#d2d2d2" text-anchor="end">80%</text>
<text x="244" y="427.7" font-size="14.5" fill="#d2d2d2" text-anchor="end">60%</text>
<text x="244" y="497.7" font-size="14.5" fill="#d2d2d2" text-anchor="end">40%</text>
<text x="244" y="568.5999999999999" font-size="14.5" fill="#d2d2d2" text-anchor="end">20%</text>
<text x="244" y="641.0" font-size="14.5" fill="#d2d2d2" text-anchor="end">100</text>
<rect x="245.5" y="250.50" width="22.0" height="6.4" fill="#d01818" stroke="#000" stroke-width="1.4"/>
<rect x="246.5" y="251.50" width="20.0" height="1.6" fill="#fff" opacity="0.25"/>
<rect x="245.5" y="258.05" width="11.7" height="6.4" fill="#18c018" stroke="#000" stroke-width="1.4"/>
<rect x="246.5" y="259.05" width="9.7" height="1.6" fill="#fff" opacity="0.25"/>
<rect x="245.5" y="265.60" width="29.3" height="6.4" fill="#1818c8" stroke="#000" stroke-width="1.4"/>
<rect x="246.5" y="266.60" width="27.3" height="1.6" fill="#fff" opacity="0.25"/>
<rect x="245.5" y="273.15" width="24.9" height="6.4" fill="#18b8b8" stroke="#000" stroke-width="1.4"/>
<rect x="246.5" y="274.15" width="22.9" height="1.6" fill="#fff" opacity="0.25"/>
<rect x="245.5" y="280.70" width="19.0" height="6.4" fill="#c018c0" stroke="#000" stroke-width="1.4"/>
<rect x="246.5" y="281.70" width="17.0" height="1.6" fill="#fff" opacity="0.25"/>
<rect x="245.5" y="288.25" width="19.0" height="6.4" fill="#c0c018" stroke="#000" stroke-width="1.4"/>
<rect x="246.5" y="289.25" width="17.0" height="1.6" fill="#fff" opacity="0.25"/>
<rect x="245.5" y="321.00" width="23.2" height="6.4" fill="#c84848" stroke="#000" stroke-width="1.4"/>
<rect x="246.5" y="322.00" width="21.2" height="1.6" fill="#fff" opacity="0.25"/>
<rect x="245.5" y="328.55" width="11.7" height="6.4" fill="#48b848" stroke="#000" stroke-width="1.4"/>
<rect x="246.5" y="329.55" width="9.7" height="1.6" fill="#fff" opacity="0.25"/>
<rect x="245.5" y="336.10" width="29.8" height="6.4" fill="#4848c0" stroke="#000" stroke-width="1.4"/>
<rect x="246.5" y="337.10" width="27.8" height="1.6" fill="#fff" opacity="0.25"/>
<rect x="245.5" y="343.65" width="29.3" height="6.4" fill="#48b0b0" stroke="#000" stroke-width="1.4"/>
<rect x="246.5" y="344.65" width="27.3" height="1.6" fill="#fff" opacity="0.25"/>
<rect x="245.5" y="351.20" width="20.7" height="6.4" fill="#c048c0" stroke="#000" stroke-width="1.4"/>
<rect x="246.5" y="352.20" width="18.7" height="1.6" fill="#fff" opacity="0.25"/>
<rect x="245.5" y="358.75" width="19.0" height="6.4" fill="#c0c048" stroke="#000" stroke-width="1.4"/>
<rect x="246.5" y="359.75" width="17.0" height="1.6" fill="#fff" opacity="0.25"/>
<rect x="245.5" y="391.50" width="19.0" height="6.4" fill="#c86868" stroke="#000" stroke-width="1.4"/>
<rect x="246.5" y="392.50" width="17.0" height="1.6" fill="#fff" opacity="0.25"/>
<rect x="245.5" y="399.05" width="9.8" height="6.4" fill="#60b860" stroke="#000" stroke-width="1.4"/>
<rect x="246.5" y="400.05" width="7.8" height="1.6" fill="#fff" opacity="0.25"/>
<rect x="245.5" y="406.60" width="20.7" height="6.4" fill="#6868c0" stroke="#000" stroke-width="1.4"/>
<rect x="246.5" y="407.60" width="18.7" height="1.6" fill="#fff" opacity="0.25"/>
<rect x="245.5" y="414.15" width="32.1" height="6.4" fill="#78c0c0" stroke="#000" stroke-width="1.4"/>
<rect x="246.5" y="415.15" width="30.1" height="1.6" fill="#fff" opacity="0.25"/>
<rect x="245.5" y="421.70" width="21.6" height="6.4" fill="#c070c8" stroke="#000" stroke-width="1.4"/>
<rect x="246.5" y="422.70" width="19.6" height="1.6" fill="#fff" opacity="0.25"/>
<rect x="245.5" y="429.25" width="20.1" height="6.4" fill="#c0c070" stroke="#000" stroke-width="1.4"/>
<rect x="246.5" y="430.25" width="18.1" height="1.6" fill="#fff" opacity="0.25"/>
<rect x="245.5" y="462.80" width="22.1" height="6.4" fill="#c07878" stroke="#000" stroke-width="1.4"/>
<rect x="246.5" y="463.80" width="20.1" height="1.6" fill="#fff" opacity="0.25"/>
<rect x="245.5" y="470.35" width="15.0" height="6.4" fill="#88b888" stroke="#000" stroke-width="1.4"/>
<rect x="246.5" y="471.35" width="13.0" height="1.6" fill="#fff" opacity="0.25"/>
<rect x="245.5" y="477.90" width="18.8" height="6.4" fill="#8888c0" stroke="#000" stroke-width="1.4"/>
<rect x="246.5" y="478.90" width="16.8" height="1.6" fill="#fff" opacity="0.25"/>
<rect x="245.5" y="485.45" width="40.2" height="6.4" fill="#98c8c8" stroke="#000" stroke-width="1.4"/>
<rect x="246.5" y="486.45" width="38.2" height="1.6" fill="#fff" opacity="0.25"/>
<rect x="245.5" y="493.00" width="22.1" height="6.4" fill="#c890c8" stroke="#000" stroke-width="1.4"/>
<rect x="246.5" y="494.00" width="20.1" height="1.6" fill="#fff" opacity="0.25"/>
<rect x="245.5" y="500.55" width="25.0" height="6.4" fill="#c8c890" stroke="#000" stroke-width="1.4"/>
<rect x="246.5" y="501.55" width="23.0" height="1.6" fill="#fff" opacity="0.25"/>
<rect x="245.5" y="533.50" width="29.3" height="6.4" fill="#c89898" stroke="#000" stroke-width="1.4"/>
<rect x="246.5" y="534.50" width="27.3" height="1.6" fill="#fff" opacity="0.25"/>
<rect x="245.5" y="541.05" width="22.6" height="6.4" fill="#98b898" stroke="#000" stroke-width="1.4"/>
<rect x="246.5" y="542.05" width="20.6" height="1.6" fill="#fff" opacity="0.25"/>
<rect x="245.5" y="548.60" width="27.4" height="6.4" fill="#a8a8c8" stroke="#000" stroke-width="1.4"/>
<rect x="246.5" y="549.60" width="25.4" height="1.6" fill="#fff" opacity="0.25"/>
<rect x="245.5" y="556.15" width="49.7" height="6.4" fill="#a8c8c8" stroke="#000" stroke-width="1.4"/>
<rect x="246.5" y="557.15" width="47.7" height="1.6" fill="#fff" opacity="0.25"/>
<rect x="245.5" y="563.70" width="29.3" height="6.4" fill="#c8a0c8" stroke="#000" stroke-width="1.4"/>
<rect x="246.5" y="564.70" width="27.3" height="1.6" fill="#fff" opacity="0.25"/>
<rect x="245.5" y="571.25" width="40.2" height="6.4" fill="#c8c8a8" stroke="#000" stroke-width="1.4"/>
<rect x="246.5" y="572.25" width="38.2" height="1.6" fill="#fff" opacity="0.25"/>
<rect x="245.5" y="649.3" width="101" height="6.5" fill="url(#gWhiteBar)" stroke="#000" stroke-width="1.3"/>
<text x="681.8" y="178" font-size="14.5" fill="#d2d2d2" text-anchor="middle">DeltaL</text>
<rect x="620.2" y="184.2" width="149.19999999999993" height="312.4" fill="#232323" />
<line x1="620.2" y1="184.40500000000003" x2="769.4" y2="184.40500000000003" stroke="#8c8c8c" stroke-width="1.5" />
<line x1="615.2" y1="184.40500000000003" x2="620.2" y2="184.40500000000003" stroke="#bfbfbf" stroke-width="1.5" />
<text x="614.7" y="189.60500000000002" font-size="14.5" fill="#d2d2d2" text-anchor="end">15</text>
<line x1="620.2" y1="236.47000000000003" x2="769.4" y2="236.47000000000003" stroke="#8c8c8c" stroke-width="1.5" />
<line x1="615.2" y1="236.47000000000003" x2="620.2" y2="236.47000000000003" stroke="#bfbfbf" stroke-width="1.5" />
<text x="614.7" y="241.67000000000002" font-size="14.5" fill="#d2d2d2" text-anchor="end">10</text>
<line x1="620.2" y1="288.535" x2="769.4" y2="288.535" stroke="#8c8c8c" stroke-width="1.5" />
<line x1="615.2" y1="288.535" x2="620.2" y2="288.535" stroke="#bfbfbf" stroke-width="1.5" />
<text x="614.7" y="293.735" font-size="14.5" fill="#d2d2d2" text-anchor="end">5</text>
<line x1="620.2" y1="340.6" x2="769.4" y2="340.6" stroke="#8c8c8c" stroke-width="1.5" />
<line x1="615.2" y1="340.6" x2="620.2" y2="340.6" stroke="#bfbfbf" stroke-width="1.5" />
<text x="614.7" y="345.8" font-size="14.5" fill="#d2d2d2" text-anchor="end">0</text>
<line x1="620.2" y1="392.665" x2="769.4" y2="392.665" stroke="#8c8c8c" stroke-width="1.5" />
<line x1="615.2" y1="392.665" x2="620.2" y2="392.665" stroke="#bfbfbf" stroke-width="1.5" />
<text x="614.7" y="397.865" font-size="14.5" fill="#d2d2d2" text-anchor="end">-5</text>
<line x1="620.2" y1="444.73" x2="769.4" y2="444.73" stroke="#8c8c8c" stroke-width="1.5" />
<line x1="615.2" y1="444.73" x2="620.2" y2="444.73" stroke="#bfbfbf" stroke-width="1.5" />
<text x="614.7" y="449.93" font-size="14.5" fill="#d2d2d2" text-anchor="end">-10</text>
<line x1="620.2" y1="496.795" x2="769.4" y2="496.795" stroke="#8c8c8c" stroke-width="1.5" />
<line x1="615.2" y1="496.795" x2="620.2" y2="496.795" stroke="#bfbfbf" stroke-width="1.5" />
<text x="614.7" y="501.995" font-size="14.5" fill="#d2d2d2" text-anchor="end">-15</text>
<line x1="620.2" y1="184.2" x2="620.2" y2="502" stroke="#8c8c8c" stroke-width="1.5" />
<line x1="769.4" y1="184.2" x2="769.4" y2="502" stroke="#8c8c8c" stroke-width="1.5" />
<text x="694.8" y="512.6" font-size="14.5" fill="#d2d2d2" text-anchor="middle">100%</text>
<rect x="636" y="331" width="118.5" height="9.600000000000023" fill="url(#gy0)" stroke="#000" stroke-width="1.3"/>
<text x="885.4000000000001" y="178" font-size="14.5" fill="#d2d2d2" text-anchor="middle">DeltaC</text>
<rect x="823.8000000000001" y="184.2" width="149.19999999999993" height="312.4" fill="#232323" />
<line x1="823.8000000000001" y1="184.40500000000003" x2="973.0" y2="184.40500000000003" stroke="#8c8c8c" stroke-width="1.5" />
<line x1="818.8000000000001" y1="184.40500000000003" x2="823.8000000000001" y2="184.40500000000003" stroke="#bfbfbf" stroke-width="1.5" />
<text x="818.3000000000001" y="189.60500000000002" font-size="14.5" fill="#d2d2d2" text-anchor="end">15</text>
<line x1="823.8000000000001" y1="236.47000000000003" x2="973.0" y2="236.47000000000003" stroke="#8c8c8c" stroke-width="1.5" />
<line x1="818.8000000000001" y1="236.47000000000003" x2="823.8000000000001" y2="236.47000000000003" stroke="#bfbfbf" stroke-width="1.5" />
<text x="818.3000000000001" y="241.67000000000002" font-size="14.5" fill="#d2d2d2" text-anchor="end">10</text>
<line x1="823.8000000000001" y1="288.535" x2="973.0" y2="288.535" stroke="#8c8c8c" stroke-width="1.5" />
<line x1="818.8000000000001" y1="288.535" x2="823.8000000000001" y2="288.535" stroke="#bfbfbf" stroke-width="1.5" />
<text x="818.3000000000001" y="293.735" font-size="14.5" fill="#d2d2d2" text-anchor="end">5</text>
<line x1="823.8000000000001" y1="340.6" x2="973.0" y2="340.6" stroke="#8c8c8c" stroke-width="1.5" />
<line x1="818.8000000000001" y1="340.6" x2="823.8000000000001" y2="340.6" stroke="#bfbfbf" stroke-width="1.5" />
<text x="818.3000000000001" y="345.8" font-size="14.5" fill="#d2d2d2" text-anchor="end">0</text>
<line x1="823.8000000000001" y1="392.665" x2="973.0" y2="392.665" stroke="#8c8c8c" stroke-width="1.5" />
<line x1="818.8000000000001" y1="392.665" x2="823.8000000000001" y2="392.665" stroke="#bfbfbf" stroke-width="1.5" />
<text x="818.3000000000001" y="397.865" font-size="14.5" fill="#d2d2d2" text-anchor="end">-5</text>
<line x1="823.8000000000001" y1="444.73" x2="973.0" y2="444.73" stroke="#8c8c8c" stroke-width="1.5" />
<line x1="818.8000000000001" y1="444.73" x2="823.8000000000001" y2="444.73" stroke="#bfbfbf" stroke-width="1.5" />
<text x="818.3000000000001" y="449.93" font-size="14.5" fill="#d2d2d2" text-anchor="end">-10</text>
<line x1="823.8000000000001" y1="496.795" x2="973.0" y2="496.795" stroke="#8c8c8c" stroke-width="1.5" />
<line x1="818.8000000000001" y1="496.795" x2="823.8000000000001" y2="496.795" stroke="#bfbfbf" stroke-width="1.5" />
<text x="818.3000000000001" y="501.995" font-size="14.5" fill="#d2d2d2" text-anchor="end">-15</text>
<line x1="823.8000000000001" y1="184.2" x2="823.8000000000001" y2="502" stroke="#8c8c8c" stroke-width="1.5" />
<line x1="973.0" y1="184.2" x2="973.0" y2="502" stroke="#8c8c8c" stroke-width="1.5" />
<text x="898.4000000000001" y="512.6" font-size="14.5" fill="#d2d2d2" text-anchor="middle">100%</text>
<line x1="839" y1="340.2" x2="958" y2="340.2" stroke="#000" stroke-width="1.2" />
<text x="1089.0" y="178" font-size="14.5" fill="#d2d2d2" text-anchor="middle">DeltaH</text>
<rect x="1027.4" y="184.2" width="149.19999999999982" height="312.4" fill="#232323" />
<line x1="1027.4" y1="184.40500000000003" x2="1176.6" y2="184.40500000000003" stroke="#8c8c8c" stroke-width="1.5" />
<line x1="1022.4000000000001" y1="184.40500000000003" x2="1027.4" y2="184.40500000000003" stroke="#bfbfbf" stroke-width="1.5" />
<text x="1021.9000000000001" y="189.60500000000002" font-size="14.5" fill="#d2d2d2" text-anchor="end">15</text>
<line x1="1027.4" y1="236.47000000000003" x2="1176.6" y2="236.47000000000003" stroke="#8c8c8c" stroke-width="1.5" />
<line x1="1022.4000000000001" y1="236.47000000000003" x2="1027.4" y2="236.47000000000003" stroke="#bfbfbf" stroke-width="1.5" />
<text x="1021.9000000000001" y="241.67000000000002" font-size="14.5" fill="#d2d2d2" text-anchor="end">10</text>
<line x1="1027.4" y1="288.535" x2="1176.6" y2="288.535" stroke="#8c8c8c" stroke-width="1.5" />
<line x1="1022.4000000000001" y1="288.535" x2="1027.4" y2="288.535" stroke="#bfbfbf" stroke-width="1.5" />
<text x="1021.9000000000001" y="293.735" font-size="14.5" fill="#d2d2d2" text-anchor="end">5</text>
<line x1="1027.4" y1="340.6" x2="1176.6" y2="340.6" stroke="#8c8c8c" stroke-width="1.5" />
<line x1="1022.4000000000001" y1="340.6" x2="1027.4" y2="340.6" stroke="#bfbfbf" stroke-width="1.5" />
<text x="1021.9000000000001" y="345.8" font-size="14.5" fill="#d2d2d2" text-anchor="end">0</text>
<line x1="1027.4" y1="392.665" x2="1176.6" y2="392.665" stroke="#8c8c8c" stroke-width="1.5" />
<line x1="1022.4000000000001" y1="392.665" x2="1027.4" y2="392.665" stroke="#bfbfbf" stroke-width="1.5" />
<text x="1021.9000000000001" y="397.865" font-size="14.5" fill="#d2d2d2" text-anchor="end">-5</text>
<line x1="1027.4" y1="444.73" x2="1176.6" y2="444.73" stroke="#8c8c8c" stroke-width="1.5" />
<line x1="1022.4000000000001" y1="444.73" x2="1027.4" y2="444.73" stroke="#bfbfbf" stroke-width="1.5" />
<text x="1021.9000000000001" y="449.93" font-size="14.5" fill="#d2d2d2" text-anchor="end">-10</text>
<line x1="1027.4" y1="496.795" x2="1176.6" y2="496.795" stroke="#8c8c8c" stroke-width="1.5" />
<line x1="1022.4000000000001" y1="496.795" x2="1027.4" y2="496.795" stroke="#bfbfbf" stroke-width="1.5" />
<text x="1021.9000000000001" y="501.995" font-size="14.5" fill="#d2d2d2" text-anchor="end">-15</text>
<line x1="1027.4" y1="184.2" x2="1027.4" y2="502" stroke="#8c8c8c" stroke-width="1.5" />
<line x1="1176.6" y1="184.2" x2="1176.6" y2="502" stroke="#8c8c8c" stroke-width="1.5" />
<text x="1102.0" y="512.6" font-size="14.5" fill="#d2d2d2" text-anchor="middle">100%</text>
<rect x="1042.8" y="340.6" width="117.20000000000005" height="13.799999999999955" fill="url(#gy2)" stroke="#000" stroke-width="1.3"/>
<rect x="587" y="524" width="610" height="179" fill="#000" />
<rect x="608.4" y="531.5" width="101.39999999999998" height="146" fill="url(#gsw0)" stroke="#f0f0f0" stroke-width="1"/>
<text x="659.0999999999999" y="694" font-size="13" fill="#f4f4f4" text-anchor="middle">20%</text>
<rect x="727.2" y="531.5" width="102.09999999999991" height="146" fill="url(#gsw1)" stroke="#f0f0f0" stroke-width="1"/>
<text x="778.25" y="694" font-size="13" fill="#f4f4f4" text-anchor="middle">40%</text>
<rect x="846.4" y="531.5" width="101.70000000000005" height="146" fill="url(#gsw2)" stroke="#f0f0f0" stroke-width="1"/>
<text x="897.25" y="694" font-size="13" fill="#f4f4f4" text-anchor="middle">60%</text>
<rect x="966.5" y="531.5" width="101.09999999999991" height="146" fill="url(#gsw3)" stroke="#f0f0f0" stroke-width="1"/>
<text x="1017.05" y="694" font-size="13" fill="#f4f4f4" text-anchor="middle">80%</text>
<rect x="1085.3" y="531.5" width="101.10000000000014" height="146" fill="url(#gsw4)" stroke="#f0f0f0" stroke-width="1"/>
<text x="1135.85" y="694" font-size="13" fill="#f4f4f4" text-anchor="middle">100%</text>
<text x="0" y="0" font-size="13" fill="#f4f4f4" text-anchor="middle" transform="translate(600.5 564) rotate(-90)">Actual</text>
<text x="0" y="0" font-size="13" fill="#f4f4f4" text-anchor="middle" transform="translate(600.5 645) rotate(-90)">Target</text>
<text x="260.9" y="752.5" font-size="30.5" fill="#f2f2f2" textLength="222" lengthAdjust="spacingAndGlyphs">Avg dE2000: 1.3</text>
<text x="249" y="798.2" font-size="30.5" fill="#f2f2f2" textLength="248" lengthAdjust="spacingAndGlyphs">Max dE2000: 4.76</text>
<text x="215.6" y="850.6" font-size="30.5" fill="#f2f2f2" textLength="225" lengthAdjust="spacingAndGlyphs">Current Reading</text>
<text x="215" y="889.6" font-size="27" fill="#f2f2f2" textLength="105" lengthAdjust="spacingAndGlyphs">x: 0.4223</text>
<text x="376" y="889.6" font-size="27" fill="#f2f2f2" textLength="107" lengthAdjust="spacingAndGlyphs">y: 0.5034</text>
<text x="215" y="933.6" font-size="27" fill="#f2f2f2" textLength="100" lengthAdjust="spacingAndGlyphs">fL: 56.68</text>
<text x="215" y="970.8" font-size="27" fill="#f2f2f2" textLength="164" lengthAdjust="spacingAndGlyphs">cd/m²: 194.21</text>
<text x="681.5" y="754.8" font-size="14.5" fill="#d2d2d2" text-anchor="middle" textLength="85" lengthAdjust="spacingAndGlyphs">RGB Balance</text>
<rect x="556" y="761" width="269.4" height="198" fill="#232323" />
<line x1="556" y1="778.3" x2="825.4" y2="778.3" stroke="#8c8c8c" stroke-width="1.5" />
<line x1="551" y1="778.3" x2="556" y2="778.3" stroke="#bfbfbf" stroke-width="1.5" />
<text x="550.5" y="783.5" font-size="14.5" fill="#d2d2d2" text-anchor="end">5</text>
<line x1="556" y1="860.7" x2="825.4" y2="860.7" stroke="#8c8c8c" stroke-width="1.5" />
<line x1="551" y1="860.7" x2="556" y2="860.7" stroke="#bfbfbf" stroke-width="1.5" />
<text x="550.5" y="865.9000000000001" font-size="14.5" fill="#d2d2d2" text-anchor="end">0</text>
<line x1="556" y1="942.9" x2="825.4" y2="942.9" stroke="#8c8c8c" stroke-width="1.5" />
<line x1="551" y1="942.9" x2="556" y2="942.9" stroke="#bfbfbf" stroke-width="1.5" />
<text x="550.5" y="948.1" font-size="14.5" fill="#d2d2d2" text-anchor="end">-5</text>
<rect x="556" y="761" width="269.4" height="198" fill="none" stroke="#8c8c8c" stroke-width="1.5"/>
<line x1="556" y1="959" x2="556" y2="966" stroke="#8c8c8c" stroke-width="1.5" />
<line x1="825.4" y1="959" x2="825.4" y2="966" stroke="#8c8c8c" stroke-width="1.5" />
<text x="690.9" y="976.6" font-size="14.5" fill="#d2d2d2" text-anchor="middle">100%</text>
<rect x="582.5" y="777.5" width="70.5" height="83.5" fill="url(#gR)" stroke="#000" stroke-width="1.3"/>
<rect x="653" y="832.3" width="71.4" height="28.7" fill="url(#gG)" stroke="#000" stroke-width="1.3"/>
<rect x="724.4" y="860.7" width="72.2" height="28.5" fill="url(#gB)" stroke="#000" stroke-width="1.3"/>
<rect x="868" y="727" width="723" height="31" fill="url(#gHdr)" />
<rect x="848" y="727" width="20" height="31" fill="#000" />
<text x="1039.5" y="748.7" font-size="16" fill="#f0f0f0" font-weight="bold" textLength="41.5" lengthAdjust="spacingAndGlyphs">20%</text>
<text x="1151" y="748.7" font-size="16" fill="#f0f0f0" font-weight="bold" textLength="42" lengthAdjust="spacingAndGlyphs">40%</text>
<text x="1263" y="748.7" font-size="16" fill="#f0f0f0" font-weight="bold" textLength="41.5" lengthAdjust="spacingAndGlyphs">60%</text>
<text x="1374.5" y="748.7" font-size="16" fill="#f0f0f0" font-weight="bold" textLength="42" lengthAdjust="spacingAndGlyphs">80%</text>
<text x="1486" y="748.7" font-size="16" fill="#f0f0f0" font-weight="bold" textLength="54" lengthAdjust="spacingAndGlyphs">100%</text>
<rect x="868" y="758.0" width="723" height="28.35" fill="#404040" />
<rect x="848" y="758.0" width="20" height="28.35" fill="#262626" />
<text x="875" y="779.0" font-size="18.5" fill="#f0f0f0" textLength="81" lengthAdjust="spacingAndGlyphs">x: CIE31</text>
<text x="1039.5" y="779.0" font-size="18.5" fill="#f0f0f0" textLength="70" lengthAdjust="spacingAndGlyphs">0.3341</text>
<text x="1151" y="779.0" font-size="18.5" fill="#f0f0f0" textLength="70" lengthAdjust="spacingAndGlyphs">0.3567</text>
<text x="1263" y="779.0" font-size="18.5" fill="#f0f0f0" textLength="70" lengthAdjust="spacingAndGlyphs">0.3792</text>
<text x="1374.5" y="779.0" font-size="18.5" fill="#f0f0f0" textLength="70" lengthAdjust="spacingAndGlyphs">0.3994</text>
<text x="1486" y="779.0" font-size="18.5" fill="#f0f0f0" textLength="70" lengthAdjust="spacingAndGlyphs">0.4223</text>
<rect x="868" y="786.35" width="723" height="28.35" fill="#7f7f7f" />
<rect x="848" y="786.35" width="20" height="28.35" fill="#262626" />
<text x="875" y="807.35" font-size="18.5" fill="#f0f0f0" textLength="83" lengthAdjust="spacingAndGlyphs">y: CIE31</text>
<text x="1039.5" y="807.35" font-size="18.5" fill="#f0f0f0" textLength="70" lengthAdjust="spacingAndGlyphs">0.3601</text>
<text x="1151" y="807.35" font-size="18.5" fill="#f0f0f0" textLength="70" lengthAdjust="spacingAndGlyphs">0.3968</text>
<text x="1263" y="807.35" font-size="18.5" fill="#f0f0f0" textLength="70" lengthAdjust="spacingAndGlyphs">0.4333</text>
<text x="1374.5" y="807.35" font-size="18.5" fill="#f0f0f0" textLength="70" lengthAdjust="spacingAndGlyphs">0.4662</text>
<text x="1486" y="807.35" font-size="18.5" fill="#f0f0f0" textLength="70" lengthAdjust="spacingAndGlyphs">0.5034</text>
<rect x="868" y="814.7" width="723" height="28.35" fill="#404040" />
<rect x="848" y="814.7" width="20" height="28.35" fill="#262626" />
<text x="875" y="835.7" font-size="18.5" fill="#f0f0f0" textLength="12.5" lengthAdjust="spacingAndGlyphs">Y</text>
<text x="1039.5" y="835.7" font-size="18.5" fill="#f0f0f0" textLength="97" lengthAdjust="spacingAndGlyphs">204.4708</text>
<text x="1151" y="835.7" font-size="18.5" fill="#f0f0f0" textLength="97" lengthAdjust="spacingAndGlyphs">201.1810</text>
<text x="1263" y="835.7" font-size="18.5" fill="#f0f0f0" textLength="97" lengthAdjust="spacingAndGlyphs">198.5612</text>
<text x="1374.5" y="835.7" font-size="18.5" fill="#f0f0f0" textLength="97" lengthAdjust="spacingAndGlyphs">196.5358</text>
<text x="1486" y="835.7" font-size="18.5" fill="#f0f0f0" textLength="97" lengthAdjust="spacingAndGlyphs">194.2060</text>
<rect x="868" y="843.05" width="723" height="28.35" fill="#7f7f7f" />
<rect x="848" y="843.05" width="20" height="28.35" fill="#262626" />
<text x="875" y="864.05" font-size="18.5" fill="#f0f0f0" textLength="148" lengthAdjust="spacingAndGlyphs">Target x:CIE31</text>
<text x="1039.5" y="864.05" font-size="18.5" fill="#f0f0f0" textLength="70" lengthAdjust="spacingAndGlyphs">0.3344</text>
<text x="1151" y="864.05" font-size="18.5" fill="#f0f0f0" textLength="70" lengthAdjust="spacingAndGlyphs">0.3564</text>
<text x="1263" y="864.05" font-size="18.5" fill="#f0f0f0" textLength="70" lengthAdjust="spacingAndGlyphs">0.3773</text>
<text x="1374.5" y="864.05" font-size="18.5" fill="#f0f0f0" textLength="70" lengthAdjust="spacingAndGlyphs">0.3969</text>
<text x="1486" y="864.05" font-size="18.5" fill="#f0f0f0" textLength="70" lengthAdjust="spacingAndGlyphs">0.4193</text>
<rect x="868" y="871.4" width="723" height="28.35" fill="#404040" />
<rect x="848" y="871.4" width="20" height="28.35" fill="#262626" />
<text x="875" y="892.4" font-size="18.5" fill="#f0f0f0" textLength="149" lengthAdjust="spacingAndGlyphs">Target y:CIE31</text>
<text x="1039.5" y="892.4" font-size="18.5" fill="#f0f0f0" textLength="70" lengthAdjust="spacingAndGlyphs">0.3648</text>
<text x="1151" y="892.4" font-size="18.5" fill="#f0f0f0" textLength="70" lengthAdjust="spacingAndGlyphs">0.4013</text>
<text x="1263" y="892.4" font-size="18.5" fill="#f0f0f0" textLength="70" lengthAdjust="spacingAndGlyphs">0.4358</text>
<text x="1374.5" y="892.4" font-size="18.5" fill="#f0f0f0" textLength="70" lengthAdjust="spacingAndGlyphs">0.4682</text>
<text x="1486" y="892.4" font-size="18.5" fill="#f0f0f0" textLength="70" lengthAdjust="spacingAndGlyphs">0.5053</text>
<rect x="868" y="899.75" width="723" height="28.35" fill="#7f7f7f" />
<rect x="848" y="899.75" width="20" height="28.35" fill="#262626" />
<text x="875" y="920.75" font-size="18.5" fill="#f0f0f0" textLength="86" lengthAdjust="spacingAndGlyphs">Target Y</text>
<text x="1039.5" y="920.75" font-size="18.5" fill="#f0f0f0" textLength="97" lengthAdjust="spacingAndGlyphs">199.5169</text>
<text x="1151" y="920.75" font-size="18.5" fill="#f0f0f0" textLength="97" lengthAdjust="spacingAndGlyphs">196.0148</text>
<text x="1263" y="920.75" font-size="18.5" fill="#f0f0f0" textLength="97" lengthAdjust="spacingAndGlyphs">193.3239</text>
<text x="1374.5" y="920.75" font-size="18.5" fill="#f0f0f0" textLength="97" lengthAdjust="spacingAndGlyphs">191.2121</text>
<text x="1486" y="920.75" font-size="18.5" fill="#f0f0f0" textLength="97" lengthAdjust="spacingAndGlyphs">189.1705</text>
<rect x="868" y="928.1" width="723" height="28.35" fill="#404040" />
<rect x="848" y="928.1" width="20" height="28.35" fill="#262626" />
<text x="875" y="949.1" font-size="18.5" fill="#f0f0f0" textLength="86" lengthAdjust="spacingAndGlyphs">ΔE 2000</text>
<text x="1039.5" y="949.1" font-size="18.5" fill="#f0f0f0" textLength="70" lengthAdjust="spacingAndGlyphs">1.9277</text>
<text x="1151" y="949.1" font-size="18.5" fill="#f0f0f0" textLength="70" lengthAdjust="spacingAndGlyphs">1.2345</text>
<text x="1263" y="949.1" font-size="18.5" fill="#f0f0f0" textLength="70" lengthAdjust="spacingAndGlyphs">1.0040</text>
<text x="1374.5" y="949.1" font-size="18.5" fill="#f0f0f0" textLength="70" lengthAdjust="spacingAndGlyphs">0.9794</text>
<text x="1486" y="949.1" font-size="18.5" fill="#f0f0f0" textLength="70" lengthAdjust="spacingAndGlyphs">0.9544</text>
<rect x="868" y="956.45" width="723" height="28.35" fill="#7f7f7f" />
<rect x="848" y="956.45" width="20" height="28.35" fill="#262626" />
<text x="875" y="977.45" font-size="18.5" fill="#f0f0f0" textLength="59" lengthAdjust="spacingAndGlyphs">dEITP</text>
<text x="1039.5" y="977.45" font-size="18.5" fill="#f0f0f0" textLength="70" lengthAdjust="spacingAndGlyphs">2.8892</text>
<text x="1151" y="977.45" font-size="18.5" fill="#f0f0f0" textLength="70" lengthAdjust="spacingAndGlyphs">2.9293</text>
<text x="1263" y="977.45" font-size="18.5" fill="#f0f0f0" textLength="70" lengthAdjust="spacingAndGlyphs">2.6606</text>
<text x="1374.5" y="977.45" font-size="18.5" fill="#f0f0f0" textLength="70" lengthAdjust="spacingAndGlyphs">2.7045</text>
<text x="1486" y="977.45" font-size="18.5" fill="#f0f0f0" textLength="70" lengthAdjust="spacingAndGlyphs">2.7229</text>
<path d="M1428.4 88 V61 Q1428.4 58 1431.4 58 H1567.6 Q1570.6 58 1570.6 61 V88 Z" fill="url(#gTool)" stroke="#3a3a3a" stroke-width="0.8"/>
<rect x="1428.9" y="59" width="4.5" height="29" fill="#22dd22" />
<text x="1436.6" y="69.5" font-size="11" fill="#f0f0f0" textLength="65" lengthAdjust="spacingAndGlyphs">X-Rite i1Pro 2</text>
<text x="1436.6" y="83.5" font-size="11" fill="#f0f0f0" textLength="56" lengthAdjust="spacingAndGlyphs">Direct View</text>
<circle cx="1515.5" cy="72.5" r="9.5" fill="#4a4a4a" opacity="0.8"/>
<path d="M1510.5 70 H1520.5 L1515.5 75.5 Z" fill="#fff"/>
<line x1="1534.6" y1="61" x2="1534.6" y2="88" stroke="#444" stroke-width="1" />
<circle cx="1555.2" cy="72.5" r="12.5" fill="#0000e6" stroke="#d0d0ff" stroke-width="1"/>
<text x="1555.2" y="76.5" font-size="10" fill="#fff" text-anchor="middle" textLength="19" lengthAdjust="spacingAndGlyphs">236</text>
<path d="M1576.6 88 V61 Q1576.6 58 1579.6 58 H1703 Q1706 58 1706 61 V88 Z" fill="url(#gTool)" stroke="#3a3a3a" stroke-width="0.8"/>
<rect x="1577.1" y="59" width="4.5" height="29" fill="#e6e600" />
<text x="1585.7" y="69.5" font-size="11" fill="#f0f0f0" textLength="33" lengthAdjust="spacingAndGlyphs">Source</text>
<circle cx="1690.4" cy="72.5" r="9.5" fill="#4a4a4a" opacity="0.8"/>
<path d="M1685.4 70 H1695.4 L1690.4 75.5 Z" fill="#fff"/>
<path d="M1712.8 88 V61 Q1712.8 58 1715.8 58 H1852.6 Q1855.6 58 1855.6 61 V88 Z" fill="url(#gTool)" stroke="#3a3a3a" stroke-width="0.8"/>
<rect x="1713.3" y="59" width="4.5" height="29" fill="#e6e600" />
<text x="1721.6" y="69.5" font-size="11" fill="#f0f0f0" textLength="105" lengthAdjust="spacingAndGlyphs">Direct Display Control</text>
<circle cx="1840" cy="72.5" r="9.5" fill="#4a4a4a" opacity="0.8"/>
<path d="M1835 70 H1845 L1840 75.5 Z" fill="#fff"/>
<rect x="1859.6" y="58.5" width="32.8" height="29" rx="3" fill="url(#gGear)" stroke="#bbb" stroke-width="0.8"/>
<circle cx="1876" cy="72.5" r="9" fill="#555" opacity="0.6"/>
<rect x="1874.6" y="64.8" width="2.8" height="4" fill="#ddd" transform="rotate(0 1876 72.5)"/><rect x="1874.6" y="64.8" width="2.8" height="4" fill="#ddd" transform="rotate(45 1876 72.5)"/><rect x="1874.6" y="64.8" width="2.8" height="4" fill="#ddd" transform="rotate(90 1876 72.5)"/><rect x="1874.6" y="64.8" width="2.8" height="4" fill="#ddd" transform="rotate(135 1876 72.5)"/><rect x="1874.6" y="64.8" width="2.8" height="4" fill="#ddd" transform="rotate(180 1876 72.5)"/><rect x="1874.6" y="64.8" width="2.8" height="4" fill="#ddd" transform="rotate(225 1876 72.5)"/><rect x="1874.6" y="64.8" width="2.8" height="4" fill="#ddd" transform="rotate(270 1876 72.5)"/><rect x="1874.6" y="64.8" width="2.8" height="4" fill="#ddd" transform="rotate(315 1876 72.5)"/>
<circle cx="1876" cy="72.5" r="4.8" fill="none" stroke="#ddd" stroke-width="2.2"/>
<path d="M1894 88 V61 Q1894 58.5 1897 58.5 H1920 V88 Z" fill="url(#gGear)" stroke="#bbb" stroke-width="0.8"/>
<circle cx="1907" cy="72.5" r="9" fill="#555" opacity="0.6"/>
<path d="M1903.5 72.5 L1909.5 67.5 V77.5 Z" fill="#fff"/>
<rect x="200" y="985" width="1720" height="3" fill="#262626" />
<rect x="200" y="988" width="1720" height="62" fill="url(#gStrip)" />
<rect x="201" y="988.5" width="45" height="60" rx="3" fill="url(#gThumb)"/>
<circle cx="223.5" cy="997.5" r="7" fill="#777"/>
<path d="M219.5 1000 L223.5 995 L227.5 1000 Z" fill="#222"/>
<rect x="206" y="1014.3" width="34.7" height="29.6" rx="3" fill="#ffff00" stroke="#b0b000" stroke-width="0.6"/>
<rect x="252.2" y="988.5" width="149.6" height="60" rx="4" fill="url(#gThumb)"/>
<rect x="257.7" y="993.2" width="139.1" height="35.7" rx="3" fill="#c2c2a4" stroke="#8a8a70" stroke-width="0.6"/>
<text x="327.0" y="1044" font-size="11.5" fill="#2a2a2a" text-anchor="middle">20%</text>
<rect x="404.2" y="988.5" width="149.6" height="60" rx="4" fill="url(#gThumb)"/>
<rect x="409.7" y="993.2" width="139.1" height="35.7" rx="3" fill="#c3c186" stroke="#8a8a70" stroke-width="0.6"/>
<text x="479.0" y="1044" font-size="11.5" fill="#2a2a2a" text-anchor="middle">40%</text>
<rect x="556.2" y="988.5" width="149.6" height="60" rx="4" fill="url(#gThumb)"/>
<rect x="561.7" y="993.2" width="139.1" height="35.7" rx="3" fill="#c4c16c" stroke="#8a8a70" stroke-width="0.6"/>
<text x="631.0" y="1044" font-size="11.5" fill="#2a2a2a" text-anchor="middle">60%</text>
<rect x="708.2" y="988.5" width="149.6" height="60" rx="4" fill="url(#gThumb)"/>
<rect x="713.7" y="993.2" width="139.1" height="35.7" rx="3" fill="#c3be4c" stroke="#8a8a70" stroke-width="0.6"/>
<text x="783.0" y="1044" font-size="11.5" fill="#2a2a2a" text-anchor="middle">80%</text>
<rect x="860.2" y="988.5" width="149.6" height="60" rx="4" fill="url(#gThumbSel)"/>
<rect x="865.7" y="993.2" width="139.1" height="35.7" rx="3" fill="#c8c400" stroke="#888800" stroke-width="0.6"/>
<text x="935.0" y="1044" font-size="11.5" fill="#ffffff" text-anchor="middle" font-weight="bold">100%</text>
<rect x="1872" y="988" width="40" height="30" fill="#2e2e2e" />
<circle cx="1896" cy="1008" r="9" fill="#3a3a3a"/>
<rect x="1646" y="988" width="226" height="29.5" rx="3" fill="url(#gCtl)"/>
<line x1="1692.3" y1="989" x2="1692.3" y2="1017" stroke="#4a4a4a" stroke-width="1" />
<line x1="1737.8" y1="989" x2="1737.8" y2="1017" stroke="#4a4a4a" stroke-width="1" />
<line x1="1782.5" y1="989" x2="1782.5" y2="1017" stroke="#4a4a4a" stroke-width="1" />
<line x1="1828" y1="989" x2="1828" y2="1017" stroke="#4a4a4a" stroke-width="1" />
<circle cx="1669" cy="1009" r="8.5" fill="url(#gCirc)" opacity="0.8"/>
<circle cx="1715" cy="1009" r="8.5" fill="url(#gCirc)" opacity="0.8"/>
<circle cx="1760" cy="1009" r="8.5" fill="url(#gCirc)" opacity="0.8"/>
<circle cx="1805" cy="1009" r="8.5" fill="url(#gCirc)" opacity="0.8"/>
<circle cx="1850" cy="1009" r="8.5" fill="url(#gCirc)" opacity="0.8"/>
<rect x="1666" y="1004" width="2.2" height="8" fill="#222"/><rect x="1670" y="1004" width="2.2" height="8" fill="#222"/>
<path d="M1712 1004 L1719 1008 L1712 1012 Z" fill="#222"/>
<rect x="1597" y="1007" width="48" height="45" rx="3" fill="url(#gCtl)"/>
<rect x="1607" y="1013" width="28" height="30" rx="4" fill="#777" stroke="#222" stroke-width="2"/>
<rect x="1614" y="1021" width="14" height="13" fill="#000" />
<rect x="1646.5" y="1019.5" width="272" height="28.5" rx="3" fill="url(#gNav)" stroke="#555" stroke-width="1"/>
<line x1="1782.3" y1="1020" x2="1782.3" y2="1048" stroke="#444" stroke-width="1.2" />
<circle cx="1677.3" cy="1034" r="10" fill="#8c8c8c"/>
<circle cx="1890.8" cy="1034" r="10" fill="#8c8c8c"/>
<text x="1677.3" y="1039.5" font-size="17" fill="#333" text-anchor="middle" font-weight="bold">«</text>
<text x="1890.8" y="1039.5" font-size="17" fill="#333" text-anchor="middle" font-weight="bold">»</text>
<text x="1703.5" y="1042" font-size="21.5" fill="#2a2a2a" textLength="50.5" lengthAdjust="spacingAndGlyphs" stroke="#2a2a2a" stroke-width="0.5">Back</text>
<text x="1810.5" y="1042" font-size="21.5" fill="#2a2a2a" textLength="51.5" lengthAdjust="spacingAndGlyphs" stroke="#2a2a2a" stroke-width="0.5">Next</text>
<rect x="1203" y="104" width="716" height="614.6" fill="#1e1e1e" />
<rect x="1211" y="111.4" width="701" height="599.6" fill="#333333" />
<text x="1562" y="131.5" font-size="14.5" fill="#d2d2d2" text-anchor="middle" textLength="88" lengthAdjust="spacingAndGlyphs">CIE 1976 u'v'</text>
<rect x="1249.7" y="136.5" width="659" height="542.2" fill="#232323" />
<g clip-path="url(#cpPlot)"><g clip-path="url(#cpLocus)" shape-rendering="crispEdges"><rect x="1249" y="148" width="661" height="4" fill="url(#r0)"/><rect x="1249" y="152" width="661" height="4" fill="url(#r1)"/><rect x="1249" y="156" width="661" height="4" fill="url(#r2)"/><rect x="1249" y="160" width="661" height="4" fill="url(#r3)"/><rect x="1249" y="164" width="661" height="4" fill="url(#r4)"/><rect x="1249" y="168" width="661" height="4" fill="url(#r5)"/><rect x="1249" y="172" width="661" height="4" fill="url(#r6)"/><rect x="1249" y="176" width="661" height="4" fill="url(#r7)"/><rect x="1249" y="180" width="661" height="4" fill="url(#r8)"/><rect x="1249" y="184" width="661" height="4" fill="url(#r9)"/><rect x="1249" y="188" width="661" height="4" fill="url(#r10)"/><rect x="1249" y="192" width="661" height="4" fill="url(#r11)"/><rect x="1249" y="196" width="661" height="4" fill="url(#r12)"/><rect x="1249" y="200" width="661" height="4" fill="url(#r13)"/><rect x="1249" y="204" width="661" height="4" fill="url(#r14)"/><rect x="1249" y="208" width="661" height="4" fill="url(#r15)"/><rect x="1249" y="212" width="661" height="4" fill="url(#r16)"/><rect x="1249" y="216" width="661" height="4" fill="url(#r17)"/><rect x="1249" y="220" width="661" height="4" fill="url(#r18)"/><rect x="1249" y="224" width="661" height="4" fill="url(#r19)"/><rect x="1249" y="228" width="661" height="4" fill="url(#r20)"/><rect x="1249" y="232" width="661" height="4" fill="url(#r21)"/><rect x="1249" y="236" width="661" height="4" fill="url(#r22)"/><rect x="1249" y="240" width="661" height="4" fill="url(#r23)"/><rect x="1249" y="244" width="661" height="4" fill="url(#r24)"/><rect x="1249" y="248" width="661" height="4" fill="url(#r25)"/><rect x="1249" y="252" width="661" height="4" fill="url(#r26)"/><rect x="1249" y="256" width="661" height="4" fill="url(#r27)"/><rect x="1249" y="260" width="661" height="4" fill="url(#r28)"/><rect x="1249" y="264" width="661" height="4" fill="url(#r29)"/><rect x="1249" y="268" width="661" height="4" fill="url(#r30)"/><rect x="1249" y="272" width="661" height="4" fill="url(#r31)"/><rect x="1249" y="276" width="661" height="4" fill="url(#r32)"/><rect x="1249" y="280" width="661" height="4" fill="url(#r33)"/><rect x="1249" y="284" width="661" height="4" fill="url(#r34)"/><rect x="1249" y="288" width="661" height="4" fill="url(#r35)"/><rect x="1249" y="292" width="661" height="4" fill="url(#r36)"/><rect x="1249" y="296" width="661" height="4" fill="url(#r37)"/><rect x="1249" y="300" width="661" height="4" fill="url(#r38)"/><rect x="1249" y="304" width="661" height="4" fill="url(#r39)"/><rect x="1249" y="308" width="661" height="4" fill="url(#r40)"/><rect x="1249" y="312" width="661" height="4" fill="url(#r41)"/><rect x="1249" y="316" width="661" height="4" fill="url(#r42)"/><rect x="1249" y="320" width="661" height="4" fill="url(#r43)"/><rect x="1249" y="324" width="661" height="4" fill="url(#r44)"/><rect x="1249" y="328" width="661" height="4" fill="url(#r45)"/><rect x="1249" y="332" width="661" height="4" fill="url(#r46)"/><rect x="1249" y="336" width="661" height="4" fill="url(#r47)"/><rect x="1249" y="340" width="661" height="4" fill="url(#r48)"/><rect x="1249" y="344" width="661" height="4" fill="url(#r49)"/><rect x="1249" y="348" width="661" height="4" fill="url(#r50)"/><rect x="1249" y="352" width="661" height="4" fill="url(#r51)"/><rect x="1249" y="356" width="661" height="4" fill="url(#r52)"/><rect x="1249" y="360" width="661" height="4" fill="url(#r53)"/><rect x="1249" y="364" width="661" height="4" fill="url(#r54)"/><rect x="1249" y="368" width="661" height="4" fill="url(#r55)"/><rect x="1249" y="372" width="661" height="4" fill="url(#r56)"/><rect x="1249" y="376" width="661" height="4" fill="url(#r57)"/><rect x="1249" y="380" width="661" height="4" fill="url(#r58)"/><rect x="1249" y="384" width="661" height="4" fill="url(#r59)"/><rect x="1249" y="388" width="661" height="4" fill="url(#r60)"/><rect x="1249" y="392" width="661" height="4" fill="url(#r61)"/><rect x="1249" y="396" width="661" height="4" fill="url(#r62)"/><rect x="1249" y="400" width="661" height="4" fill="url(#r63)"/><rect x="1249" y="404" width="661" height="4" fill="url(#r64)"/><rect x="1249" y="408" width="661" height="4" fill="url(#r65)"/><rect x="1249" y="412" width="661" height="4" fill="url(#r66)"/><rect x="1249" y="416" width="661" height="4" fill="url(#r67)"/><rect x="1249" y="420" width="661" height="4" fill="url(#r68)"/><rect x="1249" y="424" width="661" height="4" fill="url(#r69)"/><rect x="1249" y="428" width="661" height="4" fill="url(#r70)"/><rect x="1249" y="432" width="661" height="4" fill="url(#r71)"/><rect x="1249" y="436" width="661" height="4" fill="url(#r72)"/><rect x="1249" y="440" width="661" height="4" fill="url(#r73)"/><rect x="1249" y="444" width="661" height="4" fill="url(#r74)"/><rect x="1249" y="448" width="661" height="4" fill="url(#r75)"/><rect x="1249" y="452" width="661" height="4" fill="url(#r76)"/><rect x="1249" y="456" width="661" height="4" fill="url(#r77)"/><rect x="1249" y="460" width="661" height="4" fill="url(#r78)"/><rect x="1249" y="464" width="661" height="4" fill="url(#r79)"/><rect x="1249" y="468" width="661" height="4" fill="url(#r80)"/><rect x="1249" y="472" width="661" height="4" fill="url(#r81)"/><rect x="1249" y="476" width="661" height="4" fill="url(#r82)"/><rect x="1249" y="480" width="661" height="4" fill="url(#r83)"/><rect x="1249" y="484" width="661" height="4" fill="url(#r84)"/><rect x="1249" y="488" width="661" height="4" fill="url(#r85)"/><rect x="1249" y="492" width="661" height="4" fill="url(#r86)"/><rect x="1249" y="496" width="661" height="4" fill="url(#r87)"/><rect x="1249" y="500" width="661" height="4" fill="url(#r88)"/><rect x="1249" y="504" width="661" height="4" fill="url(#r89)"/><rect x="1249" y="508" width="661" height="4" fill="url(#r90)"/><rect x="1249" y="512" width="661" height="4" fill="url(#r91)"/><rect x="1249" y="516" width="661" height="4" fill="url(#r92)"/><rect x="1249" y="520" width="661" height="4" fill="url(#r93)"/><rect x="1249" y="524" width="661" height="4" fill="url(#r94)"/><rect x="1249" y="528" width="661" height="4" fill="url(#r95)"/><rect x="1249" y="532" width="661" height="4" fill="url(#r96)"/><rect x="1249" y="536" width="661" height="4" fill="url(#r97)"/><rect x="1249" y="540" width="661" height="4" fill="url(#r98)"/><rect x="1249" y="544" width="661" height="4" fill="url(#r99)"/><rect x="1249" y="548" width="661" height="4" fill="url(#r100)"/><rect x="1249" y="552" width="661" height="4" fill="url(#r101)"/><rect x="1249" y="556" width="661" height="4" fill="url(#r102)"/><rect x="1249" y="560" width="661" height="4" fill="url(#r103)"/><rect x="1249" y="564" width="661" height="4" fill="url(#r104)"/><rect x="1249" y="568" width="661" height="4" fill="url(#r105)"/><rect x="1249" y="572" width="661" height="4" fill="url(#r106)"/><rect x="1249" y="576" width="661" height="4" fill="url(#r107)"/><rect x="1249" y="580" width="661" height="4" fill="url(#r108)"/><rect x="1249" y="584" width="661" height="4" fill="url(#r109)"/><rect x="1249" y="588" width="661" height="4" fill="url(#r110)"/><rect x="1249" y="592" width="661" height="4" fill="url(#r111)"/><rect x="1249" y="596" width="661" height="4" fill="url(#r112)"/><rect x="1249" y="600" width="661" height="4" fill="url(#r113)"/><rect x="1249" y="604" width="661" height="4" fill="url(#r114)"/><rect x="1249" y="608" width="661" height="4" fill="url(#r115)"/><rect x="1249" y="612" width="661" height="4" fill="url(#r116)"/><rect x="1249" y="616" width="661" height="4" fill="url(#r117)"/><rect x="1249" y="620" width="661" height="4" fill="url(#r118)"/><rect x="1249" y="624" width="661" height="4" fill="url(#r119)"/><rect x="1249" y="628" width="661" height="4" fill="url(#r120)"/><rect x="1249" y="632" width="661" height="4" fill="url(#r121)"/><rect x="1249" y="636" width="661" height="4" fill="url(#r122)"/><rect x="1249" y="640" width="661" height="4" fill="url(#r123)"/><rect x="1249" y="644" width="661" height="4" fill="url(#r124)"/><rect x="1249" y="648" width="661" height="4" fill="url(#r125)"/><rect x="1249" y="652" width="661" height="4" fill="url(#r126)"/><rect x="1249" y="656" width="661" height="4" fill="url(#r127)"/><rect x="1249" y="660" width="661" height="4" fill="url(#r128)"/><rect x="1249" y="664" width="661" height="4" fill="url(#r129)"/></g>
<g clip-path="url(#cpTri)" shape-rendering="crispEdges"><rect x="1385" y="170" width="359" height="3" fill="url(#r130)"/><rect x="1385" y="173" width="359" height="3" fill="url(#r131)"/><rect x="1385" y="176" width="359" height="3" fill="url(#r132)"/><rect x="1385" y="179" width="359" height="3" fill="url(#r133)"/><rect x="1385" y="182" width="359" height="3" fill="url(#r134)"/><rect x="1385" y="185" width="359" height="3" fill="url(#r135)"/><rect x="1385" y="188" width="359" height="3" fill="url(#r136)"/><rect x="1385" y="191" width="359" height="3" fill="url(#r137)"/><rect x="1385" y="194" width="359" height="3" fill="url(#r138)"/><rect x="1385" y="197" width="359" height="3" fill="url(#r139)"/><rect x="1385" y="200" width="359" height="3" fill="url(#r140)"/><rect x="1385" y="203" width="359" height="3" fill="url(#r141)"/><rect x="1385" y="206" width="359" height="3" fill="url(#r142)"/><rect x="1385" y="209" width="359" height="3" fill="url(#r143)"/><rect x="1385" y="212" width="359" height="3" fill="url(#r144)"/><rect x="1385" y="215" width="359" height="3" fill="url(#r145)"/><rect x="1385" y="218" width="359" height="3" fill="url(#r146)"/><rect x="1385" y="221" width="359" height="3" fill="url(#r147)"/><rect x="1385" y="224" width="359" height="3" fill="url(#r148)"/><rect x="1385" y="227" width="359" height="3" fill="url(#r149)"/><rect x="1385" y="230" width="359" height="3" fill="url(#r150)"/><rect x="1385" y="233" width="359" height="3" fill="url(#r151)"/><rect x="1385" y="236" width="359" height="3" fill="url(#r152)"/><rect x="1385" y="239" width="359" height="3" fill="url(#r153)"/><rect x="1385" y="242" width="359" height="3" fill="url(#r154)"/><rect x="1385" y="245" width="359" height="3" fill="url(#r155)"/><rect x="1385" y="248" width="359" height="3" fill="url(#r156)"/><rect x="1385" y="251" width="359" height="3" fill="url(#r157)"/><rect x="1385" y="254" width="359" height="3" fill="url(#r158)"/><rect x="1385" y="257" width="359" height="3" fill="url(#r159)"/><rect x="1385" y="260" width="359" height="3" fill="url(#r160)"/><rect x="1385" y="263" width="359" height="3" fill="url(#r161)"/><rect x="1385" y="266" width="359" height="3" fill="url(#r162)"/><rect x="1385" y="269" width="359" height="3" fill="url(#r163)"/><rect x="1385" y="272" width="359" height="3" fill="url(#r164)"/><rect x="1385" y="275" width="359" height="3" fill="url(#r165)"/><rect x="1385" y="278" width="359" height="3" fill="url(#r166)"/><rect x="1385" y="281" width="359" height="3" fill="url(#r167)"/><rect x="1385" y="284" width="359" height="3" fill="url(#r168)"/><rect x="1385" y="287" width="359" height="3" fill="url(#r169)"/><rect x="1385" y="290" width="359" height="3" fill="url(#r170)"/><rect x="1385" y="293" width="359" height="3" fill="url(#r171)"/><rect x="1385" y="296" width="359" height="3" fill="url(#r172)"/><rect x="1385" y="299" width="359" height="3" fill="url(#r173)"/><rect x="1385" y="302" width="359" height="3" fill="url(#r174)"/><rect x="1385" y="305" width="359" height="3" fill="url(#r175)"/><rect x="1385" y="308" width="359" height="3" fill="url(#r176)"/><rect x="1385" y="311" width="359" height="3" fill="url(#r177)"/><rect x="1385" y="314" width="359" height="3" fill="url(#r178)"/><rect x="1385" y="317" width="359" height="3" fill="url(#r179)"/><rect x="1385" y="320" width="359" height="3" fill="url(#r180)"/><rect x="1385" y="323" width="359" height="3" fill="url(#r181)"/><rect x="1385" y="326" width="359" height="3" fill="url(#r182)"/><rect x="1385" y="329" width="359" height="3" fill="url(#r183)"/><rect x="1385" y="332" width="359" height="3" fill="url(#r184)"/><rect x="1385" y="335" width="359" height="3" fill="url(#r185)"/><rect x="1385" y="338" width="359" height="3" fill="url(#r186)"/><rect x="1385" y="341" width="359" height="3" fill="url(#r187)"/><rect x="1385" y="344" width="359" height="3" fill="url(#r188)"/><rect x="1385" y="347" width="359" height="3" fill="url(#r189)"/><rect x="1385" y="350" width="359" height="3" fill="url(#r190)"/><rect x="1385" y="353" width="359" height="3" fill="url(#r191)"/><rect x="1385" y="356" width="359" height="3" fill="url(#r192)"/><rect x="1385" y="359" width="359" height="3" fill="url(#r193)"/><rect x="1385" y="362" width="359" height="3" fill="url(#r194)"/><rect x="1385" y="365" width="359" height="3" fill="url(#r195)"/><rect x="1385" y="368" width="359" height="3" fill="url(#r196)"/><rect x="1385" y="371" width="359" height="3" fill="url(#r197)"/><rect x="1385" y="374" width="359" height="3" fill="url(#r198)"/><rect x="1385" y="377" width="359" height="3" fill="url(#r199)"/><rect x="1385" y="380" width="359" height="3" fill="url(#r200)"/><rect x="1385" y="383" width="359" height="3" fill="url(#r201)"/><rect x="1385" y="386" width="359" height="3" fill="url(#r202)"/><rect x="1385" y="389" width="359" height="3" fill="url(#r203)"/><rect x="1385" y="392" width="359" height="3" fill="url(#r204)"/><rect x="1385" y="395" width="359" height="3" fill="url(#r205)"/><rect x="1385" y="398" width="359" height="3" fill="url(#r206)"/><rect x="1385" y="401" width="359" height="3" fill="url(#r207)"/><rect x="1385" y="404" width="359" height="3" fill="url(#r208)"/><rect x="1385" y="407" width="359" height="3" fill="url(#r209)"/><rect x="1385" y="410" width="359" height="3" fill="url(#r210)"/><rect x="1385" y="413" width="359" height="3" fill="url(#r211)"/><rect x="1385" y="416" width="359" height="3" fill="url(#r212)"/><rect x="1385" y="419" width="359" height="3" fill="url(#r213)"/><rect x="1385" y="422" width="359" height="3" fill="url(#r214)"/><rect x="1385" y="425" width="359" height="3" fill="url(#r215)"/><rect x="1385" y="428" width="359" height="3" fill="url(#r216)"/><rect x="1385" y="431" width="359" height="3" fill="url(#r217)"/><rect x="1385" y="434" width="359" height="3" fill="url(#r218)"/><rect x="1385" y="437" width="359" height="3" fill="url(#r219)"/><rect x="1385" y="440" width="359" height="3" fill="url(#r220)"/><rect x="1385" y="443" width="359" height="3" fill="url(#r221)"/><rect x="1385" y="446" width="359" height="3" fill="url(#r222)"/><rect x="1385" y="449" width="359" height="3" fill="url(#r223)"/><rect x="1385" y="452" width="359" height="3" fill="url(#r224)"/><rect x="1385" y="455" width="359" height="3" fill="url(#r225)"/><rect x="1385" y="458" width="359" height="3" fill="url(#r226)"/><rect x="1385" y="461" width="359" height="3" fill="url(#r227)"/><rect x="1385" y="464" width="359" height="3" fill="url(#r228)"/><rect x="1385" y="467" width="359" height="3" fill="url(#r229)"/><rect x="1385" y="470" width="359" height="3" fill="url(#r230)"/><rect x="1385" y="473" width="359" height="3" fill="url(#r231)"/><rect x="1385" y="476" width="359" height="3" fill="url(#r232)"/><rect x="1385" y="479" width="359" height="3" fill="url(#r233)"/><rect x="1385" y="482" width="359" height="3" fill="url(#r234)"/><rect x="1385" y="485" width="359" height="3" fill="url(#r235)"/><rect x="1385" y="488" width="359" height="3" fill="url(#r236)"/><rect x="1385" y="491" width="359" height="3" fill="url(#r237)"/><rect x="1385" y="494" width="359" height="3" fill="url(#r238)"/><rect x="1385" y="497" width="359" height="3" fill="url(#r239)"/><rect x="1385" y="500" width="359" height="3" fill="url(#r240)"/><rect x="1385" y="503" width="359" height="3" fill="url(#r241)"/><rect x="1385" y="506" width="359" height="3" fill="url(#r242)"/><rect x="1385" y="509" width="359" height="3" fill="url(#r243)"/><rect x="1385" y="512" width="359" height="3" fill="url(#r244)"/><rect x="1385" y="515" width="359" height="3" fill="url(#r245)"/><rect x="1385" y="518" width="359" height="3" fill="url(#r246)"/><rect x="1385" y="521" width="359" height="3" fill="url(#r247)"/><rect x="1385" y="524" width="359" height="3" fill="url(#r248)"/><rect x="1385" y="527" width="359" height="3" fill="url(#r249)"/><rect x="1385" y="530" width="359" height="3" fill="url(#r250)"/><rect x="1385" y="533" width="359" height="3" fill="url(#r251)"/><rect x="1385" y="536" width="359" height="3" fill="url(#r252)"/></g></g>
<rect x="1249.7" y="136.5" width="659" height="542.2" fill="none" stroke="#9a9a9a" stroke-width="1.5"/>
<line x1="1249.7" y1="679" x2="1249.7" y2="686" stroke="#bfbfbf" stroke-width="1.5" />
<text x="1249.7" y="703" font-size="15.2" fill="#d2d2d2" text-anchor="middle">0</text>
<line x1="1304.4" y1="679" x2="1304.4" y2="686" stroke="#bfbfbf" stroke-width="1.5" />
<text x="1304.4" y="703" font-size="15.2" fill="#d2d2d2" text-anchor="middle">0.05</text>
<line x1="1359.1000000000001" y1="679" x2="1359.1000000000001" y2="686" stroke="#bfbfbf" stroke-width="1.5" />
<text x="1359.1000000000001" y="703" font-size="15.2" fill="#d2d2d2" text-anchor="middle">0.1</text>
<line x1="1413.8000000000002" y1="679" x2="1413.8000000000002" y2="686" stroke="#bfbfbf" stroke-width="1.5" />
<text x="1413.8000000000002" y="703" font-size="15.2" fill="#d2d2d2" text-anchor="middle">0.15</text>
<line x1="1468.5" y1="679" x2="1468.5" y2="686" stroke="#bfbfbf" stroke-width="1.5" />
<text x="1468.5" y="703" font-size="15.2" fill="#d2d2d2" text-anchor="middle">0.2</text>
<line x1="1523.2" y1="679" x2="1523.2" y2="686" stroke="#bfbfbf" stroke-width="1.5" />
<text x="1523.2" y="703" font-size="15.2" fill="#d2d2d2" text-anchor="middle">0.25</text>
<line x1="1577.9" y1="679" x2="1577.9" y2="686" stroke="#bfbfbf" stroke-width="1.5" />
<text x="1577.9" y="703" font-size="15.2" fill="#d2d2d2" text-anchor="middle">0.3</text>
<line x1="1632.6000000000001" y1="679" x2="1632.6000000000001" y2="686" stroke="#bfbfbf" stroke-width="1.5" />
<text x="1632.6000000000001" y="703" font-size="15.2" fill="#d2d2d2" text-anchor="middle">0.35</text>
<line x1="1687.3000000000002" y1="679" x2="1687.3000000000002" y2="686" stroke="#bfbfbf" stroke-width="1.5" />
<text x="1687.3000000000002" y="703" font-size="15.2" fill="#d2d2d2" text-anchor="middle">0.4</text>
<line x1="1742.0" y1="679" x2="1742.0" y2="686" stroke="#bfbfbf" stroke-width="1.5" />
<text x="1742.0" y="703" font-size="15.2" fill="#d2d2d2" text-anchor="middle">0.45</text>
<line x1="1796.7" y1="679" x2="1796.7" y2="686" stroke="#bfbfbf" stroke-width="1.5" />
<text x="1796.7" y="703" font-size="15.2" fill="#d2d2d2" text-anchor="middle">0.5</text>
<line x1="1851.4" y1="679" x2="1851.4" y2="686" stroke="#bfbfbf" stroke-width="1.5" />
<text x="1851.4" y="703" font-size="15.2" fill="#d2d2d2" text-anchor="middle">0.55</text>
<line x1="1243" y1="678.5" x2="1249.7" y2="678.5" stroke="#bfbfbf" stroke-width="1.5" />
<text x="1242" y="684.0" font-size="15.2" fill="#d2d2d2" text-anchor="end">0</text>
<line x1="1243" y1="633.5" x2="1249.7" y2="633.5" stroke="#bfbfbf" stroke-width="1.5" />
<text x="1242" y="639.0" font-size="15.2" fill="#d2d2d2" text-anchor="end">0.05</text>
<line x1="1243" y1="588.5" x2="1249.7" y2="588.5" stroke="#bfbfbf" stroke-width="1.5" />
<text x="1242" y="594.0" font-size="15.2" fill="#d2d2d2" text-anchor="end">0.1</text>
<line x1="1243" y1="543.5" x2="1249.7" y2="543.5" stroke="#bfbfbf" stroke-width="1.5" />
<text x="1242" y="549.0" font-size="15.2" fill="#d2d2d2" text-anchor="end">0.15</text>
<line x1="1243" y1="498.5" x2="1249.7" y2="498.5" stroke="#bfbfbf" stroke-width="1.5" />
<text x="1242" y="504.0" font-size="15.2" fill="#d2d2d2" text-anchor="end">0.2</text>
<line x1="1243" y1="453.5" x2="1249.7" y2="453.5" stroke="#bfbfbf" stroke-width="1.5" />
<text x="1242" y="459.0" font-size="15.2" fill="#d2d2d2" text-anchor="end">0.25</text>
<line x1="1243" y1="408.49999999999994" x2="1249.7" y2="408.49999999999994" stroke="#bfbfbf" stroke-width="1.5" />
<text x="1242" y="413.99999999999994" font-size="15.2" fill="#d2d2d2" text-anchor="end">0.3</text>
<line x1="1243" y1="363.49999999999994" x2="1249.7" y2="363.49999999999994" stroke="#bfbfbf" stroke-width="1.5" />
<text x="1242" y="368.99999999999994" font-size="15.2" fill="#d2d2d2" text-anchor="end">0.35</text>
<line x1="1243" y1="318.5" x2="1249.7" y2="318.5" stroke="#bfbfbf" stroke-width="1.5" />
<text x="1242" y="324.0" font-size="15.2" fill="#d2d2d2" text-anchor="end">0.4</text>
<line x1="1243" y1="273.5" x2="1249.7" y2="273.5" stroke="#bfbfbf" stroke-width="1.5" />
<text x="1242" y="279.0" font-size="15.2" fill="#d2d2d2" text-anchor="end">0.45</text>
<line x1="1243" y1="228.5" x2="1249.7" y2="228.5" stroke="#bfbfbf" stroke-width="1.5" />
<text x="1242" y="234.0" font-size="15.2" fill="#d2d2d2" text-anchor="end">0.5</text>
<line x1="1243" y1="183.49999999999994" x2="1249.7" y2="183.49999999999994" stroke="#bfbfbf" stroke-width="1.5" />
<text x="1242" y="188.99999999999994" font-size="15.2" fill="#d2d2d2" text-anchor="end">0.55</text>
<rect x="1680.5" y="508" width="224.7" height="164.8" fill="#2a2a2a" />
<g clip-path="url(#cpInset)"><g shape-rendering="crispEdges"><rect x="1684" y="512.5" width="218" height="3" fill="url(#r253)"/><rect x="1684" y="515.5" width="218" height="3" fill="url(#r254)"/><rect x="1684" y="518.5" width="218" height="3" fill="url(#r255)"/><rect x="1684" y="521.5" width="218" height="3" fill="url(#r256)"/><rect x="1684" y="524.5" width="218" height="3" fill="url(#r257)"/><rect x="1684" y="527.5" width="218" height="3" fill="url(#r258)"/><rect x="1684" y="530.5" width="218" height="3" fill="url(#r259)"/><rect x="1684" y="533.5" width="218" height="3" fill="url(#r260)"/><rect x="1684" y="536.5" width="218" height="3" fill="url(#r261)"/><rect x="1684" y="539.5" width="218" height="3" fill="url(#r262)"/><rect x="1684" y="542.5" width="218" height="3" fill="url(#r263)"/><rect x="1684" y="545.5" width="218" height="3" fill="url(#r264)"/><rect x="1684" y="548.5" width="218" height="3" fill="url(#r265)"/><rect x="1684" y="551.5" width="218" height="3" fill="url(#r266)"/><rect x="1684" y="554.5" width="218" height="3" fill="url(#r267)"/><rect x="1684" y="557.5" width="218" height="3" fill="url(#r268)"/><rect x="1684" y="560.5" width="218" height="3" fill="url(#r269)"/><rect x="1684" y="563.5" width="218" height="3" fill="url(#r270)"/><rect x="1684" y="566.5" width="218" height="3" fill="url(#r271)"/><rect x="1684" y="569.5" width="218" height="3" fill="url(#r272)"/><rect x="1684" y="572.5" width="218" height="3" fill="url(#r273)"/><rect x="1684" y="575.5" width="218" height="3" fill="url(#r274)"/><rect x="1684" y="578.5" width="218" height="3" fill="url(#r275)"/><rect x="1684" y="581.5" width="218" height="3" fill="url(#r276)"/><rect x="1684" y="584.5" width="218" height="3" fill="url(#r277)"/><rect x="1684" y="587.5" width="218" height="3" fill="url(#r278)"/><rect x="1684" y="590.5" width="218" height="3" fill="url(#r279)"/><rect x="1684" y="593.5" width="218" height="3" fill="url(#r280)"/><rect x="1684" y="596.5" width="218" height="3" fill="url(#r281)"/><rect x="1684" y="599.5" width="218" height="3" fill="url(#r282)"/><rect x="1684" y="602.5" width="218" height="3" fill="url(#r283)"/><rect x="1684" y="605.5" width="218" height="3" fill="url(#r284)"/><rect x="1684" y="608.5" width="218" height="3" fill="url(#r285)"/><rect x="1684" y="611.5" width="218" height="3" fill="url(#r286)"/><rect x="1684" y="614.5" width="218" height="3" fill="url(#r287)"/><rect x="1684" y="617.5" width="218" height="3" fill="url(#r288)"/><rect x="1684" y="620.5" width="218" height="3" fill="url(#r289)"/><rect x="1684" y="623.5" width="218" height="3" fill="url(#r290)"/><rect x="1684" y="626.5" width="218" height="3" fill="url(#r291)"/><rect x="1684" y="629.5" width="218" height="3" fill="url(#r292)"/><rect x="1684" y="632.5" width="218" height="3" fill="url(#r293)"/><rect x="1684" y="635.5" width="218" height="3" fill="url(#r294)"/><rect x="1684" y="638.5" width="218" height="3" fill="url(#r295)"/><rect x="1684" y="641.5" width="218" height="3" fill="url(#r296)"/><rect x="1684" y="644.5" width="218" height="3" fill="url(#r297)"/><rect x="1684" y="647.5" width="218" height="3" fill="url(#r298)"/><rect x="1684" y="650.5" width="218" height="3" fill="url(#r299)"/><rect x="1684" y="653.5" width="218" height="3" fill="url(#r300)"/><rect x="1684" y="656.5" width="218" height="3" fill="url(#r301)"/><rect x="1684" y="659.5" width="218" height="3" fill="url(#r302)"/><rect x="1684" y="662.5" width="218" height="3" fill="url(#r303)"/><rect x="1684" y="665.5" width="218" height="3" fill="url(#r304)"/><rect x="1684" y="668.5" width="218" height="3" fill="url(#r305)"/></g><g clip-path="url(#cpInsetIn)" shape-rendering="crispEdges"><rect x="1684" y="512.5" width="218" height="3" fill="url(#r306)"/><rect x="1684" y="515.5" width="218" height="3" fill="url(#r307)"/><rect x="1684" y="518.5" width="218" height="3" fill="url(#r308)"/><rect x="1684" y="521.5" width="218" height="3" fill="url(#r309)"/><rect x="1684" y="524.5" width="218" height="3" fill="url(#r310)"/><rect x="1684" y="527.5" width="218" height="3" fill="url(#r311)"/><rect x="1684" y="530.5" width="218" height="3" fill="url(#r312)"/><rect x="1684" y="533.5" width="218" height="3" fill="url(#r313)"/><rect x="1684" y="536.5" width="218" height="3" fill="url(#r314)"/><rect x="1684" y="539.5" width="218" height="3" fill="url(#r315)"/><rect x="1684" y="542.5" width="218" height="3" fill="url(#r316)"/><rect x="1684" y="545.5" width="218" height="3" fill="url(#r317)"/><rect x="1684" y="548.5" width="218" height="3" fill="url(#r318)"/><rect x="1684" y="551.5" width="218" height="3" fill="url(#r319)"/><rect x="1684" y="554.5" width="218" height="3" fill="url(#r320)"/><rect x="1684" y="557.5" width="218" height="3" fill="url(#r321)"/><rect x="1684" y="560.5" width="218" height="3" fill="url(#r322)"/><rect x="1684" y="563.5" width="218" height="3" fill="url(#r323)"/><rect x="1684" y="566.5" width="218" height="3" fill="url(#r324)"/><rect x="1684" y="569.5" width="218" height="3" fill="url(#r325)"/><rect x="1684" y="572.5" width="218" height="3" fill="url(#r326)"/><rect x="1684" y="575.5" width="218" height="3" fill="url(#r327)"/><rect x="1684" y="578.5" width="218" height="3" fill="url(#r328)"/><rect x="1684" y="581.5" width="218" height="3" fill="url(#r329)"/><rect x="1684" y="584.5" width="218" height="3" fill="url(#r330)"/><rect x="1684" y="587.5" width="218" height="3" fill="url(#r331)"/><rect x="1684" y="590.5" width="218" height="3" fill="url(#r332)"/><rect x="1684" y="593.5" width="218" height="3" fill="url(#r333)"/><rect x="1684" y="596.5" width="218" height="3" fill="url(#r334)"/><rect x="1684" y="599.5" width="218" height="3" fill="url(#r335)"/><rect x="1684" y="602.5" width="218" height="3" fill="url(#r336)"/><rect x="1684" y="605.5" width="218" height="3" fill="url(#r337)"/><rect x="1684" y="608.5" width="218" height="3" fill="url(#r338)"/><rect x="1684" y="611.5" width="218" height="3" fill="url(#r339)"/><rect x="1684" y="614.5" width="218" height="3" fill="url(#r340)"/><rect x="1684" y="617.5" width="218" height="3" fill="url(#r341)"/><rect x="1684" y="620.5" width="218" height="3" fill="url(#r342)"/><rect x="1684" y="623.5" width="218" height="3" fill="url(#r343)"/><rect x="1684" y="626.5" width="218" height="3" fill="url(#r344)"/><rect x="1684" y="629.5" width="218" height="3" fill="url(#r345)"/><rect x="1684" y="632.5" width="218" height="3" fill="url(#r346)"/><rect x="1684" y="635.5" width="218" height="3" fill="url(#r347)"/><rect x="1684" y="638.5" width="218" height="3" fill="url(#r348)"/><rect x="1684" y="641.5" width="218" height="3" fill="url(#r349)"/><rect x="1684" y="644.5" width="218" height="3" fill="url(#r350)"/><rect x="1684" y="647.5" width="218" height="3" fill="url(#r351)"/><rect x="1684" y="650.5" width="218" height="3" fill="url(#r352)"/><rect x="1684" y="653.5" width="218" height="3" fill="url(#r353)"/><rect x="1684" y="656.5" width="218" height="3" fill="url(#r354)"/><rect x="1684" y="659.5" width="218" height="3" fill="url(#r355)"/><rect x="1684" y="662.5" width="218" height="3" fill="url(#r356)"/><rect x="1684" y="665.5" width="218" height="3" fill="url(#r357)"/><rect x="1684" y="668.5" width="218" height="3" fill="url(#r358)"/></g></g>
<rect x="1684" y="512.5" width="218" height="157.5" fill="none" stroke="#a0a0a0" stroke-width="1.6"/>
<rect x="1784.5" y="582.7" width="14.4" height="14.4" fill="none" stroke="#fff" stroke-width="1.8"/>
<circle cx="1804.8" cy="595.9" r="4.6" fill="#c8c000" stroke="#000" stroke-width="1.3"/>
<rect x="1378.3" y="162.7" width="14.4" height="14.4" fill="none" stroke="#fff" stroke-width="1.8"/><rect x="1391.5" y="176.0" width="14.4" height="14.4" fill="none" stroke="#fff" stroke-width="1.8"/><rect x="1403.7" y="189.7" width="14.4" height="14.4" fill="none" stroke="#fff" stroke-width="1.8"/><rect x="1419.4" y="206.0" width="14.4" height="14.4" fill="none" stroke="#fff" stroke-width="1.8"/><rect x="1437.1" y="224.0" width="14.4" height="14.4" fill="none" stroke="#fff" stroke-width="1.8"/><rect x="1465.3" y="171.3" width="14.4" height="14.4" fill="none" stroke="#fff" stroke-width="1.8"/><rect x="1464.3" y="183.7" width="14.4" height="14.4" fill="none" stroke="#fff" stroke-width="1.8"/><rect x="1464.1" y="197.3" width="14.4" height="14.4" fill="none" stroke="#fff" stroke-width="1.8"/><rect x="1462.8" y="212.8" width="14.4" height="14.4" fill="none" stroke="#fff" stroke-width="1.8"/><rect x="1461.3" y="228.9" width="14.4" height="14.4" fill="none" stroke="#fff" stroke-width="1.8"/><rect x="1393.8" y="259.9" width="14.4" height="14.4" fill="none" stroke="#fff" stroke-width="1.8"/><rect x="1406.8" y="256.8" width="14.4" height="14.4" fill="none" stroke="#fff" stroke-width="1.8"/><rect x="1419.5" y="254.9" width="14.4" height="14.4" fill="none" stroke="#fff" stroke-width="1.8"/><rect x="1432.8" y="252.4" width="14.4" height="14.4" fill="none" stroke="#fff" stroke-width="1.8"/><rect x="1445.8" y="251.2" width="14.4" height="14.4" fill="none" stroke="#fff" stroke-width="1.8"/><rect x="1476.8" y="266.1" width="14.4" height="14.4" fill="none" stroke="#fff" stroke-width="1.8"/><rect x="1496.1" y="287.2" width="14.4" height="14.4" fill="none" stroke="#fff" stroke-width="1.8"/><rect x="1515.7" y="309.7" width="14.4" height="14.4" fill="none" stroke="#fff" stroke-width="1.8"/><rect x="1542.8" y="338.1" width="14.4" height="14.4" fill="none" stroke="#fff" stroke-width="1.8"/><rect x="1576.1" y="372.5" width="14.4" height="14.4" fill="none" stroke="#fff" stroke-width="1.8"/><rect x="1508.8" y="239.2" width="14.4" height="14.4" fill="none" stroke="#fff" stroke-width="1.8"/><rect x="1563.8" y="228.7" width="14.4" height="14.4" fill="none" stroke="#fff" stroke-width="1.8"/><rect x="1614.3" y="221.2" width="14.4" height="14.4" fill="none" stroke="#fff" stroke-width="1.8"/><rect x="1670.3" y="210.7" width="14.4" height="14.4" fill="none" stroke="#fff" stroke-width="1.8"/><rect x="1736.3" y="198.8" width="14.4" height="14.4" fill="none" stroke="#fff" stroke-width="1.8"/><rect x="1455.7" y="281.2" width="14.4" height="14.4" fill="none" stroke="#fff" stroke-width="1.8"/><rect x="1452.8" y="321.8" width="14.4" height="14.4" fill="none" stroke="#fff" stroke-width="1.8"/><rect x="1448.8" y="371.2" width="14.4" height="14.4" fill="none" stroke="#fff" stroke-width="1.8"/><rect x="1443.1" y="434.0" width="14.4" height="14.4" fill="none" stroke="#fff" stroke-width="1.8"/><rect x="1434.7" y="528.2" width="14.4" height="14.4" fill="none" stroke="#fff" stroke-width="1.8"/><circle cx="1385.9" cy="171.1" r="4.7" fill="#00b000" stroke="#000" stroke-width="1.3"/><circle cx="1398.0" cy="183.5" r="4.7" fill="#40b040" stroke="#000" stroke-width="1.3"/><circle cx="1410.9" cy="196.9" r="4.7" fill="#60b060" stroke="#000" stroke-width="1.3"/><circle cx="1427.8" cy="214.8" r="4.7" fill="#80b080" stroke="#000" stroke-width="1.3"/><circle cx="1445.9" cy="234.3" r="4.7" fill="#a0b8a0" stroke="#000" stroke-width="1.3"/><circle cx="1475.3" cy="178.8" r="4.7" fill="#c8c000" stroke="#000" stroke-width="1.3"/><circle cx="1474.0" cy="192.4" r="4.7" fill="#c0bc40" stroke="#000" stroke-width="1.3"/><circle cx="1472.8" cy="204.5" r="4.7" fill="#c0b860" stroke="#000" stroke-width="1.3"/><circle cx="1470.9" cy="220.9" r="4.7" fill="#c0bc80" stroke="#000" stroke-width="1.3"/><circle cx="1470.0" cy="239.0" r="4.7" fill="#c0bca0" stroke="#000" stroke-width="1.3"/><circle cx="1399.7" cy="270.2" r="4.7" fill="#00c0c8" stroke="#000" stroke-width="1.3"/><circle cx="1414.0" cy="267.0" r="4.7" fill="#40b8b8" stroke="#000" stroke-width="1.3"/><circle cx="1426.3" cy="264.0" r="4.7" fill="#60b4b4" stroke="#000" stroke-width="1.3"/><circle cx="1440.3" cy="262.7" r="4.7" fill="#80b4b4" stroke="#000" stroke-width="1.3"/><circle cx="1454.2" cy="260.0" r="4.7" fill="#a0b8b8" stroke="#000" stroke-width="1.3"/><circle cx="1484.9" cy="276.4" r="4.7" fill="#c0a0c0" stroke="#000" stroke-width="1.3"/><circle cx="1504.9" cy="297.3" r="4.7" fill="#c080c0" stroke="#000" stroke-width="1.3"/><circle cx="1526.0" cy="319.7" r="4.7" fill="#c070c0" stroke="#000" stroke-width="1.3"/><circle cx="1555.3" cy="350.0" r="4.7" fill="#c050c0" stroke="#000" stroke-width="1.3"/><circle cx="1588.9" cy="387.3" r="4.7" fill="#c000c0" stroke="#000" stroke-width="1.3"/><circle cx="1517.5" cy="247.8" r="4.7" fill="#c09090" stroke="#000" stroke-width="1.3"/><circle cx="1576.3" cy="237.6" r="4.7" fill="#c07070" stroke="#000" stroke-width="1.3"/><circle cx="1631.0" cy="227.0" r="4.7" fill="#c05050" stroke="#000" stroke-width="1.3"/><circle cx="1693.0" cy="216.5" r="4.7" fill="#c04040" stroke="#000" stroke-width="1.3"/><circle cx="1755.0" cy="206.0" r="4.7" fill="#c00000" stroke="#000" stroke-width="1.3"/><circle cx="1464.0" cy="291.3" r="4.7" fill="#9090c0" stroke="#000" stroke-width="1.3"/><circle cx="1460.0" cy="332.0" r="4.7" fill="#7070c0" stroke="#000" stroke-width="1.3"/><circle cx="1456.0" cy="386.0" r="4.7" fill="#6060c0" stroke="#000" stroke-width="1.3"/><circle cx="1449.1" cy="455.2" r="4.7" fill="#5050c0" stroke="#000" stroke-width="1.3"/><circle cx="1440.4" cy="549.1" r="4.7" fill="#0000c0" stroke="#000" stroke-width="1.3"/><rect x="1458.2" y="248.1" width="14.4" height="14.4" fill="none" stroke="#000" stroke-width="2"/><circle cx="1467" cy="259.6" r="4.7" fill="#fff" stroke="#000" stroke-width="1.3"/>
<path d="M1534.4 968.3 L1586.7 978 L1587.6 1007.3 L1547.7 1011.7 L1622 1015.2 L1568 1031.2 L1535.3 1015.2 Z" fill="none" stroke="#d8d8d8" stroke-opacity="0.7" stroke-width="7" stroke-linejoin="round"/><path d="M1534.4 968.3 L1586.7 978 L1587.6 1007.3 L1547.7 1011.7 L1622 1015.2 L1568 1031.2 L1535.3 1015.2 Z" fill="none" stroke="#a4343a" stroke-opacity="0.9" stroke-width="4.4" stroke-linejoin="round"/><path d="M1548 986 L1556 982 L1564.5 996 L1591.5 966 L1594 969 L1566 1006 Z" fill="#3a3a3a" fill-opacity="0.85" stroke="#d0d0d0" stroke-opacity="0.8" stroke-width="1.2" stroke-linejoin="round"/><text x="1594" y="1006" font-size="36" font-weight="bold" fill="none" stroke="#e0e0e0" stroke-opacity="0.7" stroke-width="3.2" textLength="197" lengthAdjust="spacingAndGlyphs">NOTEBOOK</text><text x="1594" y="1006" font-size="36" font-weight="bold" fill="#a4343a" fill-opacity="0.8" stroke="#a4343a" stroke-opacity="0.8" stroke-width="1" textLength="197" lengthAdjust="spacingAndGlyphs">NOTEBOOK</text><text x="1793" y="1006" font-size="36" font-weight="bold" fill="none" stroke="#e0e0e0" stroke-opacity="0.7" stroke-width="3.2" textLength="117" lengthAdjust="spacingAndGlyphs">CHECK</text><text x="1793" y="1006" font-size="36" font-weight="bold" fill="#2a2a2a" fill-opacity="0.55" stroke="#2a2a2a" stroke-opacity="0.55" stroke-width="1" textLength="117" lengthAdjust="spacingAndGlyphs">CHECK</text>
</svg></body></html>
